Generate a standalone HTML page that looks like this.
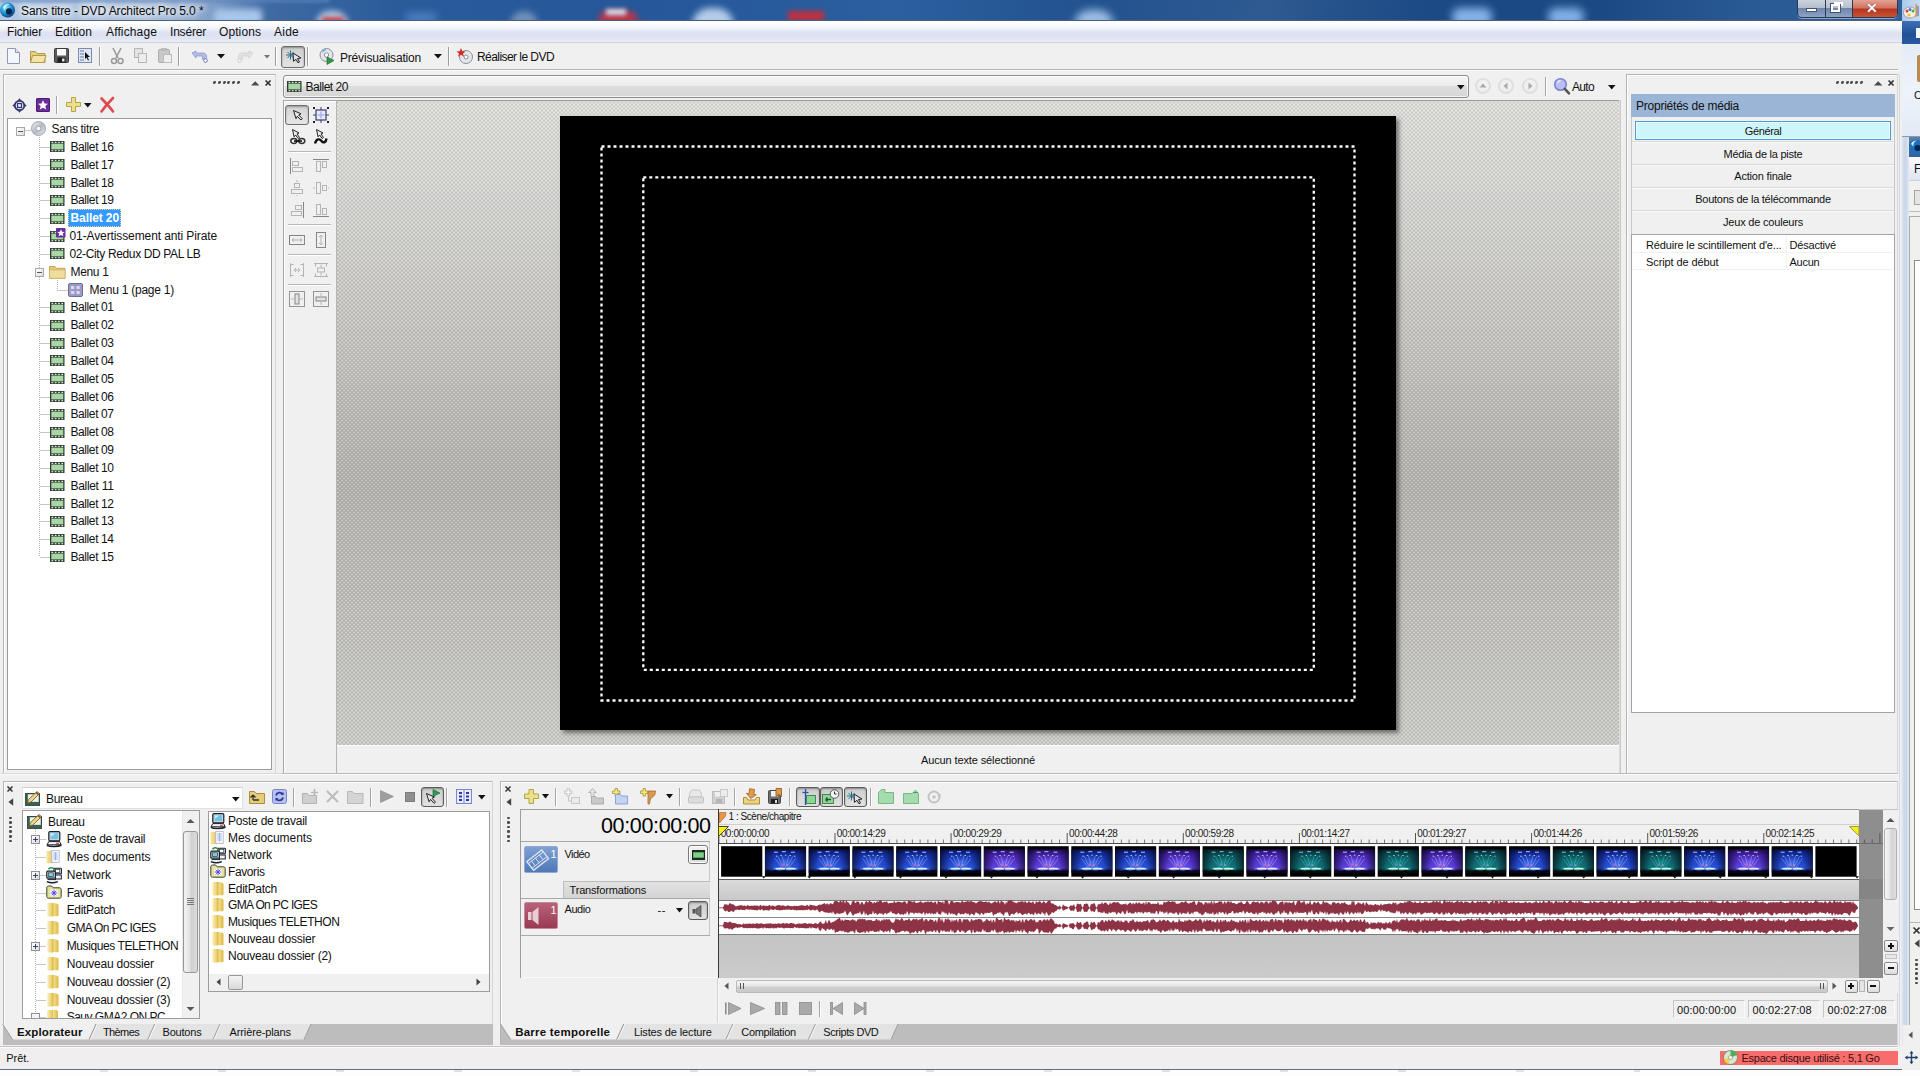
<!DOCTYPE html>
<html><head><meta charset="utf-8"><title>DVD Architect Pro</title>
<style>
html,body{margin:0;padding:0}
body{width:1920px;height:1076px;position:relative;overflow:hidden;background:#f0f0f0;font-family:"Liberation Sans",sans-serif;font-size:12px;color:#000}
div{position:absolute;box-sizing:border-box}
svg{position:absolute;overflow:visible}
.t{white-space:nowrap;line-height:16px;height:16px;color:#111}
.tc{white-space:nowrap;line-height:16px;height:16px;color:#111;text-align:center}
</style></head>
<body>
<!-- title bar -->
<div style="left:0px;top:0px;width:1902px;height:21px;background:linear-gradient(90deg,#b4c8e2 0px,#a9bedb 150px,#86a3ca 205px,#3f6aa3 268px,#2a5b9a 400px,#25579a 640px,#2b5f9e 900px,#245592 1050px,#1c4a86 1300px,#1b4983 1600px,#2a5a94 1750px,#30609a 1900px);overflow:hidden"><div style="left:214px;top:9px;width:48px;height:16px;background:#a9c6ea;filter:blur(3px);border-radius:4px"></div><div style="left:316px;top:11px;width:32px;height:14px;background:#b9cce6;filter:blur(3px);border-radius:14px 14px 0 0"></div><div style="left:322px;top:17px;width:22px;height:6px;background:#c8404c;filter:blur(2px)"></div><div style="left:406px;top:13px;width:30px;height:10px;background:#4f82c4;filter:blur(4px)"></div><div style="left:510px;top:11px;width:28px;height:14px;background:#6f8fb8;filter:blur(3px);border-radius:14px 14px 0 0"></div><div style="left:598px;top:11px;width:40px;height:12px;background:#c23444;filter:blur(3px);border-radius:10px 10px 0 0"></div><div style="left:606px;top:9px;width:20px;height:6px;background:#d9dfea;filter:blur(2px)"></div><div style="left:692px;top:8px;width:42px;height:18px;background:#b4cdea;filter:blur(3.500px);border-radius:18px 18px 0 0"></div><div style="left:788px;top:11px;width:36px;height:10px;background:#c0303f;filter:blur(2.500px)"></div><div style="left:1074px;top:10px;width:40px;height:16px;background:#9fc0e6;filter:blur(4px);border-radius:18px 18px 0 0"></div><div style="left:1452px;top:8px;width:40px;height:18px;background:#86b4e8;filter:blur(4px);border-radius:8px"></div><div style="left:1548px;top:8px;width:36px;height:18px;background:#7fb0e6;filter:blur(4px);border-radius:8px"></div><div style="left:1100px;top:-6px;width:330px;height:34px;background:linear-gradient(100deg,rgba(255,255,255,0),rgba(255,255,255,.08) 50%,rgba(255,255,255,0));"></div><div style="left:0px;top:0px;width:330px;height:2px;background:#5f86bd;filter:blur(1.500px)"></div></div>
<div style="left:0px;top:20px;width:1902px;height:1px;background:#4a5f80"></div>
<div style="left:0px;top:21px;width:1902px;height:1px;background:#fdfdfe"></div>
<svg style="left:0px;top:2px" width="16" height="16" viewBox="0 0 16 16"><defs><radialGradient id="ai" cx="0.4" cy="0.35" r="0.7"><stop offset="0" stop-color="#9fe8ff"/><stop offset="0.45" stop-color="#2aa3e0"/><stop offset="1" stop-color="#083a78"/></radialGradient></defs><circle cx="7.5" cy="8" r="7.5" fill="url(#ai)"/><path d="M3 5 A6 6 0 0 1 10 2.5 A5 5 0 0 0 5 9 Z" fill="#e8fbff" opacity="0.85"/><circle cx="9" cy="9.5" r="3.2" fill="#06264f"/></svg>
<div class="t" style="left:21px;top:2.800px;font-size:12px;letter-spacing:-0.1px;color:#0a0a0a;text-shadow:0 0 6px #fff,0 0 6px #fff,0 0 9px #fff">Sans titre - DVD Architect Pro 5.0 *</div>
<div style="left:1797px;top:0px;width:101px;height:18px;border:1px solid #2a3a55;border-top:none;border-radius:0 0 5px 5px;background:linear-gradient(#cdd3db 0%,#b4bfce 45%,#6f86ab 50%,#8ea3c4 100%);overflow:hidden;box-shadow:0 1px 0 rgba(255,255,255,.45)"><div style="left:27px;top:0;width:1px;height:18px;background:#2a3a55"></div><div style="left:54px;top:0;width:1px;height:18px;background:#2a3a55"></div><div style="left:55px;top:0;width:45px;height:18px;background:linear-gradient(#e3a294 0%,#d0715e 45%,#b9341b 50%,#c8573a 100%)"></div><div style="left:8px;top:8px;width:11px;height:4px;background:#fff;border:1px solid #44556e"></div><div style="left:33px;top:4px;width:9px;height:8px;border:2px solid #fff;outline:1px solid #44556e"></div><div style="left:36px;top:2px;width:9px;height:4px;border-top:2px solid #fff;border-right:2px solid #fff"></div><div class="t" style="left:68px;top:0px;font-size:14px;font-weight:bold;color:#fff;text-shadow:0 0 1px #400">&#10005;</div></div>
<!-- menu bar -->
<div style="left:0px;top:22px;width:1902px;height:21px;background:linear-gradient(#ffffff 0%,#f3f5fb 30%,#dde2f3 50%,#dfe4f3 75%,#ebeef8 100%)"></div>
<div style="left:0px;top:42px;width:1902px;height:1px;background:#cfd2da"></div>
<div class="t" style="left:7px;top:24px;font-size:12px;letter-spacing:-0.143px;">Fichier</div>
<div class="t" style="left:55px;top:24px;font-size:12px;letter-spacing:0.044px;">Edition</div>
<div class="t" style="left:106px;top:24px;font-size:12px;letter-spacing:0.132px;">Affichage</div>
<div class="t" style="left:170px;top:24px;font-size:12px;letter-spacing:-0.192px;">Insérer</div>
<div class="t" style="left:219px;top:24px;font-size:12px;letter-spacing:0.092px;">Options</div>
<div class="t" style="left:274px;top:24px;font-size:12px;letter-spacing:0.246px;">Aide</div>
<!-- toolbar -->
<div style="left:0px;top:43px;width:1900px;height:27px;background:#f0f0f0"></div>
<div style="left:0px;top:69px;width:1900px;height:1px;background:#b4b4b4"></div>
<div style="left:0px;top:70px;width:1900px;height:1px;background:#fbfbfb"></div>
<div style="left:99px;top:47px;width:1px;height:19px;background:#9c9c9c"></div>
<div style="left:100px;top:47px;width:1px;height:19px;background:#fff"></div>
<div style="left:178px;top:47px;width:1px;height:19px;background:#9c9c9c"></div>
<div style="left:179px;top:47px;width:1px;height:19px;background:#fff"></div>
<div style="left:275px;top:47px;width:1px;height:19px;background:#9c9c9c"></div>
<div style="left:276px;top:47px;width:1px;height:19px;background:#fff"></div>
<div style="left:307px;top:47px;width:1px;height:19px;background:#9c9c9c"></div>
<div style="left:308px;top:47px;width:1px;height:19px;background:#fff"></div>
<div style="left:448px;top:47px;width:1px;height:19px;background:#9c9c9c"></div>
<div style="left:449px;top:47px;width:1px;height:19px;background:#fff"></div>
<svg style="left:6px;top:47px" width="16" height="18"><path d="M1.5 1.5h8l4 4v11h-12z" fill="#f4f6fb" stroke="#8f9ab5"/><path d="M9.5 1.5v4h4" fill="#dfe5f3" stroke="#8f9ab5"/></svg>
<svg style="left:29px;top:48px" width="18" height="16"><path d="M1.5 3.5h5l1.5 2h8v9h-14.500z" fill="#e6cf84" stroke="#b39a4a"/><path d="M1.500 14.5l2-7h13.500l-2 7z" fill="#f3e3a4" stroke="#b39a4a"/></svg>
<svg style="left:54px;top:48px" width="16" height="16"><rect x="0.5" y="0.500" width="14" height="14" rx="1" fill="#5c5c5c" stroke="#3c3c3c"/><rect x="3" y="1" width="9" height="6.500" fill="#fafafa"/><rect x="3.500" y="9.500" width="8" height="5" fill="#1c1c1c"/><rect x="8" y="10.500" width="2.500" height="3" fill="#e4e4e4"/></svg>
<svg style="left:78px;top:48px" width="16" height="16"><rect x="0.500" y="0.5" width="13" height="14" fill="#dfe6f4" stroke="#7b8bb0"/><path d="M2 3h4M2 6h4M2 9h4M2 12h4" stroke="#6b7aa6"/><path d="M7 4l5 5h-2.500l1.500 3-1 .5-1.500-3-1.500 1.500z" fill="#111"/></svg>
<svg style="left:110px;top:47px" width="16" height="18"><path d="M3 1l5 10M11 1l-5 10" stroke="#9a9a9a" stroke-width="1.6" fill="none"/><circle cx="4" cy="14" r="2.5" fill="none" stroke="#9a9a9a" stroke-width="1.500"/><circle cx="10.500" cy="14" r="2.500" fill="none" stroke="#9a9a9a" stroke-width="1.5"/></svg>
<svg style="left:133px;top:48px" width="16" height="16"><rect x="1.5" y="0.5" width="8" height="9" fill="#e3e3e3" stroke="#b5b5b5"/><rect x="5.500" y="5.5" width="8" height="9" fill="#ececec" stroke="#b5b5b5"/></svg>
<svg style="left:157px;top:47px" width="16" height="18"><rect x="1.5" y="2.5" width="11" height="13" rx="1" fill="#c9c9c9" stroke="#aaa"/><rect x="4" y="1" width="6" height="3" fill="#bbb"/><rect x="6.500" y="7.5" width="8" height="8" fill="#ededed" stroke="#bbb"/></svg>
<svg style="left:191px;top:50px" width="18" height="14"><path d="M1 3l4-2v2h8a4 4 0 0 1 2 6h-4l1-3h-7v2z" fill="#b3bde6" stroke="#8b97cf" stroke-width="0.8"/><circle cx="14.500" cy="10.5" r="1.8" fill="#fff" stroke="#6b78b8"/></svg>
<svg style="left:217px;top:54px" width="8" height="5"><path d="M0 0h8l-4 4.500z" fill="#111"/></svg>
<svg style="left:236px;top:50px" width="18" height="14"><path d="M17 3l-4-2v2h-8a4 4 0 0 0 -2 6h4l-1-3h7v2z" fill="#e2e2e2" stroke="#cfcfcf" stroke-width="0.8"/><circle cx="3.5" cy="10.5" r="1.800" fill="#f4f4f4" stroke="#cfcfcf"/></svg>
<svg style="left:264px;top:55px" width="6" height="4"><path d="M0 0h6l-3 3.500z" fill="#777"/></svg>
<div style="left:281px;top:46px;width:24px;height:22px;border:1px solid #6d6d6d;border-radius:3px;background:linear-gradient(#cfcfcf,#e4e4e4);box-shadow:inset 0 1px 2px rgba(0,0,0,.35)"></div>
<svg style="left:285px;top:49px" width="18" height="16"><path d="M1 6h9M5.500 1.500v9M2.500 3l6 6M8.500 3l-6 6" stroke="#2b6f86" stroke-width="1"/><path d="M8 4l8 5-3.500.5 2 3.500-1.500.8-2-3.500-2.500 2z" fill="#dfe4ec" stroke="#222" stroke-width="1"/></svg>
<svg style="left:319px;top:48px" width="17" height="17"><circle cx="7.500" cy="7" r="6.500" fill="#e3e6ea" stroke="#8c9198"/><circle cx="7.5" cy="7" r="2.200" fill="#fff" stroke="#8c9198"/><path d="M3 4a6 6 0 0 1 4-2.500" stroke="#7fb7d9" stroke-width="2" fill="none"/><path d="M8 9l7 3.500-7 4z" fill="#2e9a44" stroke="#1e6a30" stroke-width="0.700"/></svg>
<div class="t" style="left:340px;top:49.8px;font-size:12px;letter-spacing:-0.190px;">Prévisualisation</div>
<svg style="left:434px;top:54px" width="8" height="5"><path d="M0 0h8l-4 4.500z" fill="#111"/></svg>
<svg style="left:456px;top:47px" width="18" height="18"><circle cx="10" cy="10" r="6.500" fill="#e3e6ea" stroke="#8c9198"/><circle cx="10" cy="10" r="2" fill="#fff" stroke="#8c9198"/><path d="M5 1l1.300 3.200 3.300.2-2.600 2 1 3.300-3-1.900-3 1.900 1-3.300-2.600-2 3.300-.2z" fill="#d42a2a"/></svg>
<div class="t" style="left:477px;top:48.8px;font-size:12px;letter-spacing:-0.557px;">Réaliser le DVD</div>
<!-- left panel -->
<div style="left:3px;top:74px;width:273px;height:700px;border:1px solid #b4b4b4;border-right-color:#d6d6d6;border-bottom-color:#d6d6d6;background:#f0f0f0"></div>
<div style="left:4px;top:75px;width:271px;height:698px;border-left:1px solid #fff;border-top:1px solid #fff"></div>
<div style="left:213.0px;top:81.4px;width:3.3px;height:2.9px;background:#4a4a4a;border-radius:1.400px;transform:skewX(-15deg)"></div>
<div style="left:217.75px;top:81.4px;width:3.3px;height:2.9px;background:#4a4a4a;border-radius:1.400px;transform:skewX(-15deg)"></div>
<div style="left:222.5px;top:81.4px;width:3.3px;height:2.9px;background:#4a4a4a;border-radius:1.400px;transform:skewX(-15deg)"></div>
<div style="left:227.25px;top:81.4px;width:3.3px;height:2.9px;background:#4a4a4a;border-radius:1.400px;transform:skewX(-15deg)"></div>
<div style="left:232.0px;top:81.4px;width:3.3px;height:2.9px;background:#4a4a4a;border-radius:1.400px;transform:skewX(-15deg)"></div>
<div style="left:236.75px;top:81.4px;width:3.3px;height:2.9px;background:#4a4a4a;border-radius:1.400px;transform:skewX(-15deg)"></div>
<svg style="left:250.60000000000002px;top:80.6px" width="9" height="5"><path d="M0 4.400L4.200 0.200L8.400 4.400z" fill="#4a4a4a"/></svg>
<svg style="left:264.8px;top:80.2px" width="7" height="7"><path d="M0.600 0.500l5 5M5.600 0.500l-5 5" stroke="#333" stroke-width="1.700"/></svg>
<svg style="left:11.500px;top:97.500px" width="15" height="15"><path d="M7.500 0.300l2.600 3.200h-5.200zM7.500 14.700l2.600-3.200h-5.200zM0.300 7.500l3.200-2.600v5.200zM14.700 7.500l-3.200-2.600v5.200z" fill="#34386e"/><circle cx="7.500" cy="7.500" r="4.700" fill="#d4d7f2" stroke="#34386e" stroke-width="1.700"/><rect x="5.600" y="5.600" width="3.800" height="3.800" fill="#fff" stroke="#34386e" stroke-width="1.200"/></svg>
<svg style="left:36px;top:98px" width="14" height="14"><rect x="0" y="0" width="14" height="14" rx="1.500" fill="#6a2c9a"/><rect x="0.500" y="0.500" width="13" height="13" rx="1.500" fill="none" stroke="#4a1a74"/><path d="M7 2.200l1.500 3.300 3.500.3-2.700 2.300.9 3.500L7 9.700 3.800 11.600l.9-3.500L2 5.800l3.500-.3z" fill="#fff"/></svg>
<div style="left:56px;top:96px;width:1px;height:18px;background:#a5a5a5"></div>
<div style="left:57px;top:96px;width:1px;height:18px;background:#fff"></div>
<svg style="left:66px;top:97px" width="16" height="16"><path d="M5.500 0.500h4v5h5v4h-5v5h-4v-5h-5v-4h5z" fill="#ecdf8e" stroke="#b7a545"/></svg>
<svg style="left:84px;top:103px" width="8" height="5"><path d="M0 0h7.500l-3.750 4.500z" fill="#111"/></svg>
<svg style="left:100px;top:97px" width="15" height="16"><path d="M1.500 1.500c4 4 8 8 11.500 13M13 1c-4 4-8 8.500-11.500 13.500" stroke="#dc4a52" stroke-width="2.600" fill="none" stroke-linecap="round"/></svg>
<div style="left:7px;top:118px;width:265px;height:652px;background:#fff;border:1px solid #9c9c9c"></div>
<div style="left:39px;top:137px;width:1px;height:420px;background:repeating-linear-gradient(180deg,#b5b5b5 0,#b5b5b5 1px,transparent 1px,transparent 2px)"></div>
<div style="left:25px;top:130px;width:6px;height:1px;background:#c6c6c6"></div>
<div style="left:16px;top:126.5px;width:9px;height:9px;border:1px solid #a8a8a8;background:linear-gradient(135deg,#fff,#dedede)"></div>
<div style="left:18px;top:130.5px;width:5px;height:1px;background:#555"></div>
<svg style="left:31px;top:121px" width="15" height="15"><defs><linearGradient id="dg" x1="0" y1="0" x2="1" y2="1"><stop offset="0" stop-color="#f2f4f7"/><stop offset="0.500" stop-color="#b5bac4"/><stop offset="1" stop-color="#e6e9ee"/></linearGradient></defs><circle cx="7.500" cy="7.500" r="7" fill="url(#dg)" stroke="#9096a3" stroke-width="0.800"/><circle cx="7.500" cy="7.500" r="2.300" fill="#f7f8fa" stroke="#9aa0ad" stroke-width="0.800"/></svg>
<div class="t" style="left:51.5px;top:120.80000000000001px;font-size:12px;letter-spacing:-0.319px;">Sans titre</div>
<div style="left:40px;top:146.8px;width:10px;height:1px;background:#c6c6c6"></div>
<svg style="left:50px;top:141.3px" width="15" height="12"><rect x="0" y="0" width="14.500" height="11" fill="#2f3b2f"/><rect x="1.300" y="2.600" width="12" height="5.800" fill="#a9d6a5"/><rect x="1.5" y="0.800" width="1.700" height="1.200" fill="#dfeede"/><rect x="1.5" y="9.100" width="1.700" height="1.200" fill="#dfeede"/><rect x="4.8" y="0.800" width="1.700" height="1.200" fill="#dfeede"/><rect x="4.8" y="9.100" width="1.700" height="1.200" fill="#dfeede"/><rect x="8.1" y="0.800" width="1.700" height="1.200" fill="#dfeede"/><rect x="8.1" y="9.100" width="1.700" height="1.200" fill="#dfeede"/><rect x="11.399999999999999" y="0.800" width="1.700" height="1.200" fill="#dfeede"/><rect x="11.399999999999999" y="9.100" width="1.700" height="1.200" fill="#dfeede"/></svg>
<div class="t" style="left:70.5px;top:138.8px;font-size:12px;letter-spacing:-0.411px;">Ballet 16</div>
<div style="left:40px;top:164.8px;width:10px;height:1px;background:#c6c6c6"></div>
<svg style="left:50px;top:159.3px" width="15" height="12"><rect x="0" y="0" width="14.500" height="11" fill="#2f3b2f"/><rect x="1.300" y="2.600" width="12" height="5.800" fill="#a9d6a5"/><rect x="1.5" y="0.800" width="1.700" height="1.200" fill="#dfeede"/><rect x="1.5" y="9.100" width="1.700" height="1.200" fill="#dfeede"/><rect x="4.8" y="0.800" width="1.700" height="1.200" fill="#dfeede"/><rect x="4.8" y="9.100" width="1.700" height="1.200" fill="#dfeede"/><rect x="8.1" y="0.800" width="1.700" height="1.200" fill="#dfeede"/><rect x="8.1" y="9.100" width="1.700" height="1.200" fill="#dfeede"/><rect x="11.399999999999999" y="0.800" width="1.700" height="1.200" fill="#dfeede"/><rect x="11.399999999999999" y="9.100" width="1.700" height="1.200" fill="#dfeede"/></svg>
<div class="t" style="left:70.5px;top:156.8px;font-size:12px;letter-spacing:-0.411px;">Ballet 17</div>
<div style="left:40px;top:182.8px;width:10px;height:1px;background:#c6c6c6"></div>
<svg style="left:50px;top:177.3px" width="15" height="12"><rect x="0" y="0" width="14.500" height="11" fill="#2f3b2f"/><rect x="1.300" y="2.600" width="12" height="5.800" fill="#a9d6a5"/><rect x="1.5" y="0.800" width="1.700" height="1.200" fill="#dfeede"/><rect x="1.5" y="9.100" width="1.700" height="1.200" fill="#dfeede"/><rect x="4.8" y="0.800" width="1.700" height="1.200" fill="#dfeede"/><rect x="4.8" y="9.100" width="1.700" height="1.200" fill="#dfeede"/><rect x="8.1" y="0.800" width="1.700" height="1.200" fill="#dfeede"/><rect x="8.1" y="9.100" width="1.700" height="1.200" fill="#dfeede"/><rect x="11.399999999999999" y="0.800" width="1.700" height="1.200" fill="#dfeede"/><rect x="11.399999999999999" y="9.100" width="1.700" height="1.200" fill="#dfeede"/></svg>
<div class="t" style="left:70.5px;top:174.8px;font-size:12px;letter-spacing:-0.411px;">Ballet 18</div>
<div style="left:40px;top:200.3px;width:10px;height:1px;background:#c6c6c6"></div>
<svg style="left:50px;top:194.8px" width="15" height="12"><rect x="0" y="0" width="14.500" height="11" fill="#2f3b2f"/><rect x="1.300" y="2.600" width="12" height="5.800" fill="#a9d6a5"/><rect x="1.5" y="0.800" width="1.700" height="1.200" fill="#dfeede"/><rect x="1.5" y="9.100" width="1.700" height="1.200" fill="#dfeede"/><rect x="4.8" y="0.800" width="1.700" height="1.200" fill="#dfeede"/><rect x="4.8" y="9.100" width="1.700" height="1.200" fill="#dfeede"/><rect x="8.1" y="0.800" width="1.700" height="1.200" fill="#dfeede"/><rect x="8.1" y="9.100" width="1.700" height="1.200" fill="#dfeede"/><rect x="11.399999999999999" y="0.800" width="1.700" height="1.200" fill="#dfeede"/><rect x="11.399999999999999" y="9.100" width="1.700" height="1.200" fill="#dfeede"/></svg>
<div class="t" style="left:70.5px;top:192.3px;font-size:12px;letter-spacing:-0.411px;">Ballet 19</div>
<div style="left:40px;top:218.3px;width:10px;height:1px;background:#c6c6c6"></div>
<svg style="left:50px;top:212.8px" width="15" height="12"><rect x="0" y="0" width="14.500" height="11" fill="#2f3b2f"/><rect x="1.300" y="2.600" width="12" height="5.800" fill="#a9d6a5"/><rect x="1.5" y="0.800" width="1.700" height="1.200" fill="#dfeede"/><rect x="1.5" y="9.100" width="1.700" height="1.200" fill="#dfeede"/><rect x="4.8" y="0.800" width="1.700" height="1.200" fill="#dfeede"/><rect x="4.8" y="9.100" width="1.700" height="1.200" fill="#dfeede"/><rect x="8.1" y="0.800" width="1.700" height="1.200" fill="#dfeede"/><rect x="8.1" y="9.100" width="1.700" height="1.200" fill="#dfeede"/><rect x="11.399999999999999" y="0.800" width="1.700" height="1.200" fill="#dfeede"/><rect x="11.399999999999999" y="9.100" width="1.700" height="1.200" fill="#dfeede"/></svg>
<div style="left:68px;top:209.3px;width:53px;height:18px;background:#3399ff;border:1px dotted #f0d0a0"></div>
<div class="t" style="left:70.5px;top:210.3px;font-size:12px;letter-spacing:-0.095px;font-weight:bold;color:#fff;">Ballet 20</div>
<div style="left:40px;top:236.10000000000002px;width:10px;height:1px;background:#c6c6c6"></div>
<svg style="left:50px;top:230.60000000000002px" width="15" height="12"><rect x="0" y="0" width="14.500" height="11" fill="#2f3b2f"/><rect x="1.300" y="2.600" width="12" height="5.800" fill="#a9d6a5"/><rect x="1.5" y="0.800" width="1.700" height="1.200" fill="#dfeede"/><rect x="1.5" y="9.100" width="1.700" height="1.200" fill="#dfeede"/><rect x="4.8" y="0.800" width="1.700" height="1.200" fill="#dfeede"/><rect x="4.8" y="9.100" width="1.700" height="1.200" fill="#dfeede"/><rect x="8.1" y="0.800" width="1.700" height="1.200" fill="#dfeede"/><rect x="8.1" y="9.100" width="1.700" height="1.200" fill="#dfeede"/><rect x="11.399999999999999" y="0.800" width="1.700" height="1.200" fill="#dfeede"/><rect x="11.399999999999999" y="9.100" width="1.700" height="1.200" fill="#dfeede"/></svg>
<svg style="left:55.8px;top:227.60000000000002px" width="10" height="10"><rect width="9.500" height="9.500" rx="1" fill="#6a2c9a"/><path d="M5 1.300l1.100 2.400 2.600.2-2 1.700.7 2.600L5 6.900 2.600 8.200l.7-2.600-2-1.700 2.600-.2z" fill="#fff"/></svg>
<div class="t" style="left:69.5px;top:228.10000000000002px;font-size:12px;letter-spacing:-0.107px;">01-Avertissement anti Pirate</div>
<div style="left:40px;top:253.8px;width:10px;height:1px;background:#c6c6c6"></div>
<svg style="left:50px;top:248.3px" width="15" height="12"><rect x="0" y="0" width="14.500" height="11" fill="#2f3b2f"/><rect x="1.300" y="2.600" width="12" height="5.800" fill="#a9d6a5"/><rect x="1.5" y="0.800" width="1.700" height="1.200" fill="#dfeede"/><rect x="1.5" y="9.100" width="1.700" height="1.200" fill="#dfeede"/><rect x="4.8" y="0.800" width="1.700" height="1.200" fill="#dfeede"/><rect x="4.8" y="9.100" width="1.700" height="1.200" fill="#dfeede"/><rect x="8.1" y="0.800" width="1.700" height="1.200" fill="#dfeede"/><rect x="8.1" y="9.100" width="1.700" height="1.200" fill="#dfeede"/><rect x="11.399999999999999" y="0.800" width="1.700" height="1.200" fill="#dfeede"/><rect x="11.399999999999999" y="9.100" width="1.700" height="1.200" fill="#dfeede"/></svg>
<div class="t" style="left:69.5px;top:245.8px;font-size:12px;letter-spacing:-0.365px;">02-City Redux DD PAL LB</div>
<div style="left:40px;top:271.8px;width:2px;height:1px;background:#c6c6c6"></div>
<div style="left:35px;top:267.8px;width:9px;height:9px;border:1px solid #a8a8a8;background:linear-gradient(135deg,#fff,#dedede)"></div>
<div style="left:37px;top:271.8px;width:5px;height:1px;background:#555"></div>
<svg style="left:49px;top:263.8px" width="17" height="15"><path d="M0.500 2.500h5.500l1.500 1.800h8.500v10h-15.500z" fill="#e3c878" stroke="#c2a656"/><path d="M0.500 6h15.500v8.300h-15.500z" fill="#f0dc9c" stroke="#c9ae62" stroke-width="0.600"/></svg>
<div class="t" style="left:70.5px;top:263.8px;font-size:12px;letter-spacing:-0.337px;">Menu 1</div>
<div style="left:57px;top:279.6px;width:1px;height:10.0px;background:repeating-linear-gradient(180deg,#b5b5b5 0,#b5b5b5 1px,transparent 1px,transparent 2px)"></div>
<div style="left:57px;top:289.6px;width:11px;height:1px;background:#c6c6c6"></div>
<svg style="left:68px;top:282.6px" width="15" height="14"><rect x="0.500" y="0.500" width="14" height="13" rx="1.500" fill="#9b9bc6" stroke="#6f6f9c"/><rect x="3" y="3" width="3.200" height="3" fill="#d9daf0"/><rect x="8.500" y="3" width="3.200" height="3" fill="#d9daf0"/><rect x="3" y="8" width="3.200" height="3" fill="#d9daf0"/><rect x="8.500" y="8" width="3.200" height="3" fill="#d9daf0"/></svg>
<div class="t" style="left:89.5px;top:281.6px;font-size:12px;letter-spacing:-0.236px;">Menu 1 (page 1)</div>
<div style="left:40px;top:307.3px;width:10px;height:1px;background:#c6c6c6"></div>
<svg style="left:50px;top:301.8px" width="15" height="12"><rect x="0" y="0" width="14.500" height="11" fill="#2f3b2f"/><rect x="1.300" y="2.600" width="12" height="5.800" fill="#a9d6a5"/><rect x="1.5" y="0.800" width="1.700" height="1.200" fill="#dfeede"/><rect x="1.5" y="9.100" width="1.700" height="1.200" fill="#dfeede"/><rect x="4.8" y="0.800" width="1.700" height="1.200" fill="#dfeede"/><rect x="4.8" y="9.100" width="1.700" height="1.200" fill="#dfeede"/><rect x="8.1" y="0.800" width="1.700" height="1.200" fill="#dfeede"/><rect x="8.1" y="9.100" width="1.700" height="1.200" fill="#dfeede"/><rect x="11.399999999999999" y="0.800" width="1.700" height="1.200" fill="#dfeede"/><rect x="11.399999999999999" y="9.100" width="1.700" height="1.200" fill="#dfeede"/></svg>
<div class="t" style="left:70.5px;top:299.3px;font-size:12px;letter-spacing:-0.411px;">Ballet 01</div>
<div style="left:40px;top:325.1px;width:10px;height:1px;background:#c6c6c6"></div>
<svg style="left:50px;top:319.6px" width="15" height="12"><rect x="0" y="0" width="14.500" height="11" fill="#2f3b2f"/><rect x="1.300" y="2.600" width="12" height="5.800" fill="#a9d6a5"/><rect x="1.5" y="0.800" width="1.700" height="1.200" fill="#dfeede"/><rect x="1.5" y="9.100" width="1.700" height="1.200" fill="#dfeede"/><rect x="4.8" y="0.800" width="1.700" height="1.200" fill="#dfeede"/><rect x="4.8" y="9.100" width="1.700" height="1.200" fill="#dfeede"/><rect x="8.1" y="0.800" width="1.700" height="1.200" fill="#dfeede"/><rect x="8.1" y="9.100" width="1.700" height="1.200" fill="#dfeede"/><rect x="11.399999999999999" y="0.800" width="1.700" height="1.200" fill="#dfeede"/><rect x="11.399999999999999" y="9.100" width="1.700" height="1.200" fill="#dfeede"/></svg>
<div class="t" style="left:70.5px;top:317.1px;font-size:12px;letter-spacing:-0.411px;">Ballet 02</div>
<div style="left:40px;top:343.0px;width:10px;height:1px;background:#c6c6c6"></div>
<svg style="left:50px;top:337.5px" width="15" height="12"><rect x="0" y="0" width="14.500" height="11" fill="#2f3b2f"/><rect x="1.300" y="2.600" width="12" height="5.800" fill="#a9d6a5"/><rect x="1.5" y="0.800" width="1.700" height="1.200" fill="#dfeede"/><rect x="1.5" y="9.100" width="1.700" height="1.200" fill="#dfeede"/><rect x="4.8" y="0.800" width="1.700" height="1.200" fill="#dfeede"/><rect x="4.8" y="9.100" width="1.700" height="1.200" fill="#dfeede"/><rect x="8.1" y="0.800" width="1.700" height="1.200" fill="#dfeede"/><rect x="8.1" y="9.100" width="1.700" height="1.200" fill="#dfeede"/><rect x="11.399999999999999" y="0.800" width="1.700" height="1.200" fill="#dfeede"/><rect x="11.399999999999999" y="9.100" width="1.700" height="1.200" fill="#dfeede"/></svg>
<div class="t" style="left:70.5px;top:335.0px;font-size:12px;letter-spacing:-0.411px;">Ballet 03</div>
<div style="left:40px;top:360.8px;width:10px;height:1px;background:#c6c6c6"></div>
<svg style="left:50px;top:355.3px" width="15" height="12"><rect x="0" y="0" width="14.500" height="11" fill="#2f3b2f"/><rect x="1.300" y="2.600" width="12" height="5.800" fill="#a9d6a5"/><rect x="1.5" y="0.800" width="1.700" height="1.200" fill="#dfeede"/><rect x="1.5" y="9.100" width="1.700" height="1.200" fill="#dfeede"/><rect x="4.8" y="0.800" width="1.700" height="1.200" fill="#dfeede"/><rect x="4.8" y="9.100" width="1.700" height="1.200" fill="#dfeede"/><rect x="8.1" y="0.800" width="1.700" height="1.200" fill="#dfeede"/><rect x="8.1" y="9.100" width="1.700" height="1.200" fill="#dfeede"/><rect x="11.399999999999999" y="0.800" width="1.700" height="1.200" fill="#dfeede"/><rect x="11.399999999999999" y="9.100" width="1.700" height="1.200" fill="#dfeede"/></svg>
<div class="t" style="left:70.5px;top:352.8px;font-size:12px;letter-spacing:-0.411px;">Ballet 04</div>
<div style="left:40px;top:378.8px;width:10px;height:1px;background:#c6c6c6"></div>
<svg style="left:50px;top:373.3px" width="15" height="12"><rect x="0" y="0" width="14.500" height="11" fill="#2f3b2f"/><rect x="1.300" y="2.600" width="12" height="5.800" fill="#a9d6a5"/><rect x="1.5" y="0.800" width="1.700" height="1.200" fill="#dfeede"/><rect x="1.5" y="9.100" width="1.700" height="1.200" fill="#dfeede"/><rect x="4.8" y="0.800" width="1.700" height="1.200" fill="#dfeede"/><rect x="4.8" y="9.100" width="1.700" height="1.200" fill="#dfeede"/><rect x="8.1" y="0.800" width="1.700" height="1.200" fill="#dfeede"/><rect x="8.1" y="9.100" width="1.700" height="1.200" fill="#dfeede"/><rect x="11.399999999999999" y="0.800" width="1.700" height="1.200" fill="#dfeede"/><rect x="11.399999999999999" y="9.100" width="1.700" height="1.200" fill="#dfeede"/></svg>
<div class="t" style="left:70.5px;top:370.8px;font-size:12px;letter-spacing:-0.411px;">Ballet 05</div>
<div style="left:40px;top:396.5px;width:10px;height:1px;background:#c6c6c6"></div>
<svg style="left:50px;top:391.0px" width="15" height="12"><rect x="0" y="0" width="14.500" height="11" fill="#2f3b2f"/><rect x="1.300" y="2.600" width="12" height="5.800" fill="#a9d6a5"/><rect x="1.5" y="0.800" width="1.700" height="1.200" fill="#dfeede"/><rect x="1.5" y="9.100" width="1.700" height="1.200" fill="#dfeede"/><rect x="4.8" y="0.800" width="1.700" height="1.200" fill="#dfeede"/><rect x="4.8" y="9.100" width="1.700" height="1.200" fill="#dfeede"/><rect x="8.1" y="0.800" width="1.700" height="1.200" fill="#dfeede"/><rect x="8.1" y="9.100" width="1.700" height="1.200" fill="#dfeede"/><rect x="11.399999999999999" y="0.800" width="1.700" height="1.200" fill="#dfeede"/><rect x="11.399999999999999" y="9.100" width="1.700" height="1.200" fill="#dfeede"/></svg>
<div class="t" style="left:70.5px;top:388.5px;font-size:12px;letter-spacing:-0.411px;">Ballet 06</div>
<div style="left:40px;top:414.3px;width:10px;height:1px;background:#c6c6c6"></div>
<svg style="left:50px;top:408.8px" width="15" height="12"><rect x="0" y="0" width="14.500" height="11" fill="#2f3b2f"/><rect x="1.300" y="2.600" width="12" height="5.800" fill="#a9d6a5"/><rect x="1.5" y="0.800" width="1.700" height="1.200" fill="#dfeede"/><rect x="1.5" y="9.100" width="1.700" height="1.200" fill="#dfeede"/><rect x="4.8" y="0.800" width="1.700" height="1.200" fill="#dfeede"/><rect x="4.8" y="9.100" width="1.700" height="1.200" fill="#dfeede"/><rect x="8.1" y="0.800" width="1.700" height="1.200" fill="#dfeede"/><rect x="8.1" y="9.100" width="1.700" height="1.200" fill="#dfeede"/><rect x="11.399999999999999" y="0.800" width="1.700" height="1.200" fill="#dfeede"/><rect x="11.399999999999999" y="9.100" width="1.700" height="1.200" fill="#dfeede"/></svg>
<div class="t" style="left:70.5px;top:406.3px;font-size:12px;letter-spacing:-0.411px;">Ballet 07</div>
<div style="left:40px;top:432.1px;width:10px;height:1px;background:#c6c6c6"></div>
<svg style="left:50px;top:426.6px" width="15" height="12"><rect x="0" y="0" width="14.500" height="11" fill="#2f3b2f"/><rect x="1.300" y="2.600" width="12" height="5.800" fill="#a9d6a5"/><rect x="1.5" y="0.800" width="1.700" height="1.200" fill="#dfeede"/><rect x="1.5" y="9.100" width="1.700" height="1.200" fill="#dfeede"/><rect x="4.8" y="0.800" width="1.700" height="1.200" fill="#dfeede"/><rect x="4.8" y="9.100" width="1.700" height="1.200" fill="#dfeede"/><rect x="8.1" y="0.800" width="1.700" height="1.200" fill="#dfeede"/><rect x="8.1" y="9.100" width="1.700" height="1.200" fill="#dfeede"/><rect x="11.399999999999999" y="0.800" width="1.700" height="1.200" fill="#dfeede"/><rect x="11.399999999999999" y="9.100" width="1.700" height="1.200" fill="#dfeede"/></svg>
<div class="t" style="left:70.5px;top:424.1px;font-size:12px;letter-spacing:-0.411px;">Ballet 08</div>
<div style="left:40px;top:450.0px;width:10px;height:1px;background:#c6c6c6"></div>
<svg style="left:50px;top:444.5px" width="15" height="12"><rect x="0" y="0" width="14.500" height="11" fill="#2f3b2f"/><rect x="1.300" y="2.600" width="12" height="5.800" fill="#a9d6a5"/><rect x="1.5" y="0.800" width="1.700" height="1.200" fill="#dfeede"/><rect x="1.5" y="9.100" width="1.700" height="1.200" fill="#dfeede"/><rect x="4.8" y="0.800" width="1.700" height="1.200" fill="#dfeede"/><rect x="4.8" y="9.100" width="1.700" height="1.200" fill="#dfeede"/><rect x="8.1" y="0.800" width="1.700" height="1.200" fill="#dfeede"/><rect x="8.1" y="9.100" width="1.700" height="1.200" fill="#dfeede"/><rect x="11.399999999999999" y="0.800" width="1.700" height="1.200" fill="#dfeede"/><rect x="11.399999999999999" y="9.100" width="1.700" height="1.200" fill="#dfeede"/></svg>
<div class="t" style="left:70.5px;top:442.0px;font-size:12px;letter-spacing:-0.411px;">Ballet 09</div>
<div style="left:40px;top:467.8px;width:10px;height:1px;background:#c6c6c6"></div>
<svg style="left:50px;top:462.3px" width="15" height="12"><rect x="0" y="0" width="14.500" height="11" fill="#2f3b2f"/><rect x="1.300" y="2.600" width="12" height="5.800" fill="#a9d6a5"/><rect x="1.5" y="0.800" width="1.700" height="1.200" fill="#dfeede"/><rect x="1.5" y="9.100" width="1.700" height="1.200" fill="#dfeede"/><rect x="4.8" y="0.800" width="1.700" height="1.200" fill="#dfeede"/><rect x="4.8" y="9.100" width="1.700" height="1.200" fill="#dfeede"/><rect x="8.1" y="0.800" width="1.700" height="1.200" fill="#dfeede"/><rect x="8.1" y="9.100" width="1.700" height="1.200" fill="#dfeede"/><rect x="11.399999999999999" y="0.800" width="1.700" height="1.200" fill="#dfeede"/><rect x="11.399999999999999" y="9.100" width="1.700" height="1.200" fill="#dfeede"/></svg>
<div class="t" style="left:70.5px;top:459.8px;font-size:12px;letter-spacing:-0.411px;">Ballet 10</div>
<div style="left:40px;top:485.8px;width:10px;height:1px;background:#c6c6c6"></div>
<svg style="left:50px;top:480.3px" width="15" height="12"><rect x="0" y="0" width="14.500" height="11" fill="#2f3b2f"/><rect x="1.300" y="2.600" width="12" height="5.800" fill="#a9d6a5"/><rect x="1.5" y="0.800" width="1.700" height="1.200" fill="#dfeede"/><rect x="1.5" y="9.100" width="1.700" height="1.200" fill="#dfeede"/><rect x="4.8" y="0.800" width="1.700" height="1.200" fill="#dfeede"/><rect x="4.8" y="9.100" width="1.700" height="1.200" fill="#dfeede"/><rect x="8.1" y="0.800" width="1.700" height="1.200" fill="#dfeede"/><rect x="8.1" y="9.100" width="1.700" height="1.200" fill="#dfeede"/><rect x="11.399999999999999" y="0.800" width="1.700" height="1.200" fill="#dfeede"/><rect x="11.399999999999999" y="9.100" width="1.700" height="1.200" fill="#dfeede"/></svg>
<div class="t" style="left:70.5px;top:477.8px;font-size:12px;letter-spacing:-0.312px;">Ballet 11</div>
<div style="left:40px;top:503.5px;width:10px;height:1px;background:#c6c6c6"></div>
<svg style="left:50px;top:498.0px" width="15" height="12"><rect x="0" y="0" width="14.500" height="11" fill="#2f3b2f"/><rect x="1.300" y="2.600" width="12" height="5.800" fill="#a9d6a5"/><rect x="1.5" y="0.800" width="1.700" height="1.200" fill="#dfeede"/><rect x="1.5" y="9.100" width="1.700" height="1.200" fill="#dfeede"/><rect x="4.8" y="0.800" width="1.700" height="1.200" fill="#dfeede"/><rect x="4.8" y="9.100" width="1.700" height="1.200" fill="#dfeede"/><rect x="8.1" y="0.800" width="1.700" height="1.200" fill="#dfeede"/><rect x="8.1" y="9.100" width="1.700" height="1.200" fill="#dfeede"/><rect x="11.399999999999999" y="0.800" width="1.700" height="1.200" fill="#dfeede"/><rect x="11.399999999999999" y="9.100" width="1.700" height="1.200" fill="#dfeede"/></svg>
<div class="t" style="left:70.5px;top:495.5px;font-size:12px;letter-spacing:-0.411px;">Ballet 12</div>
<div style="left:40px;top:521.3px;width:10px;height:1px;background:#c6c6c6"></div>
<svg style="left:50px;top:515.8px" width="15" height="12"><rect x="0" y="0" width="14.500" height="11" fill="#2f3b2f"/><rect x="1.300" y="2.600" width="12" height="5.800" fill="#a9d6a5"/><rect x="1.5" y="0.800" width="1.700" height="1.200" fill="#dfeede"/><rect x="1.5" y="9.100" width="1.700" height="1.200" fill="#dfeede"/><rect x="4.8" y="0.800" width="1.700" height="1.200" fill="#dfeede"/><rect x="4.8" y="9.100" width="1.700" height="1.200" fill="#dfeede"/><rect x="8.1" y="0.800" width="1.700" height="1.200" fill="#dfeede"/><rect x="8.1" y="9.100" width="1.700" height="1.200" fill="#dfeede"/><rect x="11.399999999999999" y="0.800" width="1.700" height="1.200" fill="#dfeede"/><rect x="11.399999999999999" y="9.100" width="1.700" height="1.200" fill="#dfeede"/></svg>
<div class="t" style="left:70.5px;top:513.3px;font-size:12px;letter-spacing:-0.411px;">Ballet 13</div>
<div style="left:40px;top:539.0999999999999px;width:10px;height:1px;background:#c6c6c6"></div>
<svg style="left:50px;top:533.5999999999999px" width="15" height="12"><rect x="0" y="0" width="14.500" height="11" fill="#2f3b2f"/><rect x="1.300" y="2.600" width="12" height="5.800" fill="#a9d6a5"/><rect x="1.5" y="0.800" width="1.700" height="1.200" fill="#dfeede"/><rect x="1.5" y="9.100" width="1.700" height="1.200" fill="#dfeede"/><rect x="4.8" y="0.800" width="1.700" height="1.200" fill="#dfeede"/><rect x="4.8" y="9.100" width="1.700" height="1.200" fill="#dfeede"/><rect x="8.1" y="0.800" width="1.700" height="1.200" fill="#dfeede"/><rect x="8.1" y="9.100" width="1.700" height="1.200" fill="#dfeede"/><rect x="11.399999999999999" y="0.800" width="1.700" height="1.200" fill="#dfeede"/><rect x="11.399999999999999" y="9.100" width="1.700" height="1.200" fill="#dfeede"/></svg>
<div class="t" style="left:70.5px;top:531.0999999999999px;font-size:12px;letter-spacing:-0.411px;">Ballet 14</div>
<div style="left:40px;top:556.8px;width:10px;height:1px;background:#c6c6c6"></div>
<svg style="left:50px;top:551.3px" width="15" height="12"><rect x="0" y="0" width="14.500" height="11" fill="#2f3b2f"/><rect x="1.300" y="2.600" width="12" height="5.800" fill="#a9d6a5"/><rect x="1.5" y="0.800" width="1.700" height="1.200" fill="#dfeede"/><rect x="1.5" y="9.100" width="1.700" height="1.200" fill="#dfeede"/><rect x="4.8" y="0.800" width="1.700" height="1.200" fill="#dfeede"/><rect x="4.8" y="9.100" width="1.700" height="1.200" fill="#dfeede"/><rect x="8.1" y="0.800" width="1.700" height="1.200" fill="#dfeede"/><rect x="8.1" y="9.100" width="1.700" height="1.200" fill="#dfeede"/><rect x="11.399999999999999" y="0.800" width="1.700" height="1.200" fill="#dfeede"/><rect x="11.399999999999999" y="9.100" width="1.700" height="1.200" fill="#dfeede"/></svg>
<div class="t" style="left:70.5px;top:548.8px;font-size:12px;letter-spacing:-0.411px;">Ballet 15</div>
<!-- center panel -->
<div style="left:282px;top:100px;width:1339px;height:674px;border:1px solid #c9c9c9;border-top:none;border-left:none;background:#f0f0f0"></div>
<div style="left:283px;top:75px;width:1186px;height:23px;border:1px solid #8e8e8e;border-radius:3px;background:linear-gradient(#f6f6f6 0%,#ececec 45%,#dddddd 50%,#d6d6d6 100%);box-shadow:inset 0 0 0 1px rgba(255,255,255,.7)"></div>
<svg style="left:286.5px;top:81px" width="15" height="12"><rect x="0" y="0" width="14.500" height="11" fill="#2f3b2f"/><rect x="1.300" y="2.600" width="12" height="5.800" fill="#a9d6a5"/><rect x="1.5" y="0.800" width="1.700" height="1.200" fill="#dfeede"/><rect x="1.5" y="9.100" width="1.700" height="1.200" fill="#dfeede"/><rect x="4.8" y="0.800" width="1.700" height="1.200" fill="#dfeede"/><rect x="4.8" y="9.100" width="1.700" height="1.200" fill="#dfeede"/><rect x="8.1" y="0.800" width="1.700" height="1.200" fill="#dfeede"/><rect x="8.1" y="9.100" width="1.700" height="1.200" fill="#dfeede"/><rect x="11.399999999999999" y="0.800" width="1.700" height="1.200" fill="#dfeede"/><rect x="11.399999999999999" y="9.100" width="1.700" height="1.200" fill="#dfeede"/></svg>
<div class="t" style="left:305.5px;top:78.5px;font-size:12px;letter-spacing:-0.466px;">Ballet 20</div>
<svg style="left:1457px;top:85px" width="8" height="5"><path d="M0 0h7.500l-3.750 4.500z" fill="#111"/></svg>
<svg style="left:1474.5px;top:78px" width="16" height="16"><circle cx="8" cy="8" r="7.300" fill="#e6e6e6" stroke="#d6d6d6"/><circle cx="8" cy="7.500" r="5.800" fill="#f0f0f0"/><path d="M4.500 9.500l3.500-4 3.500 4z" fill="#a9a9a9"/></svg>
<svg style="left:1498px;top:78px" width="16" height="16"><circle cx="8" cy="8" r="7.300" fill="#e6e6e6" stroke="#d6d6d6"/><circle cx="8" cy="7.500" r="5.800" fill="#f0f0f0"/><path d="M9.500 4.500l-4 3.500 4 3.500z" fill="#a9a9a9"/></svg>
<svg style="left:1522px;top:78px" width="16" height="16"><circle cx="8" cy="8" r="7.300" fill="#e6e6e6" stroke="#d6d6d6"/><circle cx="8" cy="7.500" r="5.800" fill="#f0f0f0"/><path d="M6.500 4.500l4 3.500-4 3.500z" fill="#a9a9a9"/></svg>
<div style="left:1545px;top:77px;width:1px;height:19px;background:#a5a5a5"></div>
<div style="left:1546px;top:77px;width:1px;height:19px;background:#fff"></div>
<svg style="left:1553px;top:77px" width="18" height="18"><circle cx="7.500" cy="7.500" r="5.800" fill="#b9bef6" stroke="#7a84d4" stroke-width="1.600"/><path d="M11.800 11.800l4.200 4.500" stroke="#555" stroke-width="2.600" stroke-linecap="round"/><path d="M4.500 6a3.500 3.500 0 0 1 3-2.500" stroke="#fff" stroke-width="1.200" fill="none"/></svg>
<div class="t" style="left:1572px;top:78.5px;font-size:12px;letter-spacing:-0.671px;">Auto</div>
<svg style="left:1608px;top:85px" width="8" height="5"><path d="M0 0h7.500l-3.750 4.500z" fill="#111"/></svg>
<div style="left:283px;top:100px;width:54px;height:673px;border-left:1px solid #a5a5a5;border-top:1px solid #a5a5a5;background:#f0f0f0"></div>
<div style="left:284px;top:101px;width:52px;height:672px;border-left:1px solid #fff;border-top:1px solid #fff"></div>
<div style="left:336px;top:100px;width:1px;height:673px;background:#b5b5b5"></div>
<div style="left:285px;top:105px;width:24px;height:20px;border:1px solid #6f6f6f;border-radius:3px;background:linear-gradient(#d3d3d3,#e6e6e6);box-shadow:inset 0 1px 2px rgba(0,0,0,.3)"></div>
<svg style="left:292px;top:109px" width="12" height="12"><path d="M1.500 1.500l7.500 3.300-2.300 1.200 3.500 3.700-1.300 1.300-3.600-3.700-1.300 2.400z" fill="#e9e9e9" stroke="#222" stroke-width="1"/></svg>
<svg style="left:313px;top:107px" width="16" height="16"><path d="M8 0v16M0 8h16" stroke="#3a3f66" stroke-width="1"/><rect x="3" y="3" width="10" height="10" fill="#e9ebfc" stroke="#3a3f66" stroke-width="1.200"/><path d="M8 4.500v7M4.500 8h7" stroke="#aab0ee" stroke-width="1.400"/><rect x="0" y="0" width="2" height="2" fill="#222"/><rect x="14" y="0" width="2" height="2" fill="#222"/><rect x="0" y="14" width="2" height="2" fill="#222"/><rect x="14" y="14" width="2" height="2" fill="#222"/></svg>
<svg style="left:290px;top:129px" width="16" height="16"><path d="M2.500 0.500l6.500 3.500-2 1 2.500 3.500-1.300 1-2.600-3.500-1.500 1.800z" fill="#eee" stroke="#222" stroke-width="1"/><ellipse cx="3.800" cy="12" rx="3" ry="2.400" fill="none" stroke="#333" stroke-width="1.500"/><ellipse cx="11.800" cy="12" rx="3" ry="2.400" fill="none" stroke="#333" stroke-width="1.500"/><path d="M4 12h8" stroke="#111" stroke-width="1.600"/></svg>
<svg style="left:314px;top:129px" width="16" height="16"><path d="M2.500 0.500l6.500 3.500-2 1 2.500 3.500-1.300 1-2.600-3.500-1.500 1.800z" fill="#eee" stroke="#222" stroke-width="1"/><path d="M1 14.500c1.500-5 4.500-5 6.500-2.500s4.500 1.500 5-2.500" fill="none" stroke="#111" stroke-width="2.400"/></svg>
<div style="left:288px;top:151px;width:43px;height:1px;background:#b9b9b9"></div>
<div style="left:288px;top:152px;width:43px;height:1px;background:#fff"></div>
<div style="left:288px;top:224px;width:43px;height:1px;background:#b9b9b9"></div>
<div style="left:288px;top:225px;width:43px;height:1px;background:#fff"></div>
<div style="left:288px;top:253.5px;width:43px;height:1px;background:#b9b9b9"></div>
<div style="left:288px;top:254.5px;width:43px;height:1px;background:#fff"></div>
<div style="left:288px;top:283.5px;width:43px;height:1px;background:#b9b9b9"></div>
<div style="left:288px;top:284.5px;width:43px;height:1px;background:#fff"></div>
<svg style="left:289px;top:158px" width="16" height="16" fill="none" stroke="#b4b4b4" stroke-width="1"><path d="M1.500 0v16" stroke="#858585"/><rect x="3.500" y="3.500" width="6" height="4"/><rect x="3.500" y="9.500" width="10" height="4"/></svg>
<svg style="left:313px;top:158px" width="16" height="16" fill="none" stroke="#b4b4b4" stroke-width="1"><path d="M0 1.500h16" stroke="#858585"/><rect x="3.500" y="3.500" width="4" height="10"/><rect x="9.500" y="3.500" width="4" height="6"/></svg>
<svg style="left:289px;top:180px" width="16" height="16" fill="none" stroke="#b4b4b4" stroke-width="1"><path d="M8 0v16" stroke-dasharray="2 1"/><rect x="5.500" y="3.500" width="5" height="4" fill="#f0f0f0"/><rect x="2.500" y="9.500" width="11" height="4" fill="#f0f0f0"/></svg>
<svg style="left:313px;top:180px" width="16" height="16" fill="none" stroke="#b4b4b4" stroke-width="1"><path d="M0 8h16" stroke-dasharray="2 1"/><rect x="3.500" y="2.500" width="4" height="11" fill="#f0f0f0"/><rect x="9.500" y="5.500" width="4" height="5" fill="#f0f0f0"/></svg>
<svg style="left:289px;top:202px" width="16" height="16" fill="none" stroke="#b4b4b4" stroke-width="1"><path d="M14.500 0v16" stroke="#858585"/><rect x="6.500" y="3.500" width="6" height="4"/><rect x="2.500" y="9.500" width="10" height="4"/></svg>
<svg style="left:313px;top:202px" width="16" height="16" fill="none" stroke="#b4b4b4" stroke-width="1"><path d="M0 14.500h16" stroke="#858585"/><rect x="3.500" y="2.500" width="4" height="10"/><rect x="9.500" y="6.500" width="4" height="6"/></svg>
<svg style="left:289px;top:231.5px" width="16" height="16" fill="none" stroke="#b4b4b4" stroke-width="1"><rect x="0.500" y="3.500" width="15" height="9" stroke="#858585"/><path d="M3 8h10M3 8l2-2M3 8l2 2M13 8l-2-2M13 8l-2 2"/></svg>
<svg style="left:313px;top:231.5px" width="16" height="16" fill="none" stroke="#b4b4b4" stroke-width="1"><rect x="3.500" y="0.500" width="9" height="15" stroke="#858585"/><path d="M8 3v10M8 3l-2 2M8 3l2 2M8 13l-2-2M8 13l2-2"/></svg>
<svg style="left:289px;top:262px" width="16" height="16" fill="none" stroke="#b4b4b4" stroke-width="1"><path d="M1.500 1v14M1.500 2.500h3M1.500 13.500h3M14.500 1v14M14.500 2.500h-3M14.500 13.500h-3M5 8h6M5 8l2-2M5 8l2 2M11 8l-2-2M11 8l-2 2"/></svg>
<svg style="left:313px;top:262px" width="16" height="16" fill="none" stroke="#b4b4b4" stroke-width="1"><path d="M1 1.500h14M2.500 1.500v3M13.500 1.500v3M1 14.500h14M2.500 14.500v-3M13.500 14.500v-3"/><rect x="4.500" y="6" width="7" height="4"/><path d="M8 2.500v3M8 10.500v3"/></svg>
<svg style="left:289px;top:291px" width="16" height="16" fill="none" stroke="#b4b4b4" stroke-width="1"><rect x="0.500" y="0.500" width="15" height="15" stroke="#959595"/><rect x="6" y="3" width="4" height="10" fill="#e2e2e2" stroke="#858585"/><path d="M2 8h3M11 8h3"/></svg>
<svg style="left:313px;top:291px" width="16" height="16" fill="none" stroke="#b4b4b4" stroke-width="1"><rect x="0.500" y="0.500" width="15" height="15" stroke="#959595"/><rect x="3" y="6" width="10" height="4" fill="#e2e2e2" stroke="#858585"/><path d="M8 2v3M8 11v3"/></svg>
<div style="left:337px;top:100px;width:1282px;height:645px;background:linear-gradient(180deg,#d9d9d6 0%,#d2d2cf 12%,#c3c2be 33%,#b4b3ae 50%,#afaeaa 60%,#b8b7b3 75%,#c7c7c3 100%);overflow:hidden"><svg width="1282" height="645" style="left:0;top:0"><defs><pattern id="tex" width="4" height="4" patternUnits="userSpaceOnUse"><rect x="0" y="0" width="2" height="1" fill="#fff" opacity=".35"/><rect x="2" y="2" width="2" height="1" fill="#fff" opacity=".35"/><rect x="2" y="0" width="2" height="1" fill="#000" opacity=".07"/><rect x="0" y="2" width="2" height="1" fill="#000" opacity=".07"/></pattern></defs><rect width="1282" height="645" fill="url(#tex)"/></svg></div>
<div style="left:337px;top:100px;width:1282px;height:1px;background:#9c9c9c"></div>
<div style="left:337px;top:745px;width:1282px;height:1px;background:#fcfcfc"></div>
<div style="left:1619px;top:100px;width:1px;height:673px;background:#dcdcdc"></div>
<div style="left:560px;top:116px;width:836px;height:614px;background:#000;box-shadow:3px 3px 4px rgba(40,40,40,.55)"></div>
<svg style="left:560px;top:116px" width="836" height="614"><rect x="41.500" y="30.500" width="753" height="554" fill="none" stroke="#fff" stroke-width="2.300" stroke-dasharray="3 3"/><rect x="83.300" y="61.300" width="670.500" height="492.500" fill="none" stroke="#fff" stroke-width="2.300" stroke-dasharray="3 3"/></svg>
<div class="t" style="left:921px;top:752px;font-size:11px;letter-spacing:-0.121px;">Aucun texte sélectionné</div>
<!-- right panel -->
<div style="left:1626px;top:74px;width:272px;height:700px;border:1px solid #b4b4b4;border-right-color:#d6d6d6;border-bottom-color:#d6d6d6;background:#f0f0f0"></div>
<div style="left:1627px;top:75px;width:270px;height:698px;border-left:1px solid #fff;border-top:1px solid #fff"></div>
<div style="left:1836.0px;top:81.4px;width:3.3px;height:2.9px;background:#4a4a4a;border-radius:1.400px;transform:skewX(-15deg)"></div>
<div style="left:1840.75px;top:81.4px;width:3.3px;height:2.9px;background:#4a4a4a;border-radius:1.400px;transform:skewX(-15deg)"></div>
<div style="left:1845.5px;top:81.4px;width:3.3px;height:2.9px;background:#4a4a4a;border-radius:1.400px;transform:skewX(-15deg)"></div>
<div style="left:1850.25px;top:81.4px;width:3.3px;height:2.9px;background:#4a4a4a;border-radius:1.400px;transform:skewX(-15deg)"></div>
<div style="left:1855.0px;top:81.4px;width:3.3px;height:2.9px;background:#4a4a4a;border-radius:1.400px;transform:skewX(-15deg)"></div>
<div style="left:1859.75px;top:81.4px;width:3.3px;height:2.9px;background:#4a4a4a;border-radius:1.400px;transform:skewX(-15deg)"></div>
<svg style="left:1873.6px;top:80.6px" width="9" height="5"><path d="M0 4.400L4.200 0.200L8.400 4.400z" fill="#4a4a4a"/></svg>
<svg style="left:1887.8px;top:80.2px" width="7" height="7"><path d="M0.600 0.500l5 5M5.600 0.500l-5 5" stroke="#333" stroke-width="1.700"/></svg>
<div style="left:1631px;top:94px;width:264px;height:23px;background:#9ab5d5"></div>
<div class="t" style="left:1636px;top:98px;font-size:12px;letter-spacing:-0.231px;">Propriétés de média</div>
<div style="left:1631px;top:117px;width:264px;height:118px;background:#f0f0f0;border-left:1px solid #c8c8c8;border-right:1px solid #c8c8c8"></div>
<div style="left:1632px;top:141px;width:262px;height:1px;background:#d9d9d9"></div>
<div style="left:1632px;top:142px;width:262px;height:1px;background:#fafafa"></div>
<div style="left:1632px;top:164px;width:262px;height:1px;background:#d9d9d9"></div>
<div style="left:1632px;top:165px;width:262px;height:1px;background:#fafafa"></div>
<div style="left:1632px;top:187px;width:262px;height:1px;background:#d9d9d9"></div>
<div style="left:1632px;top:188px;width:262px;height:1px;background:#fafafa"></div>
<div style="left:1632px;top:210px;width:262px;height:1px;background:#d9d9d9"></div>
<div style="left:1632px;top:211px;width:262px;height:1px;background:#fafafa"></div>
<div style="left:1635px;top:121px;width:256px;height:19px;background:#cdf6fb;border:1px solid #4f9bd8;box-shadow:inset 0 0 0 1px #e8fcff"></div>
<div class="tc" style="left:1631px;top:122.5px;width:264px;font-size:11px;letter-spacing:-0.376px">Général</div>
<div class="tc" style="left:1631px;top:145.8px;width:264px;font-size:11px;letter-spacing:-0.244px">Média de la piste</div>
<div class="tc" style="left:1631px;top:168.2px;width:264px;font-size:11px;letter-spacing:-0.186px">Action finale</div>
<div class="tc" style="left:1631px;top:191.3px;width:264px;font-size:11px;letter-spacing:-0.268px">Boutons de la télécommande</div>
<div class="tc" style="left:1631px;top:214.2px;width:264px;font-size:11px;letter-spacing:-0.197px">Jeux de couleurs</div>
<div style="left:1631px;top:234px;width:264px;height:479px;background:#fff;border:1px solid #a3a3a3"></div>
<div style="left:1633px;top:252px;width:260px;height:1px;background:#f1f1f1"></div>
<div style="left:1633px;top:269px;width:260px;height:1px;background:#f1f1f1"></div>
<div style="left:1786px;top:236px;width:1px;height:34px;background:#f1f1f1"></div>
<div class="t" style="left:1646px;top:237px;font-size:11px;letter-spacing:-0.154px;">Réduire le scintillement d'e...</div>
<div class="t" style="left:1789.5px;top:237px;font-size:11px;letter-spacing:-0.199px;">Désactivé</div>
<div class="t" style="left:1646px;top:253.7px;font-size:11px;letter-spacing:-0.099px;">Script de début</div>
<div class="t" style="left:1789.5px;top:253.7px;font-size:11px;letter-spacing:-0.238px;">Aucun</div>
<!-- explorer panel -->
<div style="left:0px;top:773px;width:282px;height:1px;background:#d9d9d9"></div>
<div style="left:282px;top:773px;width:1616px;height:1px;background:#b9b9b9"></div>
<div style="left:0px;top:774px;width:1898px;height:1px;background:#fbfbfb"></div>
<div style="left:3px;top:781px;width:490px;height:264px;border:1px solid #b4b4b4;border-right-color:#d6d6d6;border-bottom-color:#d6d6d6;background:#f0f0f0"></div>
<div style="left:4px;top:782px;width:488px;height:262px;border-left:1px solid #fff;border-top:1px solid #fff"></div>
<svg style="left:7.3px;top:785.8px" width="7" height="7"><path d="M0.500 0.500l5 5M5.500 0.500l-5 5" stroke="#333" stroke-width="1.500"/></svg>
<svg style="left:7.8px;top:798.2px" width="6" height="9"><path d="M5.200 0.300v7.400l-4.800-3.700z" fill="#444"/></svg>
<div style="left:8.5px;top:816.5px;width:3px;height:2.8px;background:#4a4a4a;border-radius:1.300px"></div>
<div style="left:8.5px;top:821.1px;width:3px;height:2.8px;background:#4a4a4a;border-radius:1.300px"></div>
<div style="left:8.5px;top:825.7px;width:3px;height:2.8px;background:#4a4a4a;border-radius:1.300px"></div>
<div style="left:8.5px;top:830.3px;width:3px;height:2.8px;background:#4a4a4a;border-radius:1.300px"></div>
<div style="left:8.5px;top:834.9px;width:3px;height:2.8px;background:#4a4a4a;border-radius:1.300px"></div>
<div style="left:8.5px;top:839.5px;width:3px;height:2.8px;background:#4a4a4a;border-radius:1.300px"></div>
<div style="left:22px;top:787px;width:221px;height:22px;background:#fff;border:1px solid #e2e2e2;border-top-color:#cfcfcf"></div>
<svg style="left:25px;top:790px" width="16" height="16"><rect x="0.500" y="3.500" width="14" height="12" fill="#c4cabb" stroke="#2c4a40"/><rect x="3" y="5" width="10" height="6.500" fill="#eef1e7"/><rect x="0.500" y="12" width="14" height="3.500" fill="#3c5f50"/><rect x="0.500" y="3.500" width="2.300" height="12" fill="#3c5f50"/><path d="M3.500 9.500l8.500-8 2.500 2-8.500 8.500-3.500 1z" fill="#e9d48a" stroke="#6b5a2a" stroke-width="0.800"/><path d="M11 2.500l2.500 2" stroke="#8a2d2d" stroke-width="1.500"/></svg>
<div class="t" style="left:46px;top:791px;font-size:12px;letter-spacing:-0.365px;">Bureau</div>
<svg style="left:232px;top:797px" width="8" height="5"><path d="M0 0h7.500l-3.750 4.500z" fill="#111"/></svg>
<svg style="left:249px;top:789px" width="16" height="15"><path d="M0.500 2.500h5l1.500 2h8.500v10h-15z" fill="#e6cc78" stroke="#a88f3f"/><path d="M4 11h6M4 11l0-5M4 6l-2.500 2.500M4 6l2.500 2.500" stroke="#333" stroke-width="1.300" fill="none"/></svg>
<svg style="left:272px;top:789px" width="15" height="15"><rect x="0.500" y="0.500" width="14" height="14" rx="2" fill="#b7c0f0" stroke="#7b86cf"/><path d="M4 6.500a3.800 3.800 0 0 1 7-1M11 8.500a3.800 3.800 0 0 1-7 1" stroke="#2c3a9a" stroke-width="1.700" fill="none"/><path d="M11.500 3v3h-3zM3.500 12v-3h3z" fill="#2c3a9a"/></svg>
<div style="left:293px;top:788px;width:1px;height:19px;background:#a5a5a5"></div>
<div style="left:294px;top:788px;width:1px;height:19px;background:#fff"></div>
<svg style="left:302px;top:789px" width="16" height="15"><path d="M0.500 4.500h5l1.500 2h7.500v8h-14z" fill="#cfcfcf" stroke="#b3b3b3"/><path d="M12.500 0v7M9 3.500h7" stroke="#b9b9b9" stroke-width="1.600"/></svg>
<svg style="left:326px;top:790px" width="13" height="13"><path d="M1 1l11 11M12 1l-11 11" stroke="#bdbdbd" stroke-width="2.200"/></svg>
<svg style="left:347px;top:790px" width="17" height="14"><path d="M0.500 1.500h5l1.500 2h9v10h-15.500z" fill="#d4d4d4" stroke="#b9b9b9"/></svg>
<div style="left:370px;top:788px;width:1px;height:19px;background:#a5a5a5"></div>
<div style="left:371px;top:788px;width:1px;height:19px;background:#fff"></div>
<svg style="left:380px;top:790px" width="14" height="13"><path d="M0.500 0.500v12l13-6z" fill="#9d9d9d" stroke="#8a8a8a" stroke-width="0.600"/></svg>
<div style="left:405px;top:792px;width:10px;height:10px;background:#8f8f8f;border:1px solid #7d7d7d"></div>
<div style="left:421px;top:787px;width:23px;height:20px;border:1px solid #5c5c5c;border-radius:3px;background:linear-gradient(#cdcdcd,#e2e2e2);box-shadow:inset 0 1px 2px rgba(0,0,0,.35)"></div>
<svg style="left:424px;top:788px" width="18" height="18"><path d="M9 1.500v7l7-3.500z" fill="#2a9a4f" stroke="#1a6a34" stroke-width="0.600"/><path d="M2.500 5.500l8 3.500-2.500 1.200 3.500 4-1.400 1.200-3.500-4-1.500 2.400z" fill="#e6e6e6" stroke="#222" stroke-width="1"/></svg>
<div style="left:446px;top:788px;width:1px;height:19px;background:#a5a5a5"></div>
<div style="left:447px;top:788px;width:1px;height:19px;background:#fff"></div>
<svg style="left:456px;top:789px" width="16" height="15"><rect x="0.500" y="0.500" width="15" height="14" fill="#e9ecfb" stroke="#7b86cf"/><path d="M3 4h3M3 7.500h3M3 11h3M10 4h3M10 7.500h3M10 11h3" stroke="#2c3a9a" stroke-width="2"/><path d="M8 1v13" stroke="#7b86cf"/></svg>
<svg style="left:478px;top:795px" width="8" height="5"><path d="M0 0h7.500l-3.750 4.500z" fill="#111"/></svg>
<div style="left:22px;top:810px;width:178px;height:209px;background:#fff;border:1px solid #9c9c9c;overflow:hidden"></div>
<div style="left:35px;top:829px;width:1px;height:190px;background:repeating-linear-gradient(180deg,#b5b5b5 0,#b5b5b5 1px,transparent 1px,transparent 2px)"></div>
<svg style="left:27px;top:813px" width="16" height="16"><rect x="0.500" y="3.500" width="14" height="12" fill="#c4cabb" stroke="#2c4a40"/><rect x="3" y="5" width="10" height="6.500" fill="#eef1e7"/><rect x="0.500" y="12" width="14" height="3.500" fill="#3c5f50"/><rect x="0.500" y="3.500" width="2.300" height="12" fill="#3c5f50"/><path d="M3.500 9.500l8.500-8 2.500 2-8.500 8.500-3.500 1z" fill="#e9d48a" stroke="#6b5a2a" stroke-width="0.800"/><path d="M11 2.500l2.500 2" stroke="#8a2d2d" stroke-width="1.500"/></svg>
<div class="t" style="left:48px;top:813.5px;font-size:12px;letter-spacing:-0.365px;">Bureau</div>
<div style="left:36px;top:839px;width:10px;height:1px;background:#c6c6c6"></div>
<div style="left:31px;top:835px;width:9px;height:9px;border:1px solid #919191;background:linear-gradient(135deg,#fff,#dcdcdc)"></div>
<div style="left:33px;top:839px;width:5px;height:1px;background:#33446f"></div>
<div style="left:35px;top:837px;width:1px;height:5px;background:#33446f"></div>
<svg style="left:45.5px;top:831px" width="16" height="16"><rect x="2.800" y="0.600" width="11" height="9.300" rx="1.200" fill="#cdd2dc" stroke="#1c1f28" stroke-width="1.200"/><rect x="4.600" y="2.200" width="7.400" height="5.800" fill="#6cc6ec"/><path d="M5 2.600h4l-4 3z" fill="#d8f2fc"/><path d="M1 13.800l1.800-3.200h10.800l1.600 3.200z" fill="#f4f4f4" stroke="#1c1f28" stroke-width="1"/><path d="M0.800 14.300c3 1.600 11 1.600 14.600 0" fill="none" stroke="#1c1f28" stroke-width="1.500"/><path d="M10 12.300h3" stroke="#c0392b" stroke-width="1"/></svg>
<div class="t" style="left:66.7px;top:831px;font-size:12px;letter-spacing:-0.263px;">Poste de travail</div>
<div style="left:36px;top:856.8px;width:10px;height:1px;background:#c6c6c6"></div>
<svg style="left:45.5px;top:848.8px" width="14" height="15"><defs><linearGradient id="dg2" x1="0" x2="1"><stop offset="0" stop-color="#f7e9a8"/><stop offset="1" stop-color="#e6c04e"/></linearGradient></defs><path d="M0.500 1.800h7v12.400h-7z" fill="url(#dg2)"/><rect x="5.800" y="1.500" width="7.400" height="12" fill="#f9fbff" stroke="#a9b2d0" stroke-width="0.800"/><path d="M7.200 4h4.600M7.200 6h4.600M7.200 8h4.600M7.200 10h4.600M9.500 3v8.500" stroke="#8fa8de" stroke-width="0.800"/></svg>
<div class="t" style="left:66.7px;top:848.8px;font-size:12px;letter-spacing:-0.077px;">Mes documents</div>
<div style="left:36px;top:874.6px;width:10px;height:1px;background:#c6c6c6"></div>
<div style="left:31px;top:870.6px;width:9px;height:9px;border:1px solid #919191;background:linear-gradient(135deg,#fff,#dcdcdc)"></div>
<div style="left:33px;top:874.6px;width:5px;height:1px;background:#33446f"></div>
<div style="left:35px;top:872.6px;width:1px;height:5px;background:#33446f"></div>
<svg style="left:45.5px;top:866.6px" width="16" height="16"><rect x="8" y="1.200" width="7.400" height="5.600" rx="0.800" fill="#e9e9e9" stroke="#16202c" stroke-width="1.100"/><rect x="9.600" y="2.600" width="4.200" height="2.800" fill="#fff" stroke="#16202c" stroke-width="0.600"/><rect x="9.300" y="8" width="6" height="4" fill="#f2f2f2" stroke="#16202c" stroke-width="1"/><rect x="0.800" y="4.200" width="8.600" height="7" rx="1" fill="#dbe4e4" stroke="#16202c" stroke-width="1.200"/><rect x="2.600" y="5.800" width="5" height="3.800" fill="#7fd0d8" stroke="#16202c" stroke-width="0.600"/><path d="M2.500 2.200c1.500-2 4.500-1.800 5.500.3" fill="none" stroke="#2a8a4c" stroke-width="1.500"/><path d="M0.800 14.600c3 1.300 8 1.300 11 0" fill="none" stroke="#16202c" stroke-width="1.500"/><path d="M1.500 12.600h8.500" stroke="#16202c" stroke-width="1"/></svg>
<div class="t" style="left:66.7px;top:866.6px;font-size:12px;letter-spacing:0.070px;">Network</div>
<div style="left:36px;top:892.6px;width:10px;height:1px;background:#c6c6c6"></div>
<svg style="left:45.5px;top:884.6px" width="16" height="14"><path d="M0.800 2.800c0-1 .7-1.800 1.700-1.800h3.200l1.600 1.800h6.200c1 0 1.700.7 1.700 1.700v7c0 1-.7 1.700-1.700 1.700h-11c-1 0-1.700-.7-1.700-1.700z" fill="#e1e2a2" stroke="#3c4024" stroke-width="1"/><rect x="4.300" y="4.600" width="7.400" height="6.800" fill="#fbfbf2"/><path d="M8 4.800v6.400M4.800 8h6.400M5.700 5.700l4.600 4.600M10.300 5.700l-4.600 4.600" stroke="#5238e0" stroke-width="0.900"/></svg>
<div class="t" style="left:66.7px;top:884.6px;font-size:12px;letter-spacing:-0.448px;">Favoris</div>
<div style="left:36px;top:910.4px;width:10px;height:1px;background:#c6c6c6"></div>
<svg style="left:46px;top:902.4px" width="14" height="15"><defs><linearGradient id="fgl" x1="0" x2="1"><stop offset="0" stop-color="#f9f0bc"/><stop offset="1" stop-color="#e6c658"/></linearGradient><linearGradient id="fgr" x1="0" x2="1"><stop offset="0" stop-color="#f6e598"/><stop offset="1" stop-color="#ddb640"/></linearGradient></defs><path d="M1.300 2.300c0-.8.500-1.300 1.300-1.300h4.400v13.500h-4.400c-.8 0-1.300-.5-1.300-1.300z" fill="url(#fgl)"/><path d="M7 0.800l4 1c.9.200 1.500.8 1.500 1.700v9.500c0 .8-.6 1.400-1.400 1.300l-4.100-.3z" fill="url(#fgr)"/><path d="M7 1v13.300" stroke="#cfa838" stroke-width="0.700"/></svg>
<div class="t" style="left:66.7px;top:902.4px;font-size:12px;letter-spacing:-0.318px;">EditPatch</div>
<div style="left:36px;top:928.3px;width:10px;height:1px;background:#c6c6c6"></div>
<svg style="left:46px;top:920.3px" width="14" height="15"><defs><linearGradient id="fgl" x1="0" x2="1"><stop offset="0" stop-color="#f9f0bc"/><stop offset="1" stop-color="#e6c658"/></linearGradient><linearGradient id="fgr" x1="0" x2="1"><stop offset="0" stop-color="#f6e598"/><stop offset="1" stop-color="#ddb640"/></linearGradient></defs><path d="M1.300 2.300c0-.8.500-1.300 1.300-1.300h4.400v13.500h-4.400c-.8 0-1.300-.5-1.300-1.300z" fill="url(#fgl)"/><path d="M7 0.800l4 1c.9.200 1.500.8 1.500 1.700v9.500c0 .8-.6 1.400-1.400 1.300l-4.100-.3z" fill="url(#fgr)"/><path d="M7 1v13.300" stroke="#cfa838" stroke-width="0.700"/></svg>
<div class="t" style="left:66.7px;top:920.3px;font-size:12px;letter-spacing:-0.645px;">GMA On PC IGES</div>
<div style="left:36px;top:945.8px;width:10px;height:1px;background:#c6c6c6"></div>
<div style="left:31px;top:941.8px;width:9px;height:9px;border:1px solid #919191;background:linear-gradient(135deg,#fff,#dcdcdc)"></div>
<div style="left:33px;top:945.8px;width:5px;height:1px;background:#33446f"></div>
<div style="left:35px;top:943.8px;width:1px;height:5px;background:#33446f"></div>
<svg style="left:46px;top:937.8px" width="14" height="15"><defs><linearGradient id="fgl" x1="0" x2="1"><stop offset="0" stop-color="#f9f0bc"/><stop offset="1" stop-color="#e6c658"/></linearGradient><linearGradient id="fgr" x1="0" x2="1"><stop offset="0" stop-color="#f6e598"/><stop offset="1" stop-color="#ddb640"/></linearGradient></defs><path d="M1.300 2.300c0-.8.500-1.300 1.300-1.300h4.400v13.500h-4.400c-.8 0-1.300-.5-1.300-1.300z" fill="url(#fgl)"/><path d="M7 0.800l4 1c.9.200 1.500.8 1.500 1.700v9.500c0 .8-.6 1.400-1.400 1.300l-4.100-.3z" fill="url(#fgr)"/><path d="M7 1v13.300" stroke="#cfa838" stroke-width="0.700"/></svg>
<div class="t" style="left:66.7px;top:937.8px;font-size:12px;letter-spacing:-0.410px;">Musiques TELETHON</div>
<div style="left:36px;top:963.9px;width:10px;height:1px;background:#c6c6c6"></div>
<svg style="left:46px;top:955.9px" width="14" height="15"><defs><linearGradient id="fgl" x1="0" x2="1"><stop offset="0" stop-color="#f9f0bc"/><stop offset="1" stop-color="#e6c658"/></linearGradient><linearGradient id="fgr" x1="0" x2="1"><stop offset="0" stop-color="#f6e598"/><stop offset="1" stop-color="#ddb640"/></linearGradient></defs><path d="M1.300 2.300c0-.8.500-1.300 1.300-1.300h4.400v13.500h-4.400c-.8 0-1.300-.5-1.300-1.300z" fill="url(#fgl)"/><path d="M7 0.800l4 1c.9.200 1.500.8 1.500 1.700v9.500c0 .8-.6 1.400-1.400 1.300l-4.100-.3z" fill="url(#fgr)"/><path d="M7 1v13.300" stroke="#cfa838" stroke-width="0.700"/></svg>
<div class="t" style="left:66.7px;top:955.9px;font-size:12px;letter-spacing:-0.190px;">Nouveau dossier</div>
<div style="left:36px;top:982px;width:10px;height:1px;background:#c6c6c6"></div>
<svg style="left:46px;top:974px" width="14" height="15"><defs><linearGradient id="fgl" x1="0" x2="1"><stop offset="0" stop-color="#f9f0bc"/><stop offset="1" stop-color="#e6c658"/></linearGradient><linearGradient id="fgr" x1="0" x2="1"><stop offset="0" stop-color="#f6e598"/><stop offset="1" stop-color="#ddb640"/></linearGradient></defs><path d="M1.300 2.300c0-.8.500-1.300 1.300-1.300h4.400v13.500h-4.400c-.8 0-1.300-.5-1.300-1.300z" fill="url(#fgl)"/><path d="M7 0.800l4 1c.9.200 1.500.8 1.500 1.700v9.500c0 .8-.6 1.400-1.400 1.300l-4.100-.3z" fill="url(#fgr)"/><path d="M7 1v13.300" stroke="#cfa838" stroke-width="0.700"/></svg>
<div class="t" style="left:66.7px;top:974px;font-size:12px;letter-spacing:-0.239px;">Nouveau dossier (2)</div>
<div style="left:36px;top:999.8px;width:10px;height:1px;background:#c6c6c6"></div>
<svg style="left:46px;top:991.8px" width="14" height="15"><defs><linearGradient id="fgl" x1="0" x2="1"><stop offset="0" stop-color="#f9f0bc"/><stop offset="1" stop-color="#e6c658"/></linearGradient><linearGradient id="fgr" x1="0" x2="1"><stop offset="0" stop-color="#f6e598"/><stop offset="1" stop-color="#ddb640"/></linearGradient></defs><path d="M1.300 2.300c0-.8.500-1.300 1.300-1.300h4.400v13.500h-4.400c-.8 0-1.300-.5-1.300-1.300z" fill="url(#fgl)"/><path d="M7 0.800l4 1c.9.200 1.500.8 1.500 1.700v9.500c0 .8-.6 1.400-1.400 1.300l-4.100-.3z" fill="url(#fgr)"/><path d="M7 1v13.300" stroke="#cfa838" stroke-width="0.700"/></svg>
<div class="t" style="left:66.7px;top:991.8px;font-size:12px;letter-spacing:-0.239px;">Nouveau dossier (3)</div>
<div style="left:36px;top:1017.3px;width:10px;height:1px;background:#c6c6c6"></div>
<div style="left:23px;top:1008px;width:30px;height:10px;overflow:hidden"><div style="left:8px;top:5.2999999999999545px;width:9px;height:9px;border:1px solid #919191;background:#f4f4f4"></div></div>
<div style="left:23px;top:1008px;width:160px;height:10px;overflow:hidden"><div class="t" style="left:43.7px;top:1.2999999999999545px;font-size:12px;letter-spacing:-0.502px">Sauv GMA2 ON PC</div><div style="left:24.299999999999997px;top:2.2999999999999545px;width:11px;height:15px;border-radius:2px;background:linear-gradient(90deg,#f9f0bc,#e6c658 50%,#f6e598 52%,#ddb640)"></div></div>
<div style="left:182px;top:811px;width:17px;height:207px;background:#f0f0f0;border-left:1px solid #e8e8e8"></div>
<svg style="left:186px;top:818px" width="9" height="6"><path d="M0.500 5l4-4 4 4z" fill="#555"/></svg>
<svg style="left:186px;top:1006px" width="9" height="6"><path d="M0.500 1l4 4 4-4z" fill="#555"/></svg>
<div style="left:183px;top:831px;width:15px;height:142px;border:1px solid #979797;border-radius:3px;background:linear-gradient(90deg,#f3f3f3 0%,#e3e3e3 45%,#cfcfcf 55%,#dcdcdc 100%)"></div>
<div style="left:187px;top:898px;width:7px;height:1px;background:#777"></div>
<div style="left:187px;top:900px;width:7px;height:1px;background:#777"></div>
<div style="left:187px;top:902px;width:7px;height:1px;background:#777"></div>
<div style="left:187px;top:904px;width:7px;height:1px;background:#777"></div>
<div style="left:208px;top:811px;width:282px;height:181px;background:#fff;border:1px solid #9c9c9c"></div>
<svg style="left:210px;top:813.2px" width="16" height="16"><rect x="2.800" y="0.600" width="11" height="9.300" rx="1.200" fill="#cdd2dc" stroke="#1c1f28" stroke-width="1.200"/><rect x="4.600" y="2.200" width="7.400" height="5.800" fill="#6cc6ec"/><path d="M5 2.600h4l-4 3z" fill="#d8f2fc"/><path d="M1 13.800l1.800-3.200h10.800l1.600 3.200z" fill="#f4f4f4" stroke="#1c1f28" stroke-width="1"/><path d="M0.800 14.300c3 1.600 11 1.600 14.600 0" fill="none" stroke="#1c1f28" stroke-width="1.500"/><path d="M10 12.300h3" stroke="#c0392b" stroke-width="1"/></svg>
<div class="t" style="left:228px;top:813.2px;font-size:12px;letter-spacing:-0.232px;">Poste de travail</div>
<svg style="left:210px;top:830px" width="14" height="15"><defs><linearGradient id="dg2" x1="0" x2="1"><stop offset="0" stop-color="#f7e9a8"/><stop offset="1" stop-color="#e6c04e"/></linearGradient></defs><path d="M0.500 1.800h7v12.400h-7z" fill="url(#dg2)"/><rect x="5.800" y="1.500" width="7.400" height="12" fill="#f9fbff" stroke="#a9b2d0" stroke-width="0.800"/><path d="M7.200 4h4.600M7.200 6h4.600M7.200 8h4.600M7.200 10h4.600M9.500 3v8.500" stroke="#8fa8de" stroke-width="0.800"/></svg>
<div class="t" style="left:228px;top:830px;font-size:12px;letter-spacing:-0.054px;">Mes documents</div>
<svg style="left:210px;top:846.8px" width="16" height="16"><rect x="8" y="1.200" width="7.400" height="5.600" rx="0.800" fill="#e9e9e9" stroke="#16202c" stroke-width="1.100"/><rect x="9.600" y="2.600" width="4.200" height="2.800" fill="#fff" stroke="#16202c" stroke-width="0.600"/><rect x="9.300" y="8" width="6" height="4" fill="#f2f2f2" stroke="#16202c" stroke-width="1"/><rect x="0.800" y="4.200" width="8.600" height="7" rx="1" fill="#dbe4e4" stroke="#16202c" stroke-width="1.200"/><rect x="2.600" y="5.800" width="5" height="3.800" fill="#7fd0d8" stroke="#16202c" stroke-width="0.600"/><path d="M2.500 2.200c1.500-2 4.500-1.800 5.500.3" fill="none" stroke="#2a8a4c" stroke-width="1.500"/><path d="M0.800 14.600c3 1.300 8 1.300 11 0" fill="none" stroke="#16202c" stroke-width="1.500"/><path d="M1.500 12.600h8.500" stroke="#16202c" stroke-width="1"/></svg>
<div class="t" style="left:228px;top:846.8px;font-size:12px;letter-spacing:-0.001px;">Network</div>
<svg style="left:210px;top:863.8px" width="16" height="14"><path d="M0.800 2.800c0-1 .7-1.800 1.700-1.800h3.200l1.600 1.800h6.200c1 0 1.700.7 1.700 1.700v7c0 1-.7 1.700-1.700 1.700h-11c-1 0-1.700-.7-1.700-1.700z" fill="#e1e2a2" stroke="#3c4024" stroke-width="1"/><rect x="4.300" y="4.600" width="7.400" height="6.800" fill="#fbfbf2"/><path d="M8 4.800v6.400M4.800 8h6.400M5.700 5.700l4.600 4.600M10.300 5.700l-4.600 4.600" stroke="#5238e0" stroke-width="0.900"/></svg>
<div class="t" style="left:228px;top:863.8px;font-size:12px;letter-spacing:-0.405px;">Favoris</div>
<svg style="left:211px;top:880.6px" width="14" height="15"><defs><linearGradient id="fgl" x1="0" x2="1"><stop offset="0" stop-color="#f9f0bc"/><stop offset="1" stop-color="#e6c658"/></linearGradient><linearGradient id="fgr" x1="0" x2="1"><stop offset="0" stop-color="#f6e598"/><stop offset="1" stop-color="#ddb640"/></linearGradient></defs><path d="M1.300 2.300c0-.8.500-1.300 1.300-1.300h4.400v13.500h-4.400c-.8 0-1.300-.5-1.300-1.300z" fill="url(#fgl)"/><path d="M7 0.800l4 1c.9.200 1.500.8 1.500 1.700v9.500c0 .8-.6 1.400-1.400 1.300l-4.100-.3z" fill="url(#fgr)"/><path d="M7 1v13.300" stroke="#cfa838" stroke-width="0.700"/></svg>
<div class="t" style="left:228px;top:880.6px;font-size:12px;letter-spacing:-0.262px;">EditPatch</div>
<svg style="left:211px;top:897.4px" width="14" height="15"><defs><linearGradient id="fgl" x1="0" x2="1"><stop offset="0" stop-color="#f9f0bc"/><stop offset="1" stop-color="#e6c658"/></linearGradient><linearGradient id="fgr" x1="0" x2="1"><stop offset="0" stop-color="#f6e598"/><stop offset="1" stop-color="#ddb640"/></linearGradient></defs><path d="M1.300 2.300c0-.8.500-1.300 1.300-1.300h4.400v13.500h-4.400c-.8 0-1.300-.5-1.300-1.300z" fill="url(#fgl)"/><path d="M7 0.800l4 1c.9.200 1.500.8 1.500 1.700v9.500c0 .8-.6 1.400-1.400 1.300l-4.100-.3z" fill="url(#fgr)"/><path d="M7 1v13.300" stroke="#cfa838" stroke-width="0.700"/></svg>
<div class="t" style="left:228px;top:897.4px;font-size:12px;letter-spacing:-0.645px;">GMA On PC IGES</div>
<svg style="left:211px;top:914.2px" width="14" height="15"><defs><linearGradient id="fgl" x1="0" x2="1"><stop offset="0" stop-color="#f9f0bc"/><stop offset="1" stop-color="#e6c658"/></linearGradient><linearGradient id="fgr" x1="0" x2="1"><stop offset="0" stop-color="#f6e598"/><stop offset="1" stop-color="#ddb640"/></linearGradient></defs><path d="M1.300 2.300c0-.8.500-1.300 1.300-1.300h4.400v13.500h-4.400c-.8 0-1.300-.5-1.300-1.300z" fill="url(#fgl)"/><path d="M7 0.800l4 1c.9.200 1.500.8 1.500 1.700v9.500c0 .8-.6 1.400-1.400 1.300l-4.100-.3z" fill="url(#fgr)"/><path d="M7 1v13.300" stroke="#cfa838" stroke-width="0.700"/></svg>
<div class="t" style="left:228px;top:914.2px;font-size:12px;letter-spacing:-0.410px;">Musiques TELETHON</div>
<svg style="left:211px;top:931.2px" width="14" height="15"><defs><linearGradient id="fgl" x1="0" x2="1"><stop offset="0" stop-color="#f9f0bc"/><stop offset="1" stop-color="#e6c658"/></linearGradient><linearGradient id="fgr" x1="0" x2="1"><stop offset="0" stop-color="#f6e598"/><stop offset="1" stop-color="#ddb640"/></linearGradient></defs><path d="M1.300 2.300c0-.8.500-1.300 1.300-1.300h4.400v13.500h-4.400c-.8 0-1.300-.5-1.300-1.300z" fill="url(#fgl)"/><path d="M7 0.800l4 1c.9.200 1.500.8 1.500 1.700v9.500c0 .8-.6 1.400-1.400 1.300l-4.100-.3z" fill="url(#fgr)"/><path d="M7 1v13.300" stroke="#cfa838" stroke-width="0.700"/></svg>
<div class="t" style="left:228px;top:931.2px;font-size:12px;letter-spacing:-0.183px;">Nouveau dossier</div>
<svg style="left:211px;top:948px" width="14" height="15"><defs><linearGradient id="fgl" x1="0" x2="1"><stop offset="0" stop-color="#f9f0bc"/><stop offset="1" stop-color="#e6c658"/></linearGradient><linearGradient id="fgr" x1="0" x2="1"><stop offset="0" stop-color="#f6e598"/><stop offset="1" stop-color="#ddb640"/></linearGradient></defs><path d="M1.300 2.300c0-.8.500-1.300 1.300-1.300h4.400v13.500h-4.400c-.8 0-1.300-.5-1.300-1.300z" fill="url(#fgl)"/><path d="M7 0.800l4 1c.9.200 1.500.8 1.500 1.700v9.500c0 .8-.6 1.400-1.400 1.300l-4.100-.3z" fill="url(#fgr)"/><path d="M7 1v13.300" stroke="#cfa838" stroke-width="0.700"/></svg>
<div class="t" style="left:228px;top:948px;font-size:12px;letter-spacing:-0.234px;">Nouveau dossier (2)</div>
<div style="left:209px;top:974px;width:280px;height:17px;background:#f0f0f0"></div>
<svg style="left:216px;top:978px" width="5" height="8"><path d="M4.500 0.500v7l-4-3.500z" fill="#444"/></svg>
<svg style="left:476px;top:978px" width="5" height="8"><path d="M0.500 0.500v7l4-3.500z" fill="#444"/></svg>
<div style="left:228px;top:975px;width:15px;height:15px;border:1px solid #979797;border-radius:2px;background:linear-gradient(#f5f5f5,#d9d9d9)"></div>
<div style="left:3px;top:1023.5px;width:490px;height:21px;background:#bdbdbd"></div>
<svg style="left:3px;top:1023.5px" width="490" height="21"><path d="M217 0H308L301 15.5H210z" fill="#e3e3e3"/><path d="M308 0L301 15.5" stroke="#9a9a9a" stroke-width="0.900" fill="none"/><path d="M218.2 0L211.2 15.5" stroke="#f8f8f8" stroke-width="1" fill="none"/><path d="M151.7 0H217L210 15.5H144.7z" fill="#e3e3e3"/><path d="M217 0L210 15.5" stroke="#9a9a9a" stroke-width="0.900" fill="none"/><path d="M152.89999999999998 0L145.89999999999998 15.5" stroke="#f8f8f8" stroke-width="1" fill="none"/><path d="M93 0H151.7L144.7 15.5H86z" fill="#e3e3e3"/><path d="M151.7 0L144.7 15.5" stroke="#9a9a9a" stroke-width="0.900" fill="none"/><path d="M94.2 0L87.2 15.5" stroke="#f8f8f8" stroke-width="1" fill="none"/><path d="M0 0H93L86 15.5H10z" fill="#f0f0f0"/><path d="M93 0L86 15.5" stroke="#8a8a8a" stroke-width="0.900" fill="none"/><path d="M-0.5 0L9.5 15.5" stroke="#9a9a9a" stroke-width="0.800" fill="none"/></svg>
<div class="t" style="left:17px;top:1024.2px;font-size:11.5px;letter-spacing:0.145px;font-weight:bold;">Explorateur</div>
<div class="t" style="left:103px;top:1024.2px;font-size:11px;letter-spacing:-0.622px;">Thèmes</div>
<div class="t" style="left:162.5px;top:1024.2px;font-size:11px;letter-spacing:-0.194px;">Boutons</div>
<div class="t" style="left:229.5px;top:1024.2px;font-size:11px;letter-spacing:-0.112px;">Arrière-plans</div>
<!-- timeline panel -->
<div style="left:500px;top:781px;width:1398px;height:264px;border:1px solid #b4b4b4;border-right-color:#d6d6d6;border-bottom-color:#d6d6d6;background:#f0f0f0"></div>
<div style="left:501px;top:782px;width:1396px;height:262px;border-left:1px solid #fff;border-top:1px solid #fff"></div>
<svg style="left:505.3px;top:785.8px" width="7" height="7"><path d="M0.500 0.500l5 5M5.500 0.500l-5 5" stroke="#333" stroke-width="1.500"/></svg>
<svg style="left:505.8px;top:798.2px" width="6" height="9"><path d="M5.200 0.300v7.400l-4.800-3.700z" fill="#444"/></svg>
<div style="left:506.5px;top:816.5px;width:3px;height:2.8px;background:#4a4a4a;border-radius:1.300px"></div>
<div style="left:506.5px;top:821.1px;width:3px;height:2.8px;background:#4a4a4a;border-radius:1.300px"></div>
<div style="left:506.5px;top:825.7px;width:3px;height:2.8px;background:#4a4a4a;border-radius:1.300px"></div>
<div style="left:506.5px;top:830.3px;width:3px;height:2.8px;background:#4a4a4a;border-radius:1.300px"></div>
<div style="left:506.5px;top:834.9px;width:3px;height:2.8px;background:#4a4a4a;border-radius:1.300px"></div>
<div style="left:506.5px;top:839.5px;width:3px;height:2.8px;background:#4a4a4a;border-radius:1.300px"></div>
<svg style="left:524px;top:789px" width="15" height="15"><path d="M5 0.500h4.500v4.500h5v4.500h-5v5h-4.500v-5h-4.500v-4.500h4.500z" fill="#ecdf8e" stroke="#b7a545"/></svg>
<svg style="left:542px;top:794px" width="7" height="5"><path d="M0 0h7l-3.500 4.500z" fill="#111"/></svg>
<div style="left:555px;top:788px;width:1px;height:18px;background:#a5a5a5"></div>
<div style="left:556px;top:788px;width:1px;height:18px;background:#fff"></div>
<svg style="left:564px;top:788px" width="17" height="17"><path d="M3 0.500h2.500v2.500h2.500v2.500h-2.500v2.500h-2.500v-2.500h-2.500v-2.500h2.500z" fill="#f2f2f2" stroke="#bcbcbc" stroke-width="0.800"/><path d="M4.500 8v5h3" stroke="#c4c4c4" fill="none"/><rect x="7.500" y="9.500" width="8" height="6" fill="#ececec" stroke="#c8c8c8"/></svg>
<svg style="left:588px;top:788px" width="17" height="17"><path d="M4.500 0.500l4 4h-2.500v4h-3v-4h-2.500z" fill="#e2e2e2" stroke="#b3b3b3" stroke-width="0.900"/><path d="M3.500 8.500h4l1 1.500h7v6h-12z" fill="#c9c9c9" stroke="#adadad"/></svg>
<svg style="left:612px;top:788px" width="17" height="17"><path d="M3 0.500h2.500v2.500h2.500v2.500h-2.500v2.500h-2.500v-2.500h-2.500v-2.500h2.500z" fill="#f2e680" stroke="#a8962c" stroke-width="0.800"/><path d="M3.500 6.500h5l1 1.500h6v8h-12z" fill="#c4d3f1" stroke="#8ea3d6"/></svg>
<svg style="left:640px;top:788px" width="17" height="17"><path d="M3 0.500h2.500v2.500h2.500v2.500h-2.500v2.500h-2.500v-2.500h-2.500v-2.500h2.500z" fill="#f2e680" stroke="#a8962c" stroke-width="0.800"/><path d="M8 3h7.500c0 5-3 6-5 7.500l-1 5.500h-1.500z" fill="#dc9a50" stroke="#a86a2c" stroke-width="0.800"/></svg>
<svg style="left:666px;top:794px" width="7" height="5"><path d="M0 0h7l-3.500 4.500z" fill="#111"/></svg>
<div style="left:679px;top:788px;width:1px;height:18px;background:#a5a5a5"></div>
<div style="left:680px;top:788px;width:1px;height:18px;background:#fff"></div>
<svg style="left:688px;top:789px" width="16" height="16"><path d="M3.500 1h8l2 4v3h-12v-3z" fill="#e9e9e9" stroke="#c9c9c9"/><rect x="0.500" y="8" width="15" height="6" rx="1" fill="#dcdcdc" stroke="#c4c4c4"/></svg>
<svg style="left:712px;top:789px" width="16" height="16"><rect x="0.500" y="2.500" width="12" height="12" fill="#d0d0d0" stroke="#bdbdbd"/><rect x="3" y="3" width="7" height="4.500" fill="#f0f0f0"/><rect x="4" y="10" width="6" height="4" fill="#b5b5b5"/><rect x="8.500" y="0.500" width="7" height="7" fill="#ececec" stroke="#c9c9c9"/></svg>
<div style="left:734px;top:788px;width:1px;height:18px;background:#a5a5a5"></div>
<div style="left:735px;top:788px;width:1px;height:18px;background:#fff"></div>
<svg style="left:743px;top:788px" width="17" height="17"><path d="M6 1h5v5h2.500l-5 4.500-5-4.500h2.500z" fill="#e19a4a" stroke="#a4682a" stroke-width="0.800" transform="rotate(8 8 5)"/><path d="M0.500 9.500h3l1.500 2.500h7l1.500-2.500h3v6.500h-16z" fill="#ecd27c" stroke="#a88f3f"/></svg>
<svg style="left:767px;top:788px" width="17" height="17"><rect x="1.500" y="2.500" width="12" height="13" rx="1" fill="#6c6c6c" stroke="#4a4a4a"/><rect x="4" y="3" width="7" height="5.500" fill="#f2f2f2"/><rect x="4" y="11" width="7" height="4.500" fill="#1c1c1c"/><rect x="8" y="12" width="2" height="3" fill="#ddd"/><path d="M9 0.500h5.500v8l-2.700-2-2.800 2z" fill="#e19a4a" stroke="#8a541e" stroke-width="0.800"/></svg>
<div style="left:789px;top:788px;width:1px;height:18px;background:#a5a5a5"></div>
<div style="left:790px;top:788px;width:1px;height:18px;background:#fff"></div>
<div style="left:796px;top:787px;width:23.5px;height:20px;border:1px solid #5c5c5c;border-radius:3px;background:linear-gradient(#cdcdcd,#e2e2e2);box-shadow:inset 0 1px 2px rgba(0,0,0,.35)"></div>
<div style="left:819.5px;top:787px;width:23.5px;height:20px;border:1px solid #5c5c5c;border-radius:3px;background:linear-gradient(#cdcdcd,#e2e2e2);box-shadow:inset 0 1px 2px rgba(0,0,0,.35)"></div>
<div style="left:843.5px;top:787px;width:23.5px;height:20px;border:1px solid #5c5c5c;border-radius:3px;background:linear-gradient(#cdcdcd,#e2e2e2);box-shadow:inset 0 1px 2px rgba(0,0,0,.35)"></div>
<svg style="left:799px;top:789px" width="18" height="17"><path d="M6.500 0v16" stroke="#2b4fa8" stroke-width="1.300"/><path d="M3.500 3.500h6" stroke="#2b4fa8" stroke-width="1.300"/><rect x="7.500" y="6.500" width="9" height="8" fill="#8fd49a" stroke="#3f8a4c"/></svg>
<svg style="left:822px;top:789px" width="18" height="17"><rect x="0.500" y="5.500" width="11" height="9" fill="#8fd49a" stroke="#3f8a4c"/><circle cx="12.500" cy="5" r="4.300" fill="#f4f4f4" stroke="#555"/><path d="M12.500 2.500v2.500h2" stroke="#333" fill="none"/><path d="M9 10.500h-5.500M3.500 10.500l2-2M3.500 10.500l2 2" stroke="#1f5a2b" stroke-width="1.300" fill="none"/></svg>
<svg style="left:846px;top:790px" width="18" height="16"><path d="M1 6h9M5.500 1.500v9M2.500 3l6 6M8.500 3l-6 6" stroke="#2b6f86" stroke-width="1"/><path d="M8 4l8 5-3.500.5 2 3.500-1.500.8-2-3.500-2.500 2z" fill="#dfe4ec" stroke="#222" stroke-width="1"/></svg>
<div style="left:870px;top:788px;width:1px;height:18px;background:#a5a5a5"></div>
<div style="left:871px;top:788px;width:1px;height:18px;background:#fff"></div>
<svg style="left:878px;top:789px" width="16" height="15"><path d="M0.500 3.500l3-3h3.500v3h8.500v11h-15z" fill="#a5dcae" stroke="#79b884"/></svg>
<svg style="left:903px;top:789px" width="16" height="15"><path d="M0.500 4.500h9l3-3.500 3 3.500v10h-15z" fill="#a5dcae" stroke="#79b884"/><path d="M10 3.500h5" stroke="#4a9a5a"/></svg>
<svg style="left:927px;top:790px" width="14" height="14"><circle cx="7" cy="7" r="5.500" fill="none" stroke="#c4c4c4" stroke-width="2"/><circle cx="7" cy="7" r="1.800" fill="#c4c4c4"/><path d="M10 5l4-1-1 4z" fill="#c4c4c4"/></svg>
<div style="left:520px;top:809px;width:199px;height:169px;background:#f0f0f0;border-left:1px solid #9c9c9c;border-top:1px solid #9c9c9c"></div>
<div class="t" style="left:601px;top:812px;width:108px;height:28px;line-height:28px;font-size:21.500px;letter-spacing:-0.350px;color:#000;text-align:right">00:00:00:00</div>
<div style="left:521px;top:841px;width:189px;height:1px;background:#a9a9a9"></div>
<div style="left:709px;top:842px;width:1px;height:94px;background:#c9c9c9"></div>
<div style="left:524px;top:846px;width:34px;height:27px;border-radius:2px;background:linear-gradient(#7fa0d3,#4f78b8);border:1px solid #8fa9d4"></div>
<svg style="left:526px;top:848px" width="30" height="24"><g transform="rotate(-38 11 12)"><rect x="2" y="7" width="19" height="11" fill="none" stroke="#dfe7f5" stroke-width="1.300"/><path d="M2 9.500h19M2 15.500h19" stroke="#dfe7f5" stroke-width="0.900"/><path d="M6 9.500v6M11 9.500v6M16 9.500v6" stroke="#dfe7f5" stroke-width="0.900"/></g></svg>
<div class="t" style="left:550.5px;top:846px;font-size:11px;color:#fff;">1</div>
<div class="t" style="left:564.5px;top:845.5px;font-size:11px;letter-spacing:-0.587px;">Vidéo</div>
<div style="left:688px;top:845px;width:20px;height:19px;border:1px solid #7a7a7a;border-radius:3px;background:linear-gradient(#f4f4f4,#d9d9d9);box-shadow:inset 0 0 0 1px #fff"></div>
<svg style="left:691.500px;top:849.500px" width="13" height="10"><rect width="13" height="10" fill="#1d2b1d"/><rect x="1.200" y="2.300" width="10.600" height="5.400" fill="#7fd08a"/></svg>
<div style="left:563px;top:881px;width:147px;height:17px;background:linear-gradient(#e2e2e2,#d4d4d4);border-top:1px solid #bdbdbd;border-left:1px solid #bdbdbd"></div>
<div class="t" style="left:569.5px;top:882.3px;font-size:11px;letter-spacing:-0.170px;">Transformations</div>
<div style="left:521px;top:898px;width:189px;height:1px;background:#a9a9a9"></div>
<div style="left:524px;top:902px;width:34px;height:27px;border-radius:2px;background:linear-gradient(#b8627a,#9a3a52);border:1px solid #c58a9a"></div>
<svg style="left:527px;top:906px" width="16" height="20"><rect x="1" y="6" width="3.500" height="8" fill="#e8cdd4"/><path d="M5.500 6l6-5v18l-6-5z" fill="#e8cdd4"/></svg>
<div class="t" style="left:550.5px;top:902px;font-size:11px;color:#fff;">1</div>
<div class="t" style="left:564.5px;top:901px;font-size:11px;letter-spacing:-0.427px;">Audio</div>
<div class="t" style="left:657.5px;top:901.5px;font-size:11px;letter-spacing:0.587px;">--</div>
<svg style="left:675.500px;top:907.500px" width="7" height="5"><path d="M0 0h7l-3.500 4.500z" fill="#111"/></svg>
<div style="left:688px;top:901px;width:20px;height:19px;border:1px solid #5c5c5c;border-radius:3px;background:linear-gradient(#cdcdcd,#e2e2e2);box-shadow:inset 0 1px 2px rgba(0,0,0,.35)"></div>
<svg style="left:692px;top:904.500px" width="12" height="12"><rect x="0.500" y="4" width="3" height="4.500" fill="#555"/><path d="M4 4l5-3.500v11.500l-5-3.500z" fill="#777" stroke="#444" stroke-width="0.700"/></svg>
<div style="left:521px;top:935px;width:189px;height:1px;background:#a9a9a9"></div>
<div style="left:718px;top:809px;width:1166px;height:169px;background:#c9c9c9"></div>
<div style="left:718px;top:809px;width:1px;height:169px;background:#3a3a3a"></div>
<div style="left:719px;top:809px;width:1140px;height:34px;background:#f0f0f0;border-top:1px solid #9c9c9c"></div>
<div style="left:719px;top:824px;width:1140px;height:1px;background:#d0d0d0"></div>
<svg style="left:719px;top:812px" width="8" height="12"><path d="M0.500 0.500h6.500c0 3-1 5-3.500 7l-3 3.500z" fill="#e8954a" stroke="#b86a2a" stroke-width="0.700"/></svg>
<div class="t" style="left:728.5px;top:809.3px;font-size:10px;letter-spacing:-0.450px;">1 : Scène/chapitre</div>
<svg style="left:0;top:0" width="1920" height="1076"><g stroke="#555" stroke-width="1"><path d="M718.9 833V843"/><path d="M726.6 839.500V843" stroke="#777"/><path d="M734.4 839.500V843" stroke="#777"/><path d="M742.1 839.500V843" stroke="#777"/><path d="M749.9 839.500V843" stroke="#777"/><path d="M757.6 839.500V843" stroke="#777"/><path d="M765.3 839.500V843" stroke="#777"/><path d="M773.1 839.500V843" stroke="#777"/><path d="M780.8 839.500V843" stroke="#777"/><path d="M788.6 839.500V843" stroke="#777"/><path d="M796.3 839.500V843" stroke="#777"/><path d="M804.0 839.500V843" stroke="#777"/><path d="M811.8 839.500V843" stroke="#777"/><path d="M819.5 839.500V843" stroke="#777"/><path d="M827.3 839.500V843" stroke="#777"/><path d="M835.0 833V843"/><path d="M842.7 839.500V843" stroke="#777"/><path d="M850.5 839.500V843" stroke="#777"/><path d="M858.2 839.500V843" stroke="#777"/><path d="M866.0 839.500V843" stroke="#777"/><path d="M873.7 839.500V843" stroke="#777"/><path d="M881.4 839.500V843" stroke="#777"/><path d="M889.2 839.500V843" stroke="#777"/><path d="M896.9 839.500V843" stroke="#777"/><path d="M904.7 839.500V843" stroke="#777"/><path d="M912.4 839.500V843" stroke="#777"/><path d="M920.1 839.500V843" stroke="#777"/><path d="M927.9 839.500V843" stroke="#777"/><path d="M935.6 839.500V843" stroke="#777"/><path d="M943.4 839.500V843" stroke="#777"/><path d="M951.1 833V843"/><path d="M958.8 839.500V843" stroke="#777"/><path d="M966.6 839.500V843" stroke="#777"/><path d="M974.3 839.500V843" stroke="#777"/><path d="M982.1 839.500V843" stroke="#777"/><path d="M989.8 839.500V843" stroke="#777"/><path d="M997.5 839.500V843" stroke="#777"/><path d="M1005.3 839.500V843" stroke="#777"/><path d="M1013.0 839.500V843" stroke="#777"/><path d="M1020.8 839.500V843" stroke="#777"/><path d="M1028.5 839.500V843" stroke="#777"/><path d="M1036.2 839.500V843" stroke="#777"/><path d="M1044.0 839.500V843" stroke="#777"/><path d="M1051.7 839.500V843" stroke="#777"/><path d="M1059.5 839.500V843" stroke="#777"/><path d="M1067.2 833V843"/><path d="M1074.9 839.500V843" stroke="#777"/><path d="M1082.7 839.500V843" stroke="#777"/><path d="M1090.4 839.500V843" stroke="#777"/><path d="M1098.2 839.500V843" stroke="#777"/><path d="M1105.9 839.500V843" stroke="#777"/><path d="M1113.6 839.500V843" stroke="#777"/><path d="M1121.4 839.500V843" stroke="#777"/><path d="M1129.1 839.500V843" stroke="#777"/><path d="M1136.9 839.500V843" stroke="#777"/><path d="M1144.6 839.500V843" stroke="#777"/><path d="M1152.3 839.500V843" stroke="#777"/><path d="M1160.1 839.500V843" stroke="#777"/><path d="M1167.8 839.500V843" stroke="#777"/><path d="M1175.6 839.500V843" stroke="#777"/><path d="M1183.3 833V843"/><path d="M1191.0 839.500V843" stroke="#777"/><path d="M1198.8 839.500V843" stroke="#777"/><path d="M1206.5 839.500V843" stroke="#777"/><path d="M1214.3 839.500V843" stroke="#777"/><path d="M1222.0 839.500V843" stroke="#777"/><path d="M1229.7 839.500V843" stroke="#777"/><path d="M1237.5 839.500V843" stroke="#777"/><path d="M1245.2 839.500V843" stroke="#777"/><path d="M1253.0 839.500V843" stroke="#777"/><path d="M1260.7 839.500V843" stroke="#777"/><path d="M1268.4 839.500V843" stroke="#777"/><path d="M1276.2 839.500V843" stroke="#777"/><path d="M1283.9 839.500V843" stroke="#777"/><path d="M1291.7 839.500V843" stroke="#777"/><path d="M1299.4 833V843"/><path d="M1307.1 839.500V843" stroke="#777"/><path d="M1314.9 839.500V843" stroke="#777"/><path d="M1322.6 839.500V843" stroke="#777"/><path d="M1330.4 839.500V843" stroke="#777"/><path d="M1338.1 839.500V843" stroke="#777"/><path d="M1345.8 839.500V843" stroke="#777"/><path d="M1353.6 839.500V843" stroke="#777"/><path d="M1361.3 839.500V843" stroke="#777"/><path d="M1369.1 839.500V843" stroke="#777"/><path d="M1376.8 839.500V843" stroke="#777"/><path d="M1384.5 839.500V843" stroke="#777"/><path d="M1392.3 839.500V843" stroke="#777"/><path d="M1400.0 839.500V843" stroke="#777"/><path d="M1407.8 839.500V843" stroke="#777"/><path d="M1415.5 833V843"/><path d="M1423.2 839.500V843" stroke="#777"/><path d="M1431.0 839.500V843" stroke="#777"/><path d="M1438.7 839.500V843" stroke="#777"/><path d="M1446.5 839.500V843" stroke="#777"/><path d="M1454.2 839.500V843" stroke="#777"/><path d="M1461.9 839.500V843" stroke="#777"/><path d="M1469.7 839.500V843" stroke="#777"/><path d="M1477.4 839.500V843" stroke="#777"/><path d="M1485.2 839.500V843" stroke="#777"/><path d="M1492.9 839.500V843" stroke="#777"/><path d="M1500.6 839.500V843" stroke="#777"/><path d="M1508.4 839.500V843" stroke="#777"/><path d="M1516.1 839.500V843" stroke="#777"/><path d="M1523.9 839.500V843" stroke="#777"/><path d="M1531.6 833V843"/><path d="M1539.3 839.500V843" stroke="#777"/><path d="M1547.1 839.500V843" stroke="#777"/><path d="M1554.8 839.500V843" stroke="#777"/><path d="M1562.6 839.500V843" stroke="#777"/><path d="M1570.3 839.500V843" stroke="#777"/><path d="M1578.0 839.500V843" stroke="#777"/><path d="M1585.8 839.500V843" stroke="#777"/><path d="M1593.5 839.500V843" stroke="#777"/><path d="M1601.3 839.500V843" stroke="#777"/><path d="M1609.0 839.500V843" stroke="#777"/><path d="M1616.7 839.500V843" stroke="#777"/><path d="M1624.5 839.500V843" stroke="#777"/><path d="M1632.2 839.500V843" stroke="#777"/><path d="M1640.0 839.500V843" stroke="#777"/><path d="M1647.7 833V843"/><path d="M1655.4 839.500V843" stroke="#777"/><path d="M1663.2 839.500V843" stroke="#777"/><path d="M1670.9 839.500V843" stroke="#777"/><path d="M1678.7 839.500V843" stroke="#777"/><path d="M1686.4 839.500V843" stroke="#777"/><path d="M1694.1 839.500V843" stroke="#777"/><path d="M1701.9 839.500V843" stroke="#777"/><path d="M1709.6 839.500V843" stroke="#777"/><path d="M1717.4 839.500V843" stroke="#777"/><path d="M1725.1 839.500V843" stroke="#777"/><path d="M1732.8 839.500V843" stroke="#777"/><path d="M1740.6 839.500V843" stroke="#777"/><path d="M1748.3 839.500V843" stroke="#777"/><path d="M1756.1 839.500V843" stroke="#777"/><path d="M1763.8 833V843"/><path d="M1771.5 839.500V843" stroke="#777"/><path d="M1779.3 839.500V843" stroke="#777"/><path d="M1787.0 839.500V843" stroke="#777"/><path d="M1794.8 839.500V843" stroke="#777"/><path d="M1802.5 839.500V843" stroke="#777"/><path d="M1810.2 839.500V843" stroke="#777"/><path d="M1818.0 839.500V843" stroke="#777"/><path d="M1825.7 839.500V843" stroke="#777"/><path d="M1833.5 839.500V843" stroke="#777"/><path d="M1841.2 839.500V843" stroke="#777"/><path d="M1848.9 839.500V843" stroke="#777"/><path d="M1856.7 839.500V843" stroke="#777"/><path d="M1864.4 839.500V843" stroke="#777"/><path d="M1872.2 839.500V843" stroke="#777"/><path d="M1879.9 833V843"/></g></svg>
<div class="t" style="left:720.6999999999999px;top:826px;font-size:10px;letter-spacing:-0.393px;color:#222;">00:00:00:00</div>
<div class="t" style="left:836.8px;top:826px;font-size:10px;letter-spacing:-0.393px;color:#222;">00:00:14:29</div>
<div class="t" style="left:952.8999999999999px;top:826px;font-size:10px;letter-spacing:-0.393px;color:#222;">00:00:29:29</div>
<div class="t" style="left:1068.9999999999998px;top:826px;font-size:10px;letter-spacing:-0.393px;color:#222;">00:00:44:28</div>
<div class="t" style="left:1185.1px;top:826px;font-size:10px;letter-spacing:-0.393px;color:#222;">00:00:59:28</div>
<div class="t" style="left:1301.2px;top:826px;font-size:10px;letter-spacing:-0.393px;color:#222;">00:01:14:27</div>
<div class="t" style="left:1417.3px;top:826px;font-size:10px;letter-spacing:-0.393px;color:#222;">00:01:29:27</div>
<div class="t" style="left:1533.3999999999999px;top:826px;font-size:10px;letter-spacing:-0.393px;color:#222;">00:01:44:26</div>
<div class="t" style="left:1649.4999999999998px;top:826px;font-size:10px;letter-spacing:-0.393px;color:#222;">00:01:59:26</div>
<div class="t" style="left:1765.5999999999997px;top:826px;font-size:10px;letter-spacing:-0.393px;color:#222;">00:02:14:25</div>
<svg style="left:718px;top:826px" width="12" height="11"><path d="M0.500 0.500h10l-10 10z" fill="#f4ee1c" stroke="#4a4a10" stroke-width="1"/></svg>
<svg style="left:1849px;top:826px" width="11" height="11"><path d="M0.500 0.500h9.500v9.500z" fill="#f4ee1c" stroke="#8a8a20" stroke-width="0.800"/></svg>
<div style="left:719px;top:842.5px;width:1140px;height:1px;background:#4a4a4a"></div>
<div style="left:719px;top:843.5px;width:1140px;height:35.5px;background:#fff"></div>
<div style="left:719px;top:878.5px;width:1140px;height:1px;background:#5a5a5a"></div>
<div style="left:719px;top:879.5px;width:1140px;height:20px;background:linear-gradient(#dadada,#c9c9c9)"></div>
<div style="left:719px;top:899.5px;width:1140px;height:35px;background:#fff;border-top:1px solid #7d7d7d;border-bottom:1px solid #7d7d7d"></div>
<div style="left:719px;top:916.5px;width:1140px;height:1px;background:#8a8a8a"></div>
<div style="left:719px;top:935px;width:1140px;height:43px;background:linear-gradient(#c4c4c4,#cbcbcb)"></div>
<div style="left:1859px;top:809px;width:24px;height:169px;background:#8e8e8e"></div>
<div style="left:1859px;top:843px;width:24px;height:1px;background:#6a6a6a"></div>
<div style="left:1859px;top:879px;width:24px;height:20px;background:#858585"></div>
<svg style="left:0;top:0" width="1920" height="1076"><g stroke="#5a5a5a" stroke-width="1"><path d="M1864.4 839.5V843"/><path d="M1872.2 839.5V843"/><path d="M1879.9 833V843"/></g></svg>
<svg style="left:0;top:0" width="1920" height="1076"><defs><linearGradient id="tbg" x1="0" y1="0" x2="0" y2="1"><stop offset="0" stop-color="#0a1560"/><stop offset="0.250" stop-color="#1530a6"/><stop offset="0.600" stop-color="#2043c8"/><stop offset="0.800" stop-color="#2a52d6"/><stop offset="0.900" stop-color="#1a2f8a"/><stop offset="1" stop-color="#070c30"/></linearGradient><linearGradient id="tvg" x1="0" y1="0" x2="1" y2="0"><stop offset="0" stop-color="#000" stop-opacity=".55"/><stop offset="0.220" stop-color="#000" stop-opacity="0"/><stop offset="0.780" stop-color="#000" stop-opacity="0"/><stop offset="1" stop-color="#000" stop-opacity=".55"/></linearGradient><radialGradient id="tgl" cx="0.5" cy="0.5" r="0.5"><stop offset="0" stop-color="#5f8cff" stop-opacity=".6"/><stop offset="1" stop-color="#2a50d0" stop-opacity="0"/></radialGradient><g id="thumb"><rect width="41.200" height="30.500" fill="#000"/><rect x="0.300" y="3.300" width="40.600" height="23" fill="url(#tbg)"/><ellipse cx="20.600" cy="16" rx="14" ry="8" fill="url(#tgl)"/><path d="M13 10l5 11M17 9.500l3.500 11.500M24 9.500l-3 11.500M28 10l-5.500 11M10 12l7 9.500M31 12l-7 9.500" stroke="#a9c8ff" stroke-width="0.800" opacity=".5"/><path d="M11 10h1.500M15.500 9.300h1.500M20 9h1.500M24.500 9.300h1.500M29 10h1.500M9 6h4M17 5.500h4M26 6h4" stroke="#cfe0ff" stroke-width="1" opacity=".85"/><ellipse cx="20.600" cy="22.600" rx="13" ry="2" fill="#5fa0ff" opacity=".55"/><ellipse cx="15.500" cy="22.500" rx="5" ry="0.900" fill="#dff4ff" opacity=".95"/><ellipse cx="26" cy="22.500" rx="5" ry="0.900" fill="#dff4ff" opacity=".95"/><circle cx="18.500" cy="18.500" r="1.400" fill="#c86ad0" opacity=".8"/><circle cx="22.500" cy="19" r="1.100" fill="#e88aa0" opacity=".7"/><rect x="0.300" y="3.300" width="40.600" height="23" fill="url(#tvg)"/><path d="M0.300 26.300v-1.800l3-.6 3 .8 4-.9 4 .7 5-.8 5 .9 4-.8 4 .7 4-.8 4.300.7v2.600z" fill="#04061c"/></g></defs><rect x="721.1" y="846.200" width="41.200" height="30.500" fill="#000"/><use href="#thumb" x="764.9" y="846.200"/><path d="M761.8 876.300h4l-2 2.300z" fill="#111"/><use href="#thumb" x="808.6" y="846.200"/><path d="M807.3 876.300h4l-2 2.300z" fill="#111"/><use href="#thumb" x="852.4" y="846.200"/><path d="M852.9 876.300h4l-2 2.300z" fill="#111"/><use href="#thumb" x="896.2" y="846.200"/><path d="M898.4 876.300h4l-2 2.300z" fill="#111"/><use href="#thumb" x="940.0" y="846.200"/><path d="M944.0 876.300h4l-2 2.300z" fill="#111"/><use href="#thumb" x="983.7" y="846.200" style="filter:hue-rotate(22deg)"/><path d="M989.5 876.300h4l-2 2.300z" fill="#111"/><use href="#thumb" x="1027.5" y="846.200" style="filter:hue-rotate(22deg)"/><path d="M1035.0 876.300h4l-2 2.300z" fill="#111"/><use href="#thumb" x="1071.3" y="846.200"/><path d="M1080.6 876.300h4l-2 2.300z" fill="#111"/><use href="#thumb" x="1115.0" y="846.200"/><path d="M1126.2 876.300h4l-2 2.300z" fill="#111"/><use href="#thumb" x="1158.8" y="846.200" style="filter:hue-rotate(22deg)"/><path d="M1171.7 876.300h4l-2 2.300z" fill="#111"/><use href="#thumb" x="1202.6" y="846.200" style="filter:hue-rotate(-55deg) saturate(.8)"/><path d="M1217.2 876.300h4l-2 2.300z" fill="#111"/><use href="#thumb" x="1246.4" y="846.200" style="filter:hue-rotate(22deg)"/><path d="M1262.8 876.300h4l-2 2.300z" fill="#111"/><use href="#thumb" x="1290.1" y="846.200" style="filter:hue-rotate(-55deg) saturate(.8)"/><path d="M1308.3 876.300h4l-2 2.300z" fill="#111"/><use href="#thumb" x="1333.9" y="846.200" style="filter:hue-rotate(22deg)"/><path d="M1353.9 876.300h4l-2 2.300z" fill="#111"/><use href="#thumb" x="1377.7" y="846.200" style="filter:hue-rotate(-55deg) saturate(.8)"/><path d="M1399.5 876.300h4l-2 2.300z" fill="#111"/><use href="#thumb" x="1421.5" y="846.200" style="filter:hue-rotate(22deg)"/><path d="M1445.0 876.300h4l-2 2.300z" fill="#111"/><use href="#thumb" x="1465.2" y="846.200" style="filter:hue-rotate(-55deg) saturate(.8)"/><path d="M1490.5 876.300h4l-2 2.300z" fill="#111"/><use href="#thumb" x="1509.0" y="846.200"/><path d="M1536.1 876.300h4l-2 2.300z" fill="#111"/><use href="#thumb" x="1552.8" y="846.200" style="filter:hue-rotate(-55deg) saturate(.8)"/><path d="M1581.7 876.300h4l-2 2.300z" fill="#111"/><use href="#thumb" x="1596.5" y="846.200"/><path d="M1627.2 876.300h4l-2 2.300z" fill="#111"/><use href="#thumb" x="1640.3" y="846.200" style="filter:hue-rotate(-55deg) saturate(.8)"/><path d="M1672.8 876.300h4l-2 2.300z" fill="#111"/><use href="#thumb" x="1684.1" y="846.200"/><path d="M1718.3 876.300h4l-2 2.300z" fill="#111"/><use href="#thumb" x="1727.9" y="846.200" style="filter:hue-rotate(22deg)"/><path d="M1763.8 876.300h4l-2 2.300z" fill="#111"/><use href="#thumb" x="1771.6" y="846.200"/><path d="M1809.4 876.300h4l-2 2.300z" fill="#111"/><rect x="1815.4" y="846.200" width="41.200" height="30.500" fill="#000"/><path d="M1855.0 876.300h4l-2 2.300z" fill="#111"/></svg>
<svg style="left:0;top:0" width="1920" height="1076"><path d="M723 907.4 L724 905.3 L725 903.6 L726 905.1 L727 904.1 L728 905.4 L729 904.0 L730 903.1 L731 903.7 L732 904.6 L733 904.1 L734 905.0 L735 905.7 L736 906.4 L737 906.0 L738 905.7 L739 905.5 L740 905.6 L741 905.1 L742 905.4 L743 905.7 L744 905.8 L745 905.3 L746 906.5 L747 905.6 L748 904.9 L749 906.0 L750 905.9 L751 905.4 L752 906.0 L753 905.4 L754 905.7 L755 905.2 L756 906.0 L757 905.3 L758 905.8 L759 906.5 L760 905.1 L761 905.1 L762 906.4 L763 905.5 L764 905.3 L765 906.2 L766 905.5 L767 905.9 L768 906.0 L769 905.1 L770 905.2 L771 906.5 L772 905.3 L773 906.1 L774 905.5 L775 906.8 L776 906.0 L777 905.3 L778 905.4 L779 904.8 L780 905.3 L781 905.9 L782 905.3 L783 905.4 L784 905.5 L785 906.3 L786 906.3 L787 905.4 L788 905.2 L789 906.0 L790 905.8 L791 906.2 L792 906.1 L793 906.5 L794 905.4 L795 906.0 L796 905.9 L797 905.7 L798 906.2 L799 905.8 L800 905.5 L801 905.6 L802 905.1 L803 905.4 L804 905.8 L805 905.8 L806 906.1 L807 904.6 L808 905.5 L809 906.4 L810 904.6 L811 905.1 L812 905.1 L813 905.4 L814 905.2 L815 905.8 L816 905.9 L817 906.2 L818 905.1 L819 904.9 L820 904.2 L821 905.2 L822 904.1 L823 904.3 L824 903.0 L825 903.4 L826 904.7 L827 903.3 L828 903.9 L829 904.8 L830 903.5 L831 903.1 L832 904.3 L833 904.0 L834 901.8 L835 901.0 L836 900.9 L837 900.9 L838 901.9 L839 902.4 L840 901.0 L841 900.0 L842 902.9 L843 900.1 L844 899.9 L845 904.0 L846 899.9 L847 901.6 L848 902.5 L849 902.6 L850 904.9 L851 905.1 L852 901.5 L853 901.2 L854 899.9 L855 903.0 L856 902.8 L857 900.9 L858 902.0 L859 901.4 L860 905.1 L861 902.6 L862 902.0 L863 903.1 L864 904.9 L865 902.8 L866 900.8 L867 901.6 L868 903.1 L869 900.6 L870 901.1 L871 902.3 L872 901.7 L873 903.9 L874 901.8 L875 902.6 L876 903.1 L877 901.0 L878 902.1 L879 901.2 L880 899.9 L881 899.9 L882 902.1 L883 903.0 L884 901.3 L885 902.2 L886 901.8 L887 901.0 L888 903.4 L889 903.2 L890 903.1 L891 903.1 L892 902.4 L893 903.2 L894 901.1 L895 901.8 L896 903.3 L897 901.5 L898 901.8 L899 901.8 L900 902.0 L901 902.1 L902 903.2 L903 901.4 L904 901.8 L905 900.9 L906 902.5 L907 904.6 L908 900.4 L909 901.1 L910 900.8 L911 901.7 L912 900.9 L913 902.8 L914 899.9 L915 902.2 L916 902.9 L917 903.1 L918 902.5 L919 902.3 L920 901.7 L921 901.1 L922 902.7 L923 902.6 L924 902.9 L925 901.4 L926 902.0 L927 902.2 L928 900.8 L929 902.4 L930 901.5 L931 901.8 L932 901.5 L933 903.1 L934 902.6 L935 901.3 L936 902.2 L937 904.7 L938 900.2 L939 901.7 L940 902.0 L941 901.9 L942 903.0 L943 901.0 L944 904.3 L945 899.8 L946 899.8 L947 900.9 L948 900.9 L949 905.1 L950 902.5 L951 900.7 L952 900.9 L953 901.2 L954 903.1 L955 902.6 L956 902.1 L957 902.1 L958 902.1 L959 902.2 L960 902.5 L961 902.7 L962 899.8 L963 901.8 L964 902.5 L965 901.8 L966 901.6 L967 901.7 L968 899.8 L969 902.3 L970 901.0 L971 901.2 L972 901.3 L973 902.3 L974 902.0 L975 902.6 L976 903.6 L977 902.4 L978 901.8 L979 901.6 L980 901.1 L981 901.2 L982 901.2 L983 902.1 L984 902.0 L985 902.1 L986 901.2 L987 902.1 L988 902.6 L989 901.2 L990 902.7 L991 903.3 L992 903.5 L993 902.3 L994 902.2 L995 901.0 L996 901.9 L997 902.9 L998 900.2 L999 901.6 L1000 903.8 L1001 899.7 L1002 901.5 L1003 902.1 L1004 902.4 L1005 905.1 L1006 901.3 L1007 903.5 L1008 899.7 L1009 901.1 L1010 899.7 L1011 900.7 L1012 899.7 L1013 902.4 L1014 901.2 L1015 903.0 L1016 902.6 L1017 903.6 L1018 901.2 L1019 902.5 L1020 901.2 L1021 901.7 L1022 901.2 L1023 901.2 L1024 902.8 L1025 900.8 L1026 901.9 L1027 903.2 L1028 902.3 L1029 900.7 L1030 902.5 L1031 902.3 L1032 903.0 L1033 900.7 L1034 903.0 L1035 904.6 L1036 900.8 L1037 902.4 L1038 902.1 L1039 901.6 L1040 901.0 L1041 902.6 L1042 903.6 L1043 901.6 L1044 901.2 L1045 902.6 L1046 903.6 L1047 902.0 L1048 901.0 L1049 900.7 L1050 900.1 L1051 903.1 L1052 903.8 L1053 903.3 L1054 904.2 L1055 905.0 L1056 904.9 L1057 906.3 L1058 906.8 L1059 906.3 L1060 905.6 L1061 907.4 L1062 907.4 L1063 904.0 L1064 906.0 L1065 905.8 L1066 906.5 L1067 906.6 L1068 907.4 L1069 907.4 L1070 905.7 L1071 905.3 L1072 905.7 L1073 905.6 L1074 904.0 L1075 907.3 L1076 907.3 L1077 903.6 L1078 903.8 L1079 903.9 L1080 904.6 L1081 903.6 L1082 907.2 L1083 907.2 L1084 904.1 L1085 904.0 L1086 903.4 L1087 903.5 L1088 904.2 L1089 907.2 L1090 907.2 L1091 903.4 L1092 904.4 L1093 903.5 L1094 903.3 L1095 903.7 L1096 907.2 L1097 907.2 L1098 903.8 L1099 904.8 L1100 903.6 L1101 904.3 L1102 901.5 L1103 904.5 L1104 902.9 L1105 902.8 L1106 902.3 L1107 903.8 L1108 904.7 L1109 904.9 L1110 902.1 L1111 904.3 L1112 902.9 L1113 902.6 L1114 901.8 L1115 902.6 L1116 902.6 L1117 902.5 L1118 901.7 L1119 903.3 L1120 903.7 L1121 904.6 L1122 904.5 L1123 904.2 L1124 903.7 L1125 904.6 L1126 903.0 L1127 905.6 L1128 904.1 L1129 903.5 L1130 902.6 L1131 903.0 L1132 904.7 L1133 902.7 L1134 903.6 L1135 904.5 L1136 901.8 L1137 903.2 L1138 903.8 L1139 901.9 L1140 903.1 L1141 904.2 L1142 903.2 L1143 903.7 L1144 901.8 L1145 905.2 L1146 900.6 L1147 904.6 L1148 902.0 L1149 902.2 L1150 902.6 L1151 904.3 L1152 904.1 L1153 903.5 L1154 904.1 L1155 903.5 L1156 904.1 L1157 904.1 L1158 901.6 L1159 904.3 L1160 904.9 L1161 903.7 L1162 905.3 L1163 904.1 L1164 901.3 L1165 902.7 L1166 902.0 L1167 902.1 L1168 901.3 L1169 901.0 L1170 901.9 L1171 902.3 L1172 901.3 L1173 901.2 L1174 902.2 L1175 900.9 L1176 903.9 L1177 903.5 L1178 903.7 L1179 903.4 L1180 903.2 L1181 902.2 L1182 901.5 L1183 902.4 L1184 902.5 L1185 901.4 L1186 900.8 L1187 902.9 L1188 902.8 L1189 904.2 L1190 901.9 L1191 903.3 L1192 902.3 L1193 901.8 L1194 901.1 L1195 901.7 L1196 905.5 L1197 904.2 L1198 901.8 L1199 901.0 L1200 902.8 L1201 902.3 L1202 902.5 L1203 904.3 L1204 904.7 L1205 901.8 L1206 902.7 L1207 902.3 L1208 903.9 L1209 901.7 L1210 904.1 L1211 901.4 L1212 901.2 L1213 904.9 L1214 900.1 L1215 903.6 L1216 903.1 L1217 902.9 L1218 902.6 L1219 901.2 L1220 901.6 L1221 901.5 L1222 901.4 L1223 904.6 L1224 902.1 L1225 901.2 L1226 904.1 L1227 901.8 L1228 901.5 L1229 901.3 L1230 903.1 L1231 900.5 L1232 903.3 L1233 902.9 L1234 903.0 L1235 903.3 L1236 904.3 L1237 903.9 L1238 903.4 L1239 902.1 L1240 903.3 L1241 901.1 L1242 902.6 L1243 903.7 L1244 904.1 L1245 904.1 L1246 902.2 L1247 900.9 L1248 901.4 L1249 903.2 L1250 904.6 L1251 903.9 L1252 902.2 L1253 901.6 L1254 901.6 L1255 902.6 L1256 902.1 L1257 902.6 L1258 901.1 L1259 903.5 L1260 903.2 L1261 901.0 L1262 902.8 L1263 901.9 L1264 904.0 L1265 901.5 L1266 902.1 L1267 901.1 L1268 902.9 L1269 903.7 L1270 901.1 L1271 903.0 L1272 901.1 L1273 900.0 L1274 900.9 L1275 901.1 L1276 901.5 L1277 903.1 L1278 904.8 L1279 903.7 L1280 902.0 L1281 902.3 L1282 901.7 L1283 901.1 L1284 905.1 L1285 901.0 L1286 903.3 L1287 901.3 L1288 903.8 L1289 901.5 L1290 903.1 L1291 902.7 L1292 903.2 L1293 901.7 L1294 901.0 L1295 905.5 L1296 904.5 L1297 901.4 L1298 901.2 L1299 900.0 L1300 901.0 L1301 903.4 L1302 901.8 L1303 902.7 L1304 900.1 L1305 902.8 L1306 905.1 L1307 902.9 L1308 903.6 L1309 903.7 L1310 900.0 L1311 903.4 L1312 905.1 L1313 903.4 L1314 901.7 L1315 902.0 L1316 903.5 L1317 902.9 L1318 901.2 L1319 902.7 L1320 903.9 L1321 904.6 L1322 904.0 L1323 900.8 L1324 901.5 L1325 903.6 L1326 901.5 L1327 903.3 L1328 902.3 L1329 904.4 L1330 903.6 L1331 905.6 L1332 903.3 L1333 901.7 L1334 902.4 L1335 902.2 L1336 904.0 L1337 902.9 L1338 903.0 L1339 902.3 L1340 904.6 L1341 903.5 L1342 902.4 L1343 903.5 L1344 902.6 L1345 902.2 L1346 904.3 L1347 903.7 L1348 905.2 L1349 904.5 L1350 904.4 L1351 904.8 L1352 900.1 L1353 902.8 L1354 900.1 L1355 905.5 L1356 904.2 L1357 904.1 L1358 901.9 L1359 902.8 L1360 903.5 L1361 903.6 L1362 904.4 L1363 902.3 L1364 903.0 L1365 905.9 L1366 901.6 L1367 903.3 L1368 904.0 L1369 905.6 L1370 903.9 L1371 905.0 L1372 904.4 L1373 905.5 L1374 904.9 L1375 904.0 L1376 904.3 L1377 905.0 L1378 904.5 L1379 905.5 L1380 905.5 L1381 903.0 L1382 905.6 L1383 904.8 L1384 904.2 L1385 904.3 L1386 903.9 L1387 904.3 L1388 903.8 L1389 903.4 L1390 903.6 L1391 904.3 L1392 904.3 L1393 902.0 L1394 903.0 L1395 903.6 L1396 902.1 L1397 905.5 L1398 903.3 L1399 904.2 L1400 902.3 L1401 903.1 L1402 903.0 L1403 903.3 L1404 903.1 L1405 900.9 L1406 903.2 L1407 901.2 L1408 901.4 L1409 900.9 L1410 901.0 L1411 901.4 L1412 902.2 L1413 902.4 L1414 902.9 L1415 900.9 L1416 902.8 L1417 903.0 L1418 903.0 L1419 903.0 L1420 900.2 L1421 903.2 L1422 902.9 L1423 903.1 L1424 902.5 L1425 901.2 L1426 902.4 L1427 901.2 L1428 903.2 L1429 902.8 L1430 902.4 L1431 902.5 L1432 902.6 L1433 900.9 L1434 901.0 L1435 903.0 L1436 900.7 L1437 901.5 L1438 901.8 L1439 902.8 L1440 899.7 L1441 903.1 L1442 903.8 L1443 902.8 L1444 899.7 L1445 899.8 L1446 903.0 L1447 900.8 L1448 902.5 L1449 901.4 L1450 901.0 L1451 902.9 L1452 900.8 L1453 902.4 L1454 903.2 L1455 902.0 L1456 902.0 L1457 901.1 L1458 900.4 L1459 902.7 L1460 901.5 L1461 901.7 L1462 901.1 L1463 902.7 L1464 903.1 L1465 900.7 L1466 902.3 L1467 901.4 L1468 902.3 L1469 902.4 L1470 903.2 L1471 902.6 L1472 901.0 L1473 900.9 L1474 902.7 L1475 902.7 L1476 903.1 L1477 901.5 L1478 901.0 L1479 902.6 L1480 901.5 L1481 901.2 L1482 902.9 L1483 901.2 L1484 901.4 L1485 901.7 L1486 901.0 L1487 902.2 L1488 902.6 L1489 903.9 L1490 902.5 L1491 901.7 L1492 901.7 L1493 899.6 L1494 903.9 L1495 901.0 L1496 901.0 L1497 901.3 L1498 900.9 L1499 904.3 L1500 899.6 L1501 902.3 L1502 901.9 L1503 902.4 L1504 899.6 L1505 902.2 L1506 900.9 L1507 901.0 L1508 903.0 L1509 902.8 L1510 903.1 L1511 901.6 L1512 903.1 L1513 902.0 L1514 900.9 L1515 903.1 L1516 902.5 L1517 903.1 L1518 901.9 L1519 902.3 L1520 902.9 L1521 902.9 L1522 902.5 L1523 902.9 L1524 902.8 L1525 901.8 L1526 901.5 L1527 902.9 L1528 902.9 L1529 902.0 L1530 902.6 L1531 902.4 L1532 903.4 L1533 902.7 L1534 902.3 L1535 902.5 L1536 900.5 L1537 902.2 L1538 902.9 L1539 902.9 L1540 900.7 L1541 903.1 L1542 903.1 L1543 901.0 L1544 900.8 L1545 902.7 L1546 902.3 L1547 902.9 L1548 901.2 L1549 900.5 L1550 901.2 L1551 902.7 L1552 901.1 L1553 903.8 L1554 903.0 L1555 901.6 L1556 900.8 L1557 901.5 L1558 903.0 L1559 900.7 L1560 903.1 L1561 901.6 L1562 902.6 L1563 902.6 L1564 900.7 L1565 900.9 L1566 902.6 L1567 903.0 L1568 902.4 L1569 901.2 L1570 900.5 L1571 899.8 L1572 902.4 L1573 901.7 L1574 902.6 L1575 902.9 L1576 900.5 L1577 903.0 L1578 902.4 L1579 899.7 L1580 902.5 L1581 900.7 L1582 902.4 L1583 901.9 L1584 903.0 L1585 902.9 L1586 903.1 L1587 903.1 L1588 902.8 L1589 903.6 L1590 900.9 L1591 901.4 L1592 903.0 L1593 902.9 L1594 900.5 L1595 902.0 L1596 902.5 L1597 902.3 L1598 902.9 L1599 902.6 L1600 901.6 L1601 901.6 L1602 901.9 L1603 901.2 L1604 902.5 L1605 903.0 L1606 902.5 L1607 902.6 L1608 902.6 L1609 900.0 L1610 901.9 L1611 901.7 L1612 900.5 L1613 902.7 L1614 903.0 L1615 902.8 L1616 901.1 L1617 900.7 L1618 903.7 L1619 903.0 L1620 902.6 L1621 901.4 L1622 900.8 L1623 902.5 L1624 903.0 L1625 902.4 L1626 903.0 L1627 902.8 L1628 900.8 L1629 901.4 L1630 902.4 L1631 903.1 L1632 902.7 L1633 903.1 L1634 902.7 L1635 903.0 L1636 902.8 L1637 901.6 L1638 902.9 L1639 901.4 L1640 901.0 L1641 900.7 L1642 902.7 L1643 902.1 L1644 901.9 L1645 900.6 L1646 900.6 L1647 901.3 L1648 903.0 L1649 901.2 L1650 901.3 L1651 899.5 L1652 902.7 L1653 903.1 L1654 902.0 L1655 902.8 L1656 900.6 L1657 902.6 L1658 901.4 L1659 900.7 L1660 903.0 L1661 901.9 L1662 902.8 L1663 903.0 L1664 901.7 L1665 902.7 L1666 901.2 L1667 902.3 L1668 903.0 L1669 902.4 L1670 902.9 L1671 900.6 L1672 901.7 L1673 900.8 L1674 902.5 L1675 902.8 L1676 902.6 L1677 902.0 L1678 902.3 L1679 901.3 L1680 901.5 L1681 902.7 L1682 899.5 L1683 901.5 L1684 902.3 L1685 901.6 L1686 902.3 L1687 901.6 L1688 902.5 L1689 902.0 L1690 903.0 L1691 902.6 L1692 902.4 L1693 901.8 L1694 903.0 L1695 902.3 L1696 902.8 L1697 899.7 L1698 902.2 L1699 902.0 L1700 901.0 L1701 901.7 L1702 902.6 L1703 900.7 L1704 903.1 L1705 902.5 L1706 901.3 L1707 902.9 L1708 902.8 L1709 900.8 L1710 902.1 L1711 901.3 L1712 899.5 L1713 903.0 L1714 900.8 L1715 902.1 L1716 901.2 L1717 902.8 L1718 902.5 L1719 902.8 L1720 903.1 L1721 903.0 L1722 902.3 L1723 899.5 L1724 903.0 L1725 902.8 L1726 902.0 L1727 900.7 L1728 901.3 L1729 902.0 L1730 902.8 L1731 903.0 L1732 900.8 L1733 903.0 L1734 902.6 L1735 903.0 L1736 902.7 L1737 902.4 L1738 901.1 L1739 902.7 L1740 900.4 L1741 902.1 L1742 902.4 L1743 900.8 L1744 901.2 L1745 901.4 L1746 900.1 L1747 903.1 L1748 901.4 L1749 901.7 L1750 902.3 L1751 902.8 L1752 902.8 L1753 902.8 L1754 901.2 L1755 902.6 L1756 902.4 L1757 902.6 L1758 901.9 L1759 902.5 L1760 902.8 L1761 901.8 L1762 902.6 L1763 900.8 L1764 903.1 L1765 902.4 L1766 902.9 L1767 904.0 L1768 902.7 L1769 902.3 L1770 902.7 L1771 901.8 L1772 903.1 L1773 901.6 L1774 902.6 L1775 902.4 L1776 902.3 L1777 902.3 L1778 902.3 L1779 902.4 L1780 901.7 L1781 900.8 L1782 902.4 L1783 902.0 L1784 902.9 L1785 903.0 L1786 903.0 L1787 902.3 L1788 903.1 L1789 902.6 L1790 900.8 L1791 902.1 L1792 901.3 L1793 902.4 L1794 903.0 L1795 901.7 L1796 901.9 L1797 901.2 L1798 901.9 L1799 902.9 L1800 902.1 L1801 901.0 L1802 903.1 L1803 902.8 L1804 902.6 L1805 900.9 L1806 902.2 L1807 900.8 L1808 902.0 L1809 903.1 L1810 903.0 L1811 901.3 L1812 903.1 L1813 902.9 L1814 902.2 L1815 901.2 L1816 899.5 L1817 902.1 L1818 901.0 L1819 903.0 L1820 902.1 L1821 902.5 L1822 901.9 L1823 902.9 L1824 902.5 L1825 900.9 L1826 901.8 L1827 903.4 L1828 902.7 L1829 901.9 L1830 900.4 L1831 902.5 L1832 902.6 L1833 902.7 L1834 899.7 L1835 900.8 L1836 903.1 L1837 900.9 L1838 902.3 L1839 902.6 L1840 901.0 L1841 901.7 L1842 902.8 L1843 902.9 L1844 903.1 L1845 899.9 L1846 903.1 L1847 901.4 L1848 902.5 L1849 901.6 L1850 902.6 L1851 901.3 L1852 904.0 L1853 900.9 L1854 903.6 L1855 903.5 L1856 905.0 L1857 905.4 L1858 907.4 L1858 908.1 L1857 909.4 L1856 910.3 L1855 913.1 L1854 912.8 L1853 912.8 L1852 910.9 L1851 912.7 L1850 914.8 L1849 916.0 L1848 913.8 L1847 913.4 L1846 912.9 L1845 913.0 L1844 912.9 L1843 913.7 L1842 914.9 L1841 914.7 L1840 913.7 L1839 914.5 L1838 914.7 L1837 914.6 L1836 913.5 L1835 916.0 L1834 912.6 L1833 914.3 L1832 916.0 L1831 913.0 L1830 912.9 L1829 914.6 L1828 912.5 L1827 911.9 L1826 914.2 L1825 913.6 L1824 913.0 L1823 913.1 L1822 912.6 L1821 912.9 L1820 911.4 L1819 913.2 L1818 913.3 L1817 914.3 L1816 912.5 L1815 912.9 L1814 912.5 L1813 912.9 L1812 913.8 L1811 912.5 L1810 915.0 L1809 912.6 L1808 914.3 L1807 914.6 L1806 915.0 L1805 914.9 L1804 913.1 L1803 913.0 L1802 915.2 L1801 913.4 L1800 913.8 L1799 913.5 L1798 912.6 L1797 913.5 L1796 913.7 L1795 912.8 L1794 912.8 L1793 912.9 L1792 915.9 L1791 914.0 L1790 912.6 L1789 913.2 L1788 913.4 L1787 913.4 L1786 912.9 L1785 913.9 L1784 913.5 L1783 912.6 L1782 914.8 L1781 912.9 L1780 912.9 L1779 913.4 L1778 913.5 L1777 914.5 L1776 914.5 L1775 913.1 L1774 912.6 L1773 914.9 L1772 915.8 L1771 915.1 L1770 914.4 L1769 913.5 L1768 913.7 L1767 911.7 L1766 913.4 L1765 912.8 L1764 914.3 L1763 914.7 L1762 912.6 L1761 913.8 L1760 914.1 L1759 913.6 L1758 914.9 L1757 914.4 L1756 912.6 L1755 911.8 L1754 913.8 L1753 915.2 L1752 913.2 L1751 914.8 L1750 912.6 L1749 912.6 L1748 912.7 L1747 914.9 L1746 913.6 L1745 912.8 L1744 915.0 L1743 915.1 L1742 913.9 L1741 916.1 L1740 915.2 L1739 913.7 L1738 913.2 L1737 915.4 L1736 913.7 L1735 913.6 L1734 913.0 L1733 915.1 L1732 913.2 L1731 916.1 L1730 913.0 L1729 914.3 L1728 916.1 L1727 914.5 L1726 912.9 L1725 913.0 L1724 915.5 L1723 912.6 L1722 911.4 L1721 912.8 L1720 916.1 L1719 914.7 L1718 916.1 L1717 912.9 L1716 913.4 L1715 914.1 L1714 914.0 L1713 912.9 L1712 913.8 L1711 913.8 L1710 912.7 L1709 913.3 L1708 912.6 L1707 914.0 L1706 913.1 L1705 912.9 L1704 913.1 L1703 913.0 L1702 915.1 L1701 913.5 L1700 914.9 L1699 912.8 L1698 914.0 L1697 915.1 L1696 914.1 L1695 914.9 L1694 912.6 L1693 912.8 L1692 912.6 L1691 914.8 L1690 913.2 L1689 913.2 L1688 914.5 L1687 912.6 L1686 916.1 L1685 912.8 L1684 913.1 L1683 913.9 L1682 912.8 L1681 913.5 L1680 912.9 L1679 913.5 L1678 913.8 L1677 911.9 L1676 913.0 L1675 912.5 L1674 914.0 L1673 914.2 L1672 912.8 L1671 912.6 L1670 912.7 L1669 914.8 L1668 914.6 L1667 913.0 L1666 913.1 L1665 915.4 L1664 913.3 L1663 914.6 L1662 912.6 L1661 913.8 L1660 912.7 L1659 915.0 L1658 914.5 L1657 911.7 L1656 914.6 L1655 913.6 L1654 912.8 L1653 913.6 L1652 912.8 L1651 914.5 L1650 912.9 L1649 914.6 L1648 913.8 L1647 912.7 L1646 912.8 L1645 913.1 L1644 913.6 L1643 915.1 L1642 913.2 L1641 914.5 L1640 912.7 L1639 913.0 L1638 913.1 L1637 915.0 L1636 912.8 L1635 912.7 L1634 914.0 L1633 913.5 L1632 913.0 L1631 913.6 L1630 913.1 L1629 914.6 L1628 913.6 L1627 912.7 L1626 914.2 L1625 912.5 L1624 912.6 L1623 914.9 L1622 913.9 L1621 913.8 L1620 912.1 L1619 913.3 L1618 913.2 L1617 914.3 L1616 913.9 L1615 913.4 L1614 913.1 L1613 913.4 L1612 914.6 L1611 914.8 L1610 915.2 L1609 912.9 L1608 912.7 L1607 913.3 L1606 913.9 L1605 915.7 L1604 914.8 L1603 914.4 L1602 912.9 L1601 913.9 L1600 914.1 L1599 911.9 L1598 915.0 L1597 914.6 L1596 913.2 L1595 912.8 L1594 912.9 L1593 914.6 L1592 914.5 L1591 912.7 L1590 913.1 L1589 913.3 L1588 913.8 L1587 914.8 L1586 914.8 L1585 912.9 L1584 912.5 L1583 913.0 L1582 913.8 L1581 914.1 L1580 913.2 L1579 912.8 L1578 912.7 L1577 916.1 L1576 912.9 L1575 912.6 L1574 914.2 L1573 912.9 L1572 913.9 L1571 912.6 L1570 912.6 L1569 914.6 L1568 912.5 L1567 912.6 L1566 913.0 L1565 912.7 L1564 915.1 L1563 914.6 L1562 913.2 L1561 914.8 L1560 914.1 L1559 915.0 L1558 914.8 L1557 912.6 L1556 914.9 L1555 913.4 L1554 914.8 L1553 913.0 L1552 914.8 L1551 913.9 L1550 916.0 L1549 914.3 L1548 912.7 L1547 914.6 L1546 913.0 L1545 913.1 L1544 916.0 L1543 912.5 L1542 913.9 L1541 912.5 L1540 914.4 L1539 912.8 L1538 912.7 L1537 913.1 L1536 912.5 L1535 914.8 L1534 915.3 L1533 914.4 L1532 911.5 L1531 914.4 L1530 912.9 L1529 912.9 L1528 913.1 L1527 913.6 L1526 913.4 L1525 911.5 L1524 914.8 L1523 912.9 L1522 913.1 L1521 914.6 L1520 914.0 L1519 912.7 L1518 913.3 L1517 914.4 L1516 915.4 L1515 913.3 L1514 913.5 L1513 915.1 L1512 912.7 L1511 912.6 L1510 913.5 L1509 914.3 L1508 913.2 L1507 914.3 L1506 914.7 L1505 914.3 L1504 912.9 L1503 912.9 L1502 914.9 L1501 913.9 L1500 914.1 L1499 911.4 L1498 913.4 L1497 913.2 L1496 914.7 L1495 913.0 L1494 913.6 L1493 915.0 L1492 915.1 L1491 912.6 L1490 912.7 L1489 912.0 L1488 914.8 L1487 914.3 L1486 914.8 L1485 912.6 L1484 913.9 L1483 913.7 L1482 914.8 L1481 912.6 L1480 913.5 L1479 912.5 L1478 915.2 L1477 914.6 L1476 912.5 L1475 914.3 L1474 913.0 L1473 915.2 L1472 912.6 L1471 912.7 L1470 912.4 L1469 913.8 L1468 913.9 L1467 913.1 L1466 914.1 L1465 915.6 L1464 912.7 L1463 914.5 L1462 913.5 L1461 913.5 L1460 914.1 L1459 914.1 L1458 913.1 L1457 912.8 L1456 914.9 L1455 912.5 L1454 912.5 L1453 913.7 L1452 914.6 L1451 915.0 L1450 913.6 L1449 912.5 L1448 912.7 L1447 914.5 L1446 912.0 L1445 914.4 L1444 914.2 L1443 915.0 L1442 912.0 L1441 913.1 L1440 914.6 L1439 914.2 L1438 913.7 L1437 912.4 L1436 912.8 L1435 914.0 L1434 914.6 L1433 912.8 L1432 912.5 L1431 912.5 L1430 912.9 L1429 912.9 L1428 912.4 L1427 913.8 L1426 912.5 L1425 912.5 L1424 913.0 L1423 913.7 L1422 914.0 L1421 915.2 L1420 912.5 L1419 912.6 L1418 912.8 L1417 912.4 L1416 914.8 L1415 913.4 L1414 913.1 L1413 915.1 L1412 912.9 L1411 913.5 L1410 912.3 L1409 912.4 L1408 914.4 L1407 914.1 L1406 912.3 L1405 912.4 L1404 913.8 L1403 913.7 L1402 912.3 L1401 914.8 L1400 912.5 L1399 910.5 L1398 913.1 L1397 910.0 L1396 912.0 L1395 913.6 L1394 912.7 L1393 913.6 L1392 911.9 L1391 912.9 L1390 911.9 L1389 911.3 L1388 910.7 L1387 912.2 L1386 911.6 L1385 910.9 L1384 910.5 L1383 911.4 L1382 909.3 L1381 912.0 L1380 910.4 L1379 909.3 L1378 911.6 L1377 911.8 L1376 911.9 L1375 911.1 L1374 911.9 L1373 911.8 L1372 911.6 L1371 911.8 L1370 912.5 L1369 911.8 L1368 911.0 L1367 912.3 L1366 911.8 L1365 910.1 L1364 912.4 L1363 913.4 L1362 914.6 L1361 913.5 L1360 911.6 L1359 914.0 L1358 911.6 L1357 913.8 L1356 912.9 L1355 911.9 L1354 914.3 L1353 914.0 L1352 912.2 L1351 912.4 L1350 914.2 L1349 914.5 L1348 911.0 L1347 912.8 L1346 914.1 L1345 911.3 L1344 914.5 L1343 914.6 L1342 913.9 L1341 912.3 L1340 912.8 L1339 915.6 L1338 914.1 L1337 913.0 L1336 914.1 L1335 913.8 L1334 913.9 L1333 912.3 L1332 913.9 L1331 912.4 L1330 914.0 L1329 914.5 L1328 914.4 L1327 911.6 L1326 915.6 L1325 911.1 L1324 913.8 L1323 913.0 L1322 911.8 L1321 912.9 L1320 910.6 L1319 914.3 L1318 914.3 L1317 913.1 L1316 911.7 L1315 914.7 L1314 913.9 L1313 914.0 L1312 909.8 L1311 911.9 L1310 913.3 L1309 911.1 L1308 914.1 L1307 915.6 L1306 912.3 L1305 911.9 L1304 913.1 L1303 912.8 L1302 913.0 L1301 912.4 L1300 913.1 L1299 912.8 L1298 912.9 L1297 911.0 L1296 914.2 L1295 911.6 L1294 913.1 L1293 914.7 L1292 913.2 L1291 911.9 L1290 911.1 L1289 913.0 L1288 915.5 L1287 913.2 L1286 912.4 L1285 913.3 L1284 909.9 L1283 913.6 L1282 912.2 L1281 914.2 L1280 914.6 L1279 911.2 L1278 911.1 L1277 913.4 L1276 912.6 L1275 914.0 L1274 914.8 L1273 914.4 L1272 913.3 L1271 911.9 L1270 914.0 L1269 913.2 L1268 912.3 L1267 913.7 L1266 914.2 L1265 912.1 L1264 913.8 L1263 911.4 L1262 912.0 L1261 912.7 L1260 913.3 L1259 912.3 L1258 915.2 L1257 913.8 L1256 911.9 L1255 914.5 L1254 913.8 L1253 914.0 L1252 912.7 L1251 912.3 L1250 912.8 L1249 913.2 L1248 912.6 L1247 911.3 L1246 912.4 L1245 914.4 L1244 911.4 L1243 910.4 L1242 912.9 L1241 912.0 L1240 911.9 L1239 912.3 L1238 913.7 L1237 912.2 L1236 912.9 L1235 913.1 L1234 914.2 L1233 911.1 L1232 911.0 L1231 913.1 L1230 913.0 L1229 913.2 L1228 913.8 L1227 915.5 L1226 911.4 L1225 914.4 L1224 913.7 L1223 911.9 L1222 912.3 L1221 913.3 L1220 912.2 L1219 911.5 L1218 915.5 L1217 911.9 L1216 914.2 L1215 913.8 L1214 915.5 L1213 911.5 L1212 914.3 L1211 913.5 L1210 913.4 L1209 914.2 L1208 912.4 L1207 914.1 L1206 911.7 L1205 912.3 L1204 914.3 L1203 914.4 L1202 915.4 L1201 914.2 L1200 913.1 L1199 914.0 L1198 911.6 L1197 912.1 L1196 911.2 L1195 912.3 L1194 911.6 L1193 914.4 L1192 912.3 L1191 913.4 L1190 914.3 L1189 914.1 L1188 911.1 L1187 913.7 L1186 913.6 L1185 913.4 L1184 913.6 L1183 912.4 L1182 914.1 L1181 914.4 L1180 911.4 L1179 914.4 L1178 914.9 L1177 913.0 L1176 912.0 L1175 913.3 L1174 913.9 L1173 913.3 L1172 913.4 L1171 912.1 L1170 913.0 L1169 912.4 L1168 915.2 L1167 910.9 L1166 913.2 L1165 912.0 L1164 914.3 L1163 911.8 L1162 911.6 L1161 912.4 L1160 910.3 L1159 912.9 L1158 915.1 L1157 910.9 L1156 910.9 L1155 914.1 L1154 912.9 L1153 914.0 L1152 912.2 L1151 914.2 L1150 912.1 L1149 911.7 L1148 912.6 L1147 912.6 L1146 912.4 L1145 911.6 L1144 913.0 L1143 914.0 L1142 911.6 L1141 912.9 L1140 912.2 L1139 912.3 L1138 911.5 L1137 914.0 L1136 911.8 L1135 912.1 L1134 913.9 L1133 913.0 L1132 913.7 L1131 913.4 L1130 912.0 L1129 913.1 L1128 913.2 L1127 909.5 L1126 912.9 L1125 914.7 L1124 913.3 L1123 911.2 L1122 911.6 L1121 913.9 L1120 913.2 L1119 912.7 L1118 912.1 L1117 914.7 L1116 913.7 L1115 911.5 L1114 912.8 L1113 911.5 L1112 912.6 L1111 912.6 L1110 913.4 L1109 911.7 L1108 914.6 L1107 913.4 L1106 913.3 L1105 913.6 L1104 911.1 L1103 913.3 L1102 912.2 L1101 913.3 L1100 911.7 L1099 912.2 L1098 912.2 L1097 908.4 L1096 908.4 L1095 911.7 L1094 912.2 L1093 910.9 L1092 911.3 L1091 911.7 L1090 908.4 L1089 908.4 L1088 910.6 L1087 911.9 L1086 912.0 L1085 911.6 L1084 912.2 L1083 908.4 L1082 908.4 L1081 911.8 L1080 911.4 L1079 911.4 L1078 912.1 L1077 911.9 L1076 908.3 L1075 908.3 L1074 911.2 L1073 910.3 L1072 910.8 L1071 910.8 L1070 910.2 L1069 908.1 L1068 908.1 L1067 909.5 L1066 908.9 L1065 909.7 L1064 910.2 L1063 910.8 L1062 908.2 L1061 908.2 L1060 909.4 L1059 909.4 L1058 908.7 L1057 910.2 L1056 910.9 L1055 911.5 L1054 912.7 L1053 913.1 L1052 911.7 L1051 913.9 L1050 914.3 L1049 916.0 L1048 915.1 L1047 912.8 L1046 912.0 L1045 916.0 L1044 913.0 L1043 913.9 L1042 911.3 L1041 914.7 L1040 913.7 L1039 913.7 L1038 913.0 L1037 915.0 L1036 913.6 L1035 912.1 L1034 914.9 L1033 914.9 L1032 913.2 L1031 914.7 L1030 914.0 L1029 913.1 L1028 912.7 L1027 914.9 L1026 913.4 L1025 913.7 L1024 914.1 L1023 915.0 L1022 914.9 L1021 913.7 L1020 912.7 L1019 913.1 L1018 914.5 L1017 911.5 L1016 912.7 L1015 913.2 L1014 914.9 L1013 913.8 L1012 914.1 L1011 913.7 L1010 915.9 L1009 915.9 L1008 913.0 L1007 911.6 L1006 913.3 L1005 911.7 L1004 915.9 L1003 915.0 L1002 913.7 L1001 913.8 L1000 911.5 L999 913.2 L998 912.4 L997 913.3 L996 914.5 L995 913.7 L994 914.9 L993 915.9 L992 911.6 L991 912.6 L990 912.8 L989 912.9 L988 912.9 L987 912.5 L986 913.8 L985 912.5 L984 914.5 L983 914.7 L982 912.9 L981 913.1 L980 915.8 L979 913.8 L978 913.6 L977 913.3 L976 911.9 L975 913.8 L974 915.8 L973 914.3 L972 914.0 L971 913.4 L970 915.8 L969 914.7 L968 913.0 L967 914.7 L966 912.7 L965 912.9 L964 914.6 L963 914.0 L962 913.7 L961 914.4 L960 914.3 L959 912.7 L958 912.9 L957 915.8 L956 915.2 L955 914.6 L954 913.6 L953 914.7 L952 912.8 L951 914.2 L950 913.7 L949 912.0 L948 915.1 L947 914.6 L946 912.5 L945 914.2 L944 911.6 L943 912.9 L942 910.7 L941 914.7 L940 914.2 L939 914.3 L938 913.2 L937 911.2 L936 914.1 L935 913.4 L934 913.9 L933 914.6 L932 912.5 L931 914.6 L930 913.2 L929 912.7 L928 914.6 L927 913.3 L926 912.8 L925 915.8 L924 912.3 L923 912.5 L922 914.8 L921 913.0 L920 913.7 L919 912.3 L918 913.4 L917 912.9 L916 912.8 L915 912.7 L914 914.6 L913 912.5 L912 912.9 L911 912.4 L910 912.5 L909 915.7 L908 912.9 L907 910.8 L906 914.8 L905 912.9 L904 914.7 L903 914.7 L902 913.9 L901 914.6 L900 914.8 L899 913.5 L898 912.8 L897 914.7 L896 914.1 L895 914.5 L894 913.1 L893 913.6 L892 913.1 L891 911.1 L890 912.0 L889 912.9 L888 912.7 L887 914.4 L886 913.4 L885 912.8 L884 914.2 L883 915.3 L882 913.3 L881 914.0 L880 912.9 L879 913.5 L878 914.7 L877 914.8 L876 913.0 L875 913.3 L874 914.3 L873 910.6 L872 914.4 L871 914.0 L870 914.0 L869 914.6 L868 915.7 L867 914.4 L866 913.0 L865 915.7 L864 910.6 L863 913.4 L862 914.6 L861 914.5 L860 911.3 L859 913.4 L858 913.1 L857 913.3 L856 914.3 L855 913.4 L854 914.7 L853 915.7 L852 914.6 L851 911.9 L850 911.6 L849 913.1 L848 914.4 L847 915.4 L846 912.9 L845 910.6 L844 912.4 L843 912.8 L842 913.6 L841 912.9 L840 914.2 L839 913.6 L838 914.1 L837 912.4 L836 914.5 L835 914.2 L834 913.3 L833 911.1 L832 913.9 L831 912.1 L830 913.1 L829 912.7 L828 912.9 L827 912.3 L826 912.8 L825 912.2 L824 912.3 L823 911.3 L822 911.1 L821 910.7 L820 912.6 L819 912.1 L818 910.5 L817 909.2 L816 910.0 L815 910.6 L814 910.3 L813 909.6 L812 909.9 L811 910.4 L810 910.6 L809 908.9 L808 909.7 L807 910.3 L806 909.5 L805 910.5 L804 909.7 L803 910.5 L802 910.0 L801 910.3 L800 910.0 L799 910.3 L798 910.0 L797 910.4 L796 910.2 L795 909.7 L794 910.4 L793 909.2 L792 910.1 L791 909.9 L790 909.8 L789 909.5 L788 909.4 L787 909.9 L786 909.3 L785 910.3 L784 909.4 L783 910.0 L782 910.3 L781 909.9 L780 910.4 L779 910.2 L778 909.9 L777 910.1 L776 909.8 L775 909.1 L774 910.1 L773 910.0 L772 909.5 L771 909.6 L770 909.4 L769 910.9 L768 910.1 L767 910.4 L766 909.9 L765 910.3 L764 910.5 L763 910.6 L762 909.0 L761 909.7 L760 910.5 L759 909.1 L758 910.4 L757 910.2 L756 910.3 L755 909.9 L754 910.3 L753 909.5 L752 910.2 L751 909.3 L750 909.8 L749 909.8 L748 909.3 L747 909.8 L746 908.7 L745 910.6 L744 909.7 L743 909.9 L742 910.1 L741 909.4 L740 909.8 L739 910.2 L738 909.8 L737 909.3 L736 910.4 L735 909.4 L734 911.8 L733 911.9 L732 910.9 L731 911.1 L730 911.8 L729 911.9 L728 911.8 L727 910.3 L726 911.4 L725 911.1 L724 910.2 L723 908.1z" fill="#8e3246"/><path d="M723 925.4 L724 921.7 L725 921.8 L726 922.3 L727 922.0 L728 923.1 L729 921.6 L730 922.1 L731 921.8 L732 923.3 L733 922.7 L734 923.0 L735 923.2 L736 923.2 L737 924.2 L738 924.0 L739 924.2 L740 924.0 L741 924.6 L742 924.9 L743 923.4 L744 923.5 L745 924.4 L746 923.3 L747 924.2 L748 923.4 L749 923.7 L750 923.2 L751 924.2 L752 923.4 L753 923.8 L754 923.4 L755 924.3 L756 923.3 L757 923.3 L758 923.4 L759 924.0 L760 923.3 L761 923.4 L762 923.3 L763 923.9 L764 923.9 L765 923.9 L766 923.5 L767 923.8 L768 923.4 L769 923.5 L770 923.4 L771 923.1 L772 924.3 L773 923.5 L774 923.9 L775 923.5 L776 923.8 L777 924.1 L778 923.3 L779 923.3 L780 923.9 L781 923.4 L782 923.8 L783 922.8 L784 923.2 L785 923.8 L786 923.3 L787 923.1 L788 923.8 L789 923.7 L790 922.9 L791 922.9 L792 922.9 L793 923.5 L794 923.2 L795 924.4 L796 924.2 L797 923.7 L798 923.8 L799 923.6 L800 923.5 L801 923.9 L802 923.4 L803 923.4 L804 923.2 L805 923.0 L806 923.3 L807 923.8 L808 924.0 L809 923.1 L810 924.0 L811 923.0 L812 924.1 L813 923.9 L814 923.9 L815 922.9 L816 922.9 L817 923.9 L818 924.1 L819 922.7 L820 922.1 L821 921.2 L822 924.0 L823 923.2 L824 923.9 L825 922.1 L826 920.1 L827 923.7 L828 921.9 L829 919.7 L830 921.3 L831 923.4 L832 921.8 L833 922.3 L834 921.6 L835 920.7 L836 920.4 L837 919.3 L838 918.9 L839 918.1 L840 918.0 L841 921.3 L842 918.9 L843 920.4 L844 921.0 L845 918.9 L846 920.0 L847 919.8 L848 920.1 L849 920.0 L850 920.7 L851 920.3 L852 919.6 L853 919.1 L854 920.7 L855 919.6 L856 922.1 L857 920.4 L858 918.8 L859 919.8 L860 917.9 L861 919.7 L862 918.4 L863 918.9 L864 919.6 L865 918.8 L866 920.8 L867 920.2 L868 920.2 L869 919.6 L870 920.6 L871 919.4 L872 920.4 L873 921.3 L874 920.7 L875 921.1 L876 919.1 L877 919.1 L878 921.0 L879 919.3 L880 921.6 L881 921.1 L882 919.3 L883 920.9 L884 917.9 L885 920.4 L886 918.9 L887 919.2 L888 919.8 L889 919.0 L890 919.8 L891 921.8 L892 922.6 L893 922.7 L894 922.6 L895 920.1 L896 917.9 L897 920.1 L898 918.7 L899 920.1 L900 920.5 L901 918.6 L902 917.9 L903 919.6 L904 921.2 L905 920.2 L906 919.4 L907 920.2 L908 919.7 L909 917.9 L910 919.8 L911 921.2 L912 920.0 L913 919.3 L914 918.6 L915 919.8 L916 919.1 L917 918.5 L918 920.8 L919 919.3 L920 919.5 L921 918.9 L922 917.8 L923 919.0 L924 922.1 L925 919.0 L926 919.5 L927 919.0 L928 921.4 L929 920.8 L930 918.9 L931 919.5 L932 920.0 L933 919.8 L934 922.3 L935 920.5 L936 919.5 L937 922.9 L938 918.7 L939 917.9 L940 917.9 L941 921.6 L942 917.9 L943 920.9 L944 922.9 L945 918.7 L946 918.7 L947 920.1 L948 917.8 L949 920.0 L950 919.2 L951 922.8 L952 918.7 L953 922.0 L954 919.6 L955 920.9 L956 919.8 L957 918.9 L958 922.8 L959 918.8 L960 919.0 L961 919.3 L962 923.1 L963 919.7 L964 919.0 L965 919.4 L966 919.6 L967 919.2 L968 919.3 L969 921.1 L970 922.3 L971 919.1 L972 919.3 L973 921.0 L974 920.1 L975 920.3 L976 918.9 L977 920.0 L978 918.9 L979 919.1 L980 919.3 L981 919.3 L982 920.1 L983 922.5 L984 921.3 L985 921.6 L986 919.5 L987 918.8 L988 919.9 L989 921.0 L990 920.9 L991 919.1 L992 922.9 L993 919.7 L994 919.9 L995 922.9 L996 918.0 L997 917.7 L998 919.3 L999 920.3 L1000 919.7 L1001 919.5 L1002 918.9 L1003 922.7 L1004 917.7 L1005 918.2 L1006 920.2 L1007 919.5 L1008 919.4 L1009 918.7 L1010 920.8 L1011 920.6 L1012 919.5 L1013 921.1 L1014 919.5 L1015 922.4 L1016 919.7 L1017 921.5 L1018 920.8 L1019 921.0 L1020 918.9 L1021 922.9 L1022 920.2 L1023 918.8 L1024 923.0 L1025 920.4 L1026 919.1 L1027 919.4 L1028 921.2 L1029 920.5 L1030 919.2 L1031 919.2 L1032 919.2 L1033 920.9 L1034 918.9 L1035 920.2 L1036 922.8 L1037 921.5 L1038 922.5 L1039 920.1 L1040 920.3 L1041 919.7 L1042 922.1 L1043 919.7 L1044 919.4 L1045 919.2 L1046 921.0 L1047 919.1 L1048 919.5 L1049 920.9 L1050 918.8 L1051 918.6 L1052 918.7 L1053 920.5 L1054 920.7 L1055 924.2 L1056 923.3 L1057 923.9 L1058 924.7 L1059 924.5 L1060 923.5 L1061 925.4 L1062 925.4 L1063 923.3 L1064 923.4 L1065 924.0 L1066 924.5 L1067 924.7 L1068 925.4 L1069 925.4 L1070 923.1 L1071 923.7 L1072 923.2 L1073 923.2 L1074 923.4 L1075 925.3 L1076 925.3 L1077 921.6 L1078 922.2 L1079 923.2 L1080 922.3 L1081 922.0 L1082 925.2 L1083 925.2 L1084 922.8 L1085 923.1 L1086 921.8 L1087 921.4 L1088 921.7 L1089 925.2 L1090 925.2 L1091 921.2 L1092 922.8 L1093 922.8 L1094 921.6 L1095 922.5 L1096 925.2 L1097 925.2 L1098 921.7 L1099 922.7 L1100 922.3 L1101 920.5 L1102 920.3 L1103 919.8 L1104 922.7 L1105 921.2 L1106 919.8 L1107 921.9 L1108 920.8 L1109 919.0 L1110 921.2 L1111 920.9 L1112 919.1 L1113 920.1 L1114 920.5 L1115 921.2 L1116 922.1 L1117 920.4 L1118 920.8 L1119 919.9 L1120 922.5 L1121 919.7 L1122 921.9 L1123 921.7 L1124 922.6 L1125 920.0 L1126 921.1 L1127 920.2 L1128 922.8 L1129 922.9 L1130 920.4 L1131 921.0 L1132 920.5 L1133 918.7 L1134 920.8 L1135 922.2 L1136 922.3 L1137 920.2 L1138 922.1 L1139 921.9 L1140 921.3 L1141 921.7 L1142 922.5 L1143 921.3 L1144 920.9 L1145 921.4 L1146 920.9 L1147 920.7 L1148 919.5 L1149 922.9 L1150 922.1 L1151 919.3 L1152 920.5 L1153 918.5 L1154 920.3 L1155 920.1 L1156 922.4 L1157 922.1 L1158 921.7 L1159 920.8 L1160 919.3 L1161 921.3 L1162 921.2 L1163 919.5 L1164 919.8 L1165 920.2 L1166 921.5 L1167 920.2 L1168 919.8 L1169 921.3 L1170 921.7 L1171 922.8 L1172 922.0 L1173 920.2 L1174 921.0 L1175 923.1 L1176 921.5 L1177 922.2 L1178 922.4 L1179 918.3 L1180 920.7 L1181 921.8 L1182 921.1 L1183 922.1 L1184 921.8 L1185 919.6 L1186 921.7 L1187 919.8 L1188 921.3 L1189 919.1 L1190 920.3 L1191 919.9 L1192 921.7 L1193 921.0 L1194 921.1 L1195 919.7 L1196 918.9 L1197 920.4 L1198 921.0 L1199 920.1 L1200 918.4 L1201 919.7 L1202 921.1 L1203 923.2 L1204 919.1 L1205 921.6 L1206 921.3 L1207 919.1 L1208 921.1 L1209 920.6 L1210 919.9 L1211 920.0 L1212 922.5 L1213 920.7 L1214 921.4 L1215 922.4 L1216 922.0 L1217 919.5 L1218 919.6 L1219 923.3 L1220 920.3 L1221 919.5 L1222 922.5 L1223 919.8 L1224 921.6 L1225 919.4 L1226 920.2 L1227 922.4 L1228 921.1 L1229 921.7 L1230 921.7 L1231 919.4 L1232 919.8 L1233 921.4 L1234 920.2 L1235 921.7 L1236 922.2 L1237 921.2 L1238 923.0 L1239 921.9 L1240 919.2 L1241 922.2 L1242 920.8 L1243 919.8 L1244 922.2 L1245 919.2 L1246 920.2 L1247 923.7 L1248 919.1 L1249 923.4 L1250 918.5 L1251 919.5 L1252 919.7 L1253 921.3 L1254 920.7 L1255 921.0 L1256 919.5 L1257 920.3 L1258 921.5 L1259 920.3 L1260 919.3 L1261 921.2 L1262 921.7 L1263 920.0 L1264 920.2 L1265 921.9 L1266 919.3 L1267 921.8 L1268 920.2 L1269 922.4 L1270 920.1 L1271 919.2 L1272 919.3 L1273 918.9 L1274 922.4 L1275 919.4 L1276 918.5 L1277 921.7 L1278 919.5 L1279 920.2 L1280 919.7 L1281 921.0 L1282 919.6 L1283 923.5 L1284 920.9 L1285 918.0 L1286 920.6 L1287 919.7 L1288 918.9 L1289 919.2 L1290 921.0 L1291 919.0 L1292 919.6 L1293 921.1 L1294 919.2 L1295 921.9 L1296 920.4 L1297 919.0 L1298 920.2 L1299 921.1 L1300 919.2 L1301 920.0 L1302 921.5 L1303 918.9 L1304 919.2 L1305 921.4 L1306 919.6 L1307 922.4 L1308 920.4 L1309 920.3 L1310 919.3 L1311 918.9 L1312 921.9 L1313 919.0 L1314 918.9 L1315 919.7 L1316 920.1 L1317 920.0 L1318 922.2 L1319 919.3 L1320 918.8 L1321 921.8 L1322 919.6 L1323 918.0 L1324 919.6 L1325 919.0 L1326 920.4 L1327 920.6 L1328 919.3 L1329 922.1 L1330 920.9 L1331 922.9 L1332 919.2 L1333 921.8 L1334 921.2 L1335 921.7 L1336 922.6 L1337 919.4 L1338 922.1 L1339 921.7 L1340 919.9 L1341 919.6 L1342 923.3 L1343 918.9 L1344 919.0 L1345 919.8 L1346 921.3 L1347 922.0 L1348 922.4 L1349 921.9 L1350 920.1 L1351 919.3 L1352 921.1 L1353 921.1 L1354 919.3 L1355 920.6 L1356 920.9 L1357 919.7 L1358 920.1 L1359 922.5 L1360 919.3 L1361 919.8 L1362 921.9 L1363 921.7 L1364 919.3 L1365 919.7 L1366 923.2 L1367 921.7 L1368 922.1 L1369 923.9 L1370 924.4 L1371 921.7 L1372 923.4 L1373 922.4 L1374 922.8 L1375 922.4 L1376 923.4 L1377 923.5 L1378 921.8 L1379 922.4 L1380 923.1 L1381 921.7 L1382 923.6 L1383 923.3 L1384 923.3 L1385 923.4 L1386 921.6 L1387 923.5 L1388 923.3 L1389 922.6 L1390 921.4 L1391 924.2 L1392 921.7 L1393 920.8 L1394 920.5 L1395 920.3 L1396 922.2 L1397 918.9 L1398 923.0 L1399 921.8 L1400 920.8 L1401 919.5 L1402 919.4 L1403 919.5 L1404 919.2 L1405 920.8 L1406 919.0 L1407 918.1 L1408 920.1 L1409 921.1 L1410 920.4 L1411 919.6 L1412 920.0 L1413 921.2 L1414 919.3 L1415 921.2 L1416 921.2 L1417 919.2 L1418 919.8 L1419 918.7 L1420 920.9 L1421 922.3 L1422 919.3 L1423 921.0 L1424 920.1 L1425 918.6 L1426 921.0 L1427 919.4 L1428 921.1 L1429 920.4 L1430 917.7 L1431 921.1 L1432 921.1 L1433 919.0 L1434 921.1 L1435 918.8 L1436 919.2 L1437 917.7 L1438 921.1 L1439 920.3 L1440 920.6 L1441 920.6 L1442 919.8 L1443 921.1 L1444 920.3 L1445 919.8 L1446 920.4 L1447 921.0 L1448 920.9 L1449 921.1 L1450 921.1 L1451 920.3 L1452 921.0 L1453 918.9 L1454 920.9 L1455 920.0 L1456 921.1 L1457 921.0 L1458 921.2 L1459 922.0 L1460 920.0 L1461 918.8 L1462 920.7 L1463 921.0 L1464 919.7 L1465 920.7 L1466 920.1 L1467 919.5 L1468 918.9 L1469 919.0 L1470 920.0 L1471 918.7 L1472 918.4 L1473 921.1 L1474 919.0 L1475 921.0 L1476 919.5 L1477 918.6 L1478 920.6 L1479 918.4 L1480 917.7 L1481 920.3 L1482 920.0 L1483 920.0 L1484 920.9 L1485 918.8 L1486 919.4 L1487 918.8 L1488 919.8 L1489 919.3 L1490 920.4 L1491 919.4 L1492 921.1 L1493 919.5 L1494 921.1 L1495 920.0 L1496 919.5 L1497 919.8 L1498 920.0 L1499 920.8 L1500 918.7 L1501 918.9 L1502 920.6 L1503 920.6 L1504 917.6 L1505 920.3 L1506 917.6 L1507 920.0 L1508 920.8 L1509 920.3 L1510 920.4 L1511 921.0 L1512 919.4 L1513 921.1 L1514 921.1 L1515 920.6 L1516 918.9 L1517 918.8 L1518 921.6 L1519 920.8 L1520 920.7 L1521 918.5 L1522 919.2 L1523 917.6 L1524 917.6 L1525 918.9 L1526 922.0 L1527 921.1 L1528 919.0 L1529 919.9 L1530 920.3 L1531 918.5 L1532 920.7 L1533 918.9 L1534 920.2 L1535 917.8 L1536 917.6 L1537 918.8 L1538 921.1 L1539 921.0 L1540 921.3 L1541 921.1 L1542 920.6 L1543 919.7 L1544 919.6 L1545 920.1 L1546 921.0 L1547 919.3 L1548 919.7 L1549 920.0 L1550 918.7 L1551 920.3 L1552 920.4 L1553 918.8 L1554 920.4 L1555 920.8 L1556 920.0 L1557 919.0 L1558 918.5 L1559 919.0 L1560 920.2 L1561 919.7 L1562 920.8 L1563 921.1 L1564 920.5 L1565 917.6 L1566 919.3 L1567 920.6 L1568 918.8 L1569 920.9 L1570 920.4 L1571 918.5 L1572 918.6 L1573 921.1 L1574 921.0 L1575 920.9 L1576 921.0 L1577 917.8 L1578 920.4 L1579 919.5 L1580 920.8 L1581 918.8 L1582 918.2 L1583 921.0 L1584 919.7 L1585 920.0 L1586 920.3 L1587 920.6 L1588 920.9 L1589 920.9 L1590 919.4 L1591 919.6 L1592 918.8 L1593 920.6 L1594 921.0 L1595 920.6 L1596 920.2 L1597 920.8 L1598 919.7 L1599 920.2 L1600 920.8 L1601 918.6 L1602 917.7 L1603 920.1 L1604 919.4 L1605 918.5 L1606 918.5 L1607 918.2 L1608 920.9 L1609 920.9 L1610 920.3 L1611 919.6 L1612 918.9 L1613 920.5 L1614 920.0 L1615 919.5 L1616 920.7 L1617 918.6 L1618 920.5 L1619 917.5 L1620 919.5 L1621 919.2 L1622 920.8 L1623 918.4 L1624 921.0 L1625 920.6 L1626 920.3 L1627 919.9 L1628 921.0 L1629 920.9 L1630 920.6 L1631 920.3 L1632 919.5 L1633 917.5 L1634 920.9 L1635 918.6 L1636 921.0 L1637 921.1 L1638 920.6 L1639 918.5 L1640 917.5 L1641 920.8 L1642 920.4 L1643 921.0 L1644 921.0 L1645 920.4 L1646 920.9 L1647 921.0 L1648 919.9 L1649 920.6 L1650 920.9 L1651 920.1 L1652 918.9 L1653 921.0 L1654 920.4 L1655 920.6 L1656 918.5 L1657 920.3 L1658 920.1 L1659 919.9 L1660 920.7 L1661 921.0 L1662 919.9 L1663 920.3 L1664 918.9 L1665 921.0 L1666 919.9 L1667 920.0 L1668 919.9 L1669 918.5 L1670 920.4 L1671 919.4 L1672 920.9 L1673 921.0 L1674 919.5 L1675 919.3 L1676 922.2 L1677 919.5 L1678 919.4 L1679 917.5 L1680 917.5 L1681 920.7 L1682 921.0 L1683 919.0 L1684 920.7 L1685 921.0 L1686 921.0 L1687 921.1 L1688 919.0 L1689 918.1 L1690 919.3 L1691 920.6 L1692 918.8 L1693 919.9 L1694 919.2 L1695 920.3 L1696 919.1 L1697 921.0 L1698 919.9 L1699 918.5 L1700 919.7 L1701 918.5 L1702 921.0 L1703 920.0 L1704 920.5 L1705 920.9 L1706 921.0 L1707 918.5 L1708 919.2 L1709 917.5 L1710 918.7 L1711 919.8 L1712 921.1 L1713 920.9 L1714 920.5 L1715 919.1 L1716 920.9 L1717 918.0 L1718 919.8 L1719 919.4 L1720 921.0 L1721 920.9 L1722 919.9 L1723 920.1 L1724 920.1 L1725 920.6 L1726 919.3 L1727 919.4 L1728 921.0 L1729 921.0 L1730 921.0 L1731 920.6 L1732 921.1 L1733 920.4 L1734 917.8 L1735 918.6 L1736 918.9 L1737 920.2 L1738 918.4 L1739 918.7 L1740 918.8 L1741 920.8 L1742 917.5 L1743 919.3 L1744 919.1 L1745 922.2 L1746 920.3 L1747 920.9 L1748 920.6 L1749 919.9 L1750 920.8 L1751 920.5 L1752 921.1 L1753 919.9 L1754 919.4 L1755 919.1 L1756 920.7 L1757 921.9 L1758 918.8 L1759 920.1 L1760 918.5 L1761 919.3 L1762 918.2 L1763 919.9 L1764 919.8 L1765 920.9 L1766 921.0 L1767 920.2 L1768 917.5 L1769 920.6 L1770 920.4 L1771 921.0 L1772 920.7 L1773 921.0 L1774 918.8 L1775 922.2 L1776 919.5 L1777 921.0 L1778 919.0 L1779 919.2 L1780 920.5 L1781 920.4 L1782 920.1 L1783 920.9 L1784 919.1 L1785 921.7 L1786 922.2 L1787 920.9 L1788 921.1 L1789 918.7 L1790 919.4 L1791 919.2 L1792 919.7 L1793 920.2 L1794 918.6 L1795 919.7 L1796 919.8 L1797 918.8 L1798 918.6 L1799 918.6 L1800 921.0 L1801 921.0 L1802 921.0 L1803 920.7 L1804 920.7 L1805 921.0 L1806 918.2 L1807 921.0 L1808 920.4 L1809 921.5 L1810 919.6 L1811 920.5 L1812 921.1 L1813 920.8 L1814 919.8 L1815 920.6 L1816 920.9 L1817 920.0 L1818 919.2 L1819 919.1 L1820 921.1 L1821 919.5 L1822 920.6 L1823 920.7 L1824 920.6 L1825 921.0 L1826 921.0 L1827 918.7 L1828 920.6 L1829 919.8 L1830 919.7 L1831 919.8 L1832 921.0 L1833 918.6 L1834 918.8 L1835 918.2 L1836 919.7 L1837 918.6 L1838 920.1 L1839 920.0 L1840 918.8 L1841 920.1 L1842 919.4 L1843 920.7 L1844 918.9 L1845 919.8 L1846 921.1 L1847 920.6 L1848 921.1 L1849 919.2 L1850 920.1 L1851 920.2 L1852 921.6 L1853 922.6 L1854 922.1 L1855 921.4 L1856 922.1 L1857 923.1 L1858 925.4 L1858 926.1 L1857 927.5 L1856 929.2 L1855 930.0 L1854 931.3 L1853 928.9 L1852 931.1 L1851 931.0 L1850 931.9 L1849 931.3 L1848 930.7 L1847 930.6 L1846 930.6 L1845 930.6 L1844 930.9 L1843 932.5 L1842 930.7 L1841 933.1 L1840 930.6 L1839 931.2 L1838 932.0 L1837 932.3 L1836 932.8 L1835 932.3 L1834 930.9 L1833 930.7 L1832 929.4 L1831 931.1 L1830 930.9 L1829 932.3 L1828 931.4 L1827 933.4 L1826 932.4 L1825 931.4 L1824 932.4 L1823 930.6 L1822 930.6 L1821 931.1 L1820 931.9 L1819 930.6 L1818 930.7 L1817 930.5 L1816 931.7 L1815 933.1 L1814 931.3 L1813 930.9 L1812 930.9 L1811 931.1 L1810 931.4 L1809 930.2 L1808 932.0 L1807 931.1 L1806 930.7 L1805 932.0 L1804 931.1 L1803 930.6 L1802 932.1 L1801 931.5 L1800 931.2 L1799 934.1 L1798 932.0 L1797 932.7 L1796 930.6 L1795 931.6 L1794 930.6 L1793 932.7 L1792 930.8 L1791 932.9 L1790 931.2 L1789 930.7 L1788 932.0 L1787 930.7 L1786 929.5 L1785 930.1 L1784 932.6 L1783 932.6 L1782 931.7 L1781 931.4 L1780 930.7 L1779 932.3 L1778 930.5 L1777 930.8 L1776 932.5 L1775 929.4 L1774 933.1 L1773 933.3 L1772 931.5 L1771 930.6 L1770 930.7 L1769 930.8 L1768 932.3 L1767 933.4 L1766 934.1 L1765 932.5 L1764 933.1 L1763 932.8 L1762 931.7 L1761 932.5 L1760 933.3 L1759 931.8 L1758 933.3 L1757 930.1 L1756 930.6 L1755 930.8 L1754 932.3 L1753 934.1 L1752 931.9 L1751 930.5 L1750 931.2 L1749 932.9 L1748 930.6 L1747 930.6 L1746 932.2 L1745 929.9 L1744 931.0 L1743 931.8 L1742 934.1 L1741 932.2 L1740 931.7 L1739 932.2 L1738 933.2 L1737 932.9 L1736 932.4 L1735 930.7 L1734 931.0 L1733 932.9 L1732 930.6 L1731 930.9 L1730 931.8 L1729 933.0 L1728 931.4 L1727 930.5 L1726 931.0 L1725 931.6 L1724 931.7 L1723 931.8 L1722 932.1 L1721 930.8 L1720 930.7 L1719 930.9 L1718 930.6 L1717 931.3 L1716 931.1 L1715 930.8 L1714 931.6 L1713 930.9 L1712 933.1 L1711 932.3 L1710 933.0 L1709 931.7 L1708 930.9 L1707 932.6 L1706 933.1 L1705 930.6 L1704 930.7 L1703 932.2 L1702 930.6 L1701 934.1 L1700 930.6 L1699 931.3 L1698 931.3 L1697 930.5 L1696 930.8 L1695 931.7 L1694 932.6 L1693 932.1 L1692 932.5 L1691 932.8 L1690 930.5 L1689 931.0 L1688 931.1 L1687 932.1 L1686 932.2 L1685 932.4 L1684 931.7 L1683 932.9 L1682 930.7 L1681 931.7 L1680 932.6 L1679 931.1 L1678 930.5 L1677 932.8 L1676 929.4 L1675 931.8 L1674 931.0 L1673 931.3 L1672 930.5 L1671 931.0 L1670 930.8 L1669 931.4 L1668 931.3 L1667 932.1 L1666 934.1 L1665 930.8 L1664 932.4 L1663 931.3 L1662 930.9 L1661 931.2 L1660 930.4 L1659 930.6 L1658 932.3 L1657 930.6 L1656 930.8 L1655 930.5 L1654 934.1 L1653 932.8 L1652 930.7 L1651 930.6 L1650 930.5 L1649 930.9 L1648 932.8 L1647 931.2 L1646 930.8 L1645 931.7 L1644 931.5 L1643 931.7 L1642 931.3 L1641 933.1 L1640 932.8 L1639 931.8 L1638 933.1 L1637 930.7 L1636 931.8 L1635 932.6 L1634 932.1 L1633 931.7 L1632 930.9 L1631 931.1 L1630 933.3 L1629 931.0 L1628 930.8 L1627 931.5 L1626 930.8 L1625 930.8 L1624 932.3 L1623 932.8 L1622 931.9 L1621 933.1 L1620 930.6 L1619 931.0 L1618 931.2 L1617 930.5 L1616 934.1 L1615 932.5 L1614 932.2 L1613 933.1 L1612 932.7 L1611 930.8 L1610 930.8 L1609 931.6 L1608 930.5 L1607 932.6 L1606 931.6 L1605 930.5 L1604 932.1 L1603 931.9 L1602 931.6 L1601 933.9 L1600 930.8 L1599 931.3 L1598 931.3 L1597 931.4 L1596 931.3 L1595 931.6 L1594 931.8 L1593 931.6 L1592 931.9 L1591 932.1 L1590 930.6 L1589 931.4 L1588 930.5 L1587 932.7 L1586 933.3 L1585 931.5 L1584 932.0 L1583 933.1 L1582 931.1 L1581 931.7 L1580 931.0 L1579 932.1 L1578 932.8 L1577 934.1 L1576 932.7 L1575 930.8 L1574 930.9 L1573 930.8 L1572 930.7 L1571 931.9 L1570 931.0 L1569 930.7 L1568 931.6 L1567 932.1 L1566 930.6 L1565 930.8 L1564 930.7 L1563 931.7 L1562 934.0 L1561 932.7 L1560 930.5 L1559 933.1 L1558 932.0 L1557 932.1 L1556 931.7 L1555 932.8 L1554 933.4 L1553 930.6 L1552 930.9 L1551 932.1 L1550 930.6 L1549 930.5 L1548 933.3 L1547 930.5 L1546 931.6 L1545 931.6 L1544 931.8 L1543 934.0 L1542 932.1 L1541 930.6 L1540 929.5 L1539 934.0 L1538 930.6 L1537 930.6 L1536 930.9 L1535 932.8 L1534 934.0 L1533 933.0 L1532 933.0 L1531 932.1 L1530 931.3 L1529 930.6 L1528 932.7 L1527 931.1 L1526 930.4 L1525 930.5 L1524 930.6 L1523 933.0 L1522 932.2 L1521 932.0 L1520 930.5 L1519 930.5 L1518 930.5 L1517 931.3 L1516 931.3 L1515 932.5 L1514 931.2 L1513 931.2 L1512 931.3 L1511 932.4 L1510 930.5 L1509 930.9 L1508 933.8 L1507 931.0 L1506 931.9 L1505 931.1 L1504 934.0 L1503 930.7 L1502 930.5 L1501 934.0 L1500 931.5 L1499 930.8 L1498 932.2 L1497 931.8 L1496 931.1 L1495 932.2 L1494 932.0 L1493 931.5 L1492 930.7 L1491 931.7 L1490 932.6 L1489 932.5 L1488 932.7 L1487 933.0 L1486 932.5 L1485 932.4 L1484 933.9 L1483 932.0 L1482 932.0 L1481 930.5 L1480 930.8 L1479 932.0 L1478 932.2 L1477 930.5 L1476 932.7 L1475 932.2 L1474 931.2 L1473 930.8 L1472 931.8 L1471 932.4 L1470 931.5 L1469 931.9 L1468 930.5 L1467 933.9 L1466 932.0 L1465 931.8 L1464 930.4 L1463 933.0 L1462 932.2 L1461 932.9 L1460 932.6 L1459 929.4 L1458 931.0 L1457 930.8 L1456 931.8 L1455 930.5 L1454 932.5 L1453 930.5 L1452 932.0 L1451 930.6 L1450 931.3 L1449 932.9 L1448 932.1 L1447 930.9 L1446 931.6 L1445 931.9 L1444 931.8 L1443 931.6 L1442 930.9 L1441 929.3 L1440 931.1 L1439 930.7 L1438 931.4 L1437 930.7 L1436 931.6 L1435 933.2 L1434 930.4 L1433 932.0 L1432 931.1 L1431 931.8 L1430 931.1 L1429 931.0 L1428 932.4 L1427 932.9 L1426 932.6 L1425 930.5 L1424 932.8 L1423 933.0 L1422 932.1 L1421 929.3 L1420 932.8 L1419 930.4 L1418 933.7 L1417 932.8 L1416 932.7 L1415 931.8 L1414 932.5 L1413 930.6 L1412 930.5 L1411 933.7 L1410 930.5 L1409 932.5 L1408 932.8 L1407 930.3 L1406 931.9 L1405 930.8 L1404 931.6 L1403 931.1 L1402 931.8 L1401 930.3 L1400 930.3 L1399 932.1 L1398 928.5 L1397 929.8 L1396 928.9 L1395 932.4 L1394 929.5 L1393 932.6 L1392 929.9 L1391 928.4 L1390 928.7 L1389 927.9 L1388 928.6 L1387 927.2 L1386 930.1 L1385 929.2 L1384 929.9 L1383 928.8 L1382 927.5 L1381 929.4 L1380 930.7 L1379 928.5 L1378 928.6 L1377 928.7 L1376 928.1 L1375 930.0 L1374 928.6 L1373 929.5 L1372 928.7 L1371 929.2 L1370 927.3 L1369 928.3 L1368 928.8 L1367 929.1 L1366 928.3 L1365 931.8 L1364 932.3 L1363 931.6 L1362 932.3 L1361 930.6 L1360 930.7 L1359 930.4 L1358 932.6 L1357 932.2 L1356 931.7 L1355 929.8 L1354 930.0 L1353 931.9 L1352 932.4 L1351 931.9 L1350 931.2 L1349 930.0 L1348 930.8 L1347 929.1 L1346 931.7 L1345 929.9 L1344 932.7 L1343 931.6 L1342 929.9 L1341 930.8 L1340 929.8 L1339 933.6 L1338 930.2 L1337 929.0 L1336 928.0 L1335 930.7 L1334 931.2 L1333 928.2 L1332 931.0 L1331 929.9 L1330 931.5 L1329 930.0 L1328 930.2 L1327 932.3 L1326 929.2 L1325 932.4 L1324 929.5 L1323 932.5 L1322 929.9 L1321 931.2 L1320 929.2 L1319 933.6 L1318 932.5 L1317 930.5 L1316 931.8 L1315 931.8 L1314 930.4 L1313 929.5 L1312 929.9 L1311 931.5 L1310 932.3 L1309 932.9 L1308 931.0 L1307 928.6 L1306 929.2 L1305 929.8 L1304 929.6 L1303 929.2 L1302 932.1 L1301 930.0 L1300 930.0 L1299 928.1 L1298 932.1 L1297 931.8 L1296 932.8 L1295 930.6 L1294 931.4 L1293 933.6 L1292 932.7 L1291 930.5 L1290 931.4 L1289 931.2 L1288 932.8 L1287 932.6 L1286 931.8 L1285 930.4 L1284 933.6 L1283 929.2 L1282 929.3 L1281 930.2 L1280 931.0 L1279 931.1 L1278 931.4 L1277 930.9 L1276 930.2 L1275 929.1 L1274 929.8 L1273 931.9 L1272 930.4 L1271 930.1 L1270 932.3 L1269 932.5 L1268 932.2 L1267 928.5 L1266 931.4 L1265 929.8 L1264 930.0 L1263 931.6 L1262 932.8 L1261 931.4 L1260 932.5 L1259 932.7 L1258 930.8 L1257 930.1 L1256 932.1 L1255 931.5 L1254 929.8 L1253 932.0 L1252 929.4 L1251 932.5 L1250 932.1 L1249 928.6 L1248 933.6 L1247 929.9 L1246 932.5 L1245 931.2 L1244 933.6 L1243 930.8 L1242 932.2 L1241 929.1 L1240 933.6 L1239 932.4 L1238 928.9 L1237 932.3 L1236 928.8 L1235 928.6 L1234 931.0 L1233 930.2 L1232 930.7 L1231 932.2 L1230 930.7 L1229 930.7 L1228 930.1 L1227 931.2 L1226 930.9 L1225 931.0 L1224 932.3 L1223 931.7 L1222 931.5 L1221 933.5 L1220 931.2 L1219 928.4 L1218 929.9 L1217 932.6 L1216 930.9 L1215 928.3 L1214 931.7 L1213 931.7 L1212 930.5 L1211 930.2 L1210 931.1 L1209 930.4 L1208 931.6 L1207 930.4 L1206 931.7 L1205 928.9 L1204 929.2 L1203 928.2 L1202 933.0 L1201 930.3 L1200 931.3 L1199 930.4 L1198 932.5 L1197 931.6 L1196 929.3 L1195 933.2 L1194 931.3 L1193 929.0 L1192 932.4 L1191 931.7 L1190 930.9 L1189 931.4 L1188 933.3 L1187 931.3 L1186 932.1 L1185 930.9 L1184 930.7 L1183 932.3 L1182 931.7 L1181 929.6 L1180 931.7 L1179 931.7 L1178 928.9 L1177 928.9 L1176 930.2 L1175 928.1 L1174 931.5 L1173 930.1 L1172 931.2 L1171 928.0 L1170 932.1 L1169 929.5 L1168 930.5 L1167 931.2 L1166 931.0 L1165 932.3 L1164 931.1 L1163 929.9 L1162 930.7 L1161 933.2 L1160 931.8 L1159 930.5 L1158 931.6 L1157 929.3 L1156 929.5 L1155 930.6 L1154 929.1 L1153 929.5 L1152 932.0 L1151 929.7 L1150 931.5 L1149 928.2 L1148 929.5 L1147 931.0 L1146 930.4 L1145 929.8 L1144 929.7 L1143 930.9 L1142 931.2 L1141 930.2 L1140 930.6 L1139 930.9 L1138 928.6 L1137 929.9 L1136 931.7 L1135 931.4 L1134 929.8 L1133 928.9 L1132 930.6 L1131 931.9 L1130 930.9 L1129 930.5 L1128 929.8 L1127 930.2 L1126 931.7 L1125 931.9 L1124 930.6 L1123 929.7 L1122 930.0 L1121 931.1 L1120 929.9 L1119 929.3 L1118 929.5 L1117 930.1 L1116 931.9 L1115 929.7 L1114 930.1 L1113 928.6 L1112 931.4 L1111 930.5 L1110 928.9 L1109 928.8 L1108 931.7 L1107 931.1 L1106 929.4 L1105 931.2 L1104 931.4 L1103 929.9 L1102 931.2 L1101 931.1 L1100 930.1 L1099 929.3 L1098 929.8 L1097 926.4 L1096 926.4 L1095 928.6 L1094 929.3 L1093 928.8 L1092 930.4 L1091 929.5 L1090 926.4 L1089 926.4 L1088 929.1 L1087 929.6 L1086 928.9 L1085 928.5 L1084 929.2 L1083 926.4 L1082 926.4 L1081 929.0 L1080 928.7 L1079 930.1 L1078 929.2 L1077 928.3 L1076 926.3 L1075 926.3 L1074 928.5 L1073 929.4 L1072 928.8 L1071 927.6 L1070 928.2 L1069 926.1 L1068 926.1 L1067 927.4 L1066 927.0 L1065 927.3 L1064 928.0 L1063 929.6 L1062 926.2 L1061 926.2 L1060 927.5 L1059 927.0 L1058 926.8 L1057 927.3 L1056 928.9 L1055 928.2 L1054 930.1 L1053 931.4 L1052 933.0 L1051 934.0 L1050 930.9 L1049 932.6 L1048 933.1 L1047 932.6 L1046 932.5 L1045 932.4 L1044 932.2 L1043 932.3 L1042 929.9 L1041 930.9 L1040 932.8 L1039 933.9 L1038 928.9 L1037 928.6 L1036 929.4 L1035 931.3 L1034 931.4 L1033 932.5 L1032 930.7 L1031 932.5 L1030 931.1 L1029 931.1 L1028 933.9 L1027 932.7 L1026 932.1 L1025 931.5 L1024 929.1 L1023 932.0 L1022 932.7 L1021 928.9 L1020 932.5 L1019 930.8 L1018 931.0 L1017 929.9 L1016 933.4 L1015 929.6 L1014 931.9 L1013 932.6 L1012 931.7 L1011 931.6 L1010 932.4 L1009 932.9 L1008 930.7 L1007 932.7 L1006 932.3 L1005 932.2 L1004 933.9 L1003 930.6 L1002 931.3 L1001 931.6 L1000 932.7 L999 931.2 L998 933.9 L997 931.7 L996 932.9 L995 929.1 L994 930.6 L993 931.8 L992 929.6 L991 931.3 L990 932.4 L989 931.9 L988 932.6 L987 932.1 L986 932.4 L985 930.0 L984 931.9 L983 928.5 L982 930.7 L981 932.5 L980 931.7 L979 931.6 L978 932.3 L977 930.4 L976 932.3 L975 932.4 L974 932.8 L973 928.9 L972 933.8 L971 932.4 L970 929.8 L969 930.3 L968 930.5 L967 931.5 L966 932.4 L965 933.2 L964 931.1 L963 931.7 L962 929.8 L961 932.1 L960 932.2 L959 931.3 L958 929.6 L957 930.8 L956 932.7 L955 932.4 L954 933.3 L953 929.9 L952 932.9 L951 928.9 L950 931.1 L949 932.8 L948 930.8 L947 932.1 L946 931.6 L945 931.9 L944 929.8 L943 931.8 L942 931.0 L941 929.8 L940 932.6 L939 933.5 L938 931.5 L937 929.6 L936 932.8 L935 931.4 L934 929.8 L933 931.9 L932 931.9 L931 930.9 L930 931.4 L929 931.0 L928 932.4 L927 930.7 L926 933.8 L925 933.8 L924 929.5 L923 930.4 L922 930.3 L921 933.0 L920 931.1 L919 931.1 L918 932.8 L917 933.8 L916 930.8 L915 931.5 L914 932.7 L913 932.8 L912 932.1 L911 933.6 L910 933.7 L909 932.2 L908 931.1 L907 931.7 L906 930.6 L905 932.4 L904 930.9 L903 930.7 L902 930.9 L901 931.6 L900 931.7 L899 932.8 L898 932.3 L897 932.6 L896 933.7 L895 932.4 L894 930.0 L893 930.0 L892 929.3 L891 928.5 L890 933.6 L889 931.1 L888 930.4 L887 931.9 L886 931.4 L885 930.7 L884 932.7 L883 932.0 L882 930.5 L881 930.9 L880 929.5 L879 932.5 L878 930.8 L877 931.7 L876 932.1 L875 931.7 L874 931.9 L873 930.6 L872 931.1 L871 931.5 L870 930.5 L869 932.6 L868 932.6 L867 930.6 L866 932.1 L865 933.7 L864 930.9 L863 932.6 L862 932.2 L861 932.3 L860 933.2 L859 932.4 L858 932.4 L857 931.4 L856 928.8 L855 933.7 L854 932.4 L853 930.8 L852 931.4 L851 931.0 L850 931.8 L849 932.6 L848 932.5 L847 932.7 L846 931.5 L845 932.4 L844 931.8 L843 930.2 L842 931.9 L841 930.4 L840 931.1 L839 930.7 L838 932.2 L837 931.8 L836 932.3 L835 933.2 L834 928.4 L833 930.8 L832 929.2 L831 928.4 L830 929.9 L829 929.5 L828 929.2 L827 928.4 L826 931.3 L825 930.5 L824 928.9 L823 928.9 L822 927.7 L821 930.9 L820 930.5 L819 929.9 L818 927.0 L817 928.4 L816 928.4 L815 928.2 L814 927.9 L813 927.7 L812 927.3 L811 929.0 L810 926.9 L809 928.1 L808 928.5 L807 927.9 L806 928.4 L805 928.3 L804 928.3 L803 927.7 L802 928.3 L801 927.9 L800 927.7 L799 928.4 L798 927.4 L797 927.8 L796 928.1 L795 926.7 L794 927.5 L793 928.4 L792 928.1 L791 928.1 L790 928.2 L789 928.0 L788 927.7 L787 928.3 L786 927.8 L785 928.0 L784 928.8 L783 928.0 L782 927.7 L781 927.5 L780 928.1 L779 927.7 L778 927.3 L777 928.1 L776 928.5 L775 927.7 L774 928.5 L773 928.4 L772 927.5 L771 928.5 L770 927.9 L769 928.5 L768 928.1 L767 927.9 L766 928.5 L765 927.4 L764 927.4 L763 928.9 L762 927.4 L761 928.0 L760 928.3 L759 928.4 L758 928.5 L757 928.4 L756 928.2 L755 928.0 L754 927.7 L753 928.2 L752 928.2 L751 927.7 L750 928.4 L749 927.7 L748 928.3 L747 928.2 L746 928.0 L745 927.8 L744 928.5 L743 927.8 L742 927.1 L741 926.9 L740 927.8 L739 927.2 L738 927.7 L737 927.9 L736 927.1 L735 928.0 L734 928.0 L733 928.9 L732 930.1 L731 928.8 L730 928.6 L729 929.8 L728 928.1 L727 928.5 L726 928.2 L725 928.4 L724 928.2 L723 926.1z" fill="#8e3246"/><path d="M719 907.800h5M719 925.800h5" stroke="#8e3246" stroke-width="0.800"/></svg>
<div style="left:719px;top:979px;width:1180px;height:14px;background:#f0f0f0"></div>
<svg style="left:724px;top:982px" width="5" height="8"><path d="M4.500 0.500v7l-4-3.500z" fill="#555"/></svg>
<div style="left:736px;top:979.5px;width:1092px;height:13px;border:1px solid #b9b9b9;border-radius:2px;background:linear-gradient(#f4f4f4 0%,#e6e6e6 45%,#d0d0d0 55%,#c8c8c8 100%)"></div>
<div style="left:740px;top:983px;width:1px;height:6px;background:#555"></div>
<div style="left:742.5px;top:983px;width:1px;height:6px;background:#555"></div>
<div style="left:1820px;top:983px;width:1px;height:6px;background:#555"></div>
<div style="left:1822.5px;top:983px;width:1px;height:6px;background:#555"></div>
<svg style="left:1832px;top:982px" width="5" height="8"><path d="M0.500 0.500v7l4-3.500z" fill="#555"/></svg>
<div style="left:1845px;top:979.5px;width:12.5px;height:13px;border:1px solid #8a8a8a;border-radius:2px;background:linear-gradient(#fafafa,#dcdcdc)"></div>
<div style="left:1848.25px;top:985.0px;width:6px;height:2px;background:#111"></div>
<div style="left:1850.25px;top:983.0px;width:2px;height:6px;background:#111"></div>
<div style="left:1859px;top:980px;width:6px;height:12px;border:1px solid #b5b5b5;background:#e4e4e4"></div>
<div style="left:1867px;top:979.5px;width:12.5px;height:13px;border:1px solid #8a8a8a;border-radius:2px;background:linear-gradient(#fafafa,#dcdcdc)"></div>
<div style="left:1870.25px;top:985.0px;width:6px;height:2px;background:#111"></div>
<div style="left:1883px;top:809px;width:15px;height:169px;background:#f0f0f0"></div>
<svg style="left:1886px;top:816.500px" width="9" height="6"><path d="M0.500 5l4-4 4 4z" fill="#555"/></svg>
<div style="left:1884px;top:828px;width:13px;height:72px;border:1px solid #b1b1b1;border-radius:3px;background:linear-gradient(90deg,#f5f5f5 0%,#e6e6e6 45%,#d4d4d4 55%,#dfdfdf 100%)"></div>
<svg style="left:1886px;top:926px" width="9" height="6"><path d="M0.500 1l4 4 4-4z" fill="#666"/></svg>
<div style="left:1884px;top:939.5px;width:13.5px;height:12.5px;border:1px solid #8a8a8a;border-radius:2px;background:linear-gradient(#fafafa,#dcdcdc)"></div>
<div style="left:1887.75px;top:944.75px;width:6px;height:2px;background:#111"></div>
<div style="left:1889.75px;top:942.75px;width:2px;height:6px;background:#111"></div>
<div style="left:1885px;top:954px;width:12px;height:5px;border:1px solid #c2c2c2;background:#e8e8e8"></div>
<div style="left:1884px;top:962px;width:13.5px;height:12.5px;border:1px solid #8a8a8a;border-radius:2px;background:linear-gradient(#fafafa,#dcdcdc)"></div>
<div style="left:1887.75px;top:967.25px;width:6px;height:2px;background:#111"></div>
<div style="left:1859px;top:809px;width:40px;height:1px;background:#c4c4c4"></div>
<div style="left:717px;top:978px;width:1px;height:45px;background:#d2d2d2"></div>
<div style="left:718px;top:978px;width:1px;height:45px;background:#fafafa"></div>
<div style="left:521px;top:977px;width:197px;height:1px;background:#fafafa"></div>
<svg style="left:724.5px;top:1002px" width="18" height="14"><path d="M0.800 0.500v12" stroke="#8c8c8c" stroke-width="1.600"/><path d="M3.500 0.500v12l12.500-6z" fill="#a9a9a9" stroke="#8c8c8c" stroke-width="0.800"/></svg>
<svg style="left:749.5px;top:1002px" width="18" height="14"><path d="M0.500 0.500v12l14-6z" fill="#a9a9a9" stroke="#8c8c8c" stroke-width="0.800"/></svg>
<svg style="left:775px;top:1002px" width="18" height="14"><rect x="0.500" y="0.500" width="4.500" height="12" fill="#a9a9a9" stroke="#8c8c8c" stroke-width="0.800"/><rect x="7.500" y="0.500" width="4.500" height="12" fill="#a9a9a9" stroke="#8c8c8c" stroke-width="0.800"/></svg>
<svg style="left:798.5px;top:1002px" width="18" height="14"><rect x="0.500" y="0.500" width="12" height="12" fill="#a9a9a9" stroke="#8c8c8c" stroke-width="0.800"/></svg>
<div style="left:818.5px;top:1001px;width:1px;height:16px;background:#a5a5a5"></div>
<div style="left:819.5px;top:1001px;width:1px;height:16px;background:#fff"></div>
<svg style="left:829.5px;top:1002px" width="18" height="14"><rect x="0.500" y="0.500" width="2" height="12" fill="#a9a9a9" stroke="#8c8c8c" stroke-width="0.800"/><path d="M12.500 0.500v12l-9.500-6z" fill="#a9a9a9" stroke="#8c8c8c" stroke-width="0.800"/></svg>
<svg style="left:854px;top:1002px" width="18" height="14"><rect x="10" y="0.500" width="2" height="12" fill="#a9a9a9" stroke="#8c8c8c" stroke-width="0.800"/><path d="M0.500 0.500v12l9.500-6z" fill="#a9a9a9" stroke="#8c8c8c" stroke-width="0.800"/></svg>
<div style="left:1672.5px;top:1000px;width:72px;height:18px;border:1px solid #c6c6c6;border-right-color:#fafafa;border-bottom-color:#fafafa;background:#f0f0f0"></div>
<div class="t" style="left:1677.0px;top:1001.5px;font-size:11px;letter-spacing:0.109px;">00:00:00:00</div>
<div style="left:1748px;top:1000px;width:72px;height:18px;border:1px solid #c6c6c6;border-right-color:#fafafa;border-bottom-color:#fafafa;background:#f0f0f0"></div>
<div class="t" style="left:1752.5px;top:1001.5px;font-size:11px;letter-spacing:0.109px;">00:02:27:08</div>
<div style="left:1823px;top:1000px;width:72px;height:18px;border:1px solid #c6c6c6;border-right-color:#fafafa;border-bottom-color:#fafafa;background:#f0f0f0"></div>
<div class="t" style="left:1827.5px;top:1001.5px;font-size:11px;letter-spacing:0.109px;">00:02:27:08</div>
<div style="left:501px;top:1023.5px;width:1396px;height:21px;background:#bdbdbd"></div>
<svg style="left:501px;top:1023.5px" width="1396" height="21"><path d="M314.4 0H397L390 15.5H307.4z" fill="#e3e3e3"/><path d="M397 0L390 15.5" stroke="#9a9a9a" stroke-width="0.900" fill="none"/><path d="M315.59999999999997 0L308.59999999999997 15.5" stroke="#f8f8f8" stroke-width="1" fill="none"/><path d="M231.79999999999995 0H314.4L307.4 15.5H224.79999999999995z" fill="#e3e3e3"/><path d="M314.4 0L307.4 15.5" stroke="#9a9a9a" stroke-width="0.900" fill="none"/><path d="M232.99999999999994 0L225.99999999999994 15.5" stroke="#f8f8f8" stroke-width="1" fill="none"/><path d="M122.70000000000005 0H231.79999999999995L224.79999999999995 15.5H115.70000000000005z" fill="#e3e3e3"/><path d="M231.79999999999995 0L224.79999999999995 15.5" stroke="#9a9a9a" stroke-width="0.900" fill="none"/><path d="M123.90000000000005 0L116.90000000000005 15.5" stroke="#f8f8f8" stroke-width="1" fill="none"/><path d="M0 0H122.70000000000005L115.70000000000005 15.5H10z" fill="#f0f0f0"/><path d="M122.70000000000005 0L115.70000000000005 15.5" stroke="#8a8a8a" stroke-width="0.900" fill="none"/><path d="M-0.5 0L9.5 15.5" stroke="#9a9a9a" stroke-width="0.800" fill="none"/></svg>
<div class="t" style="left:515.2px;top:1024.2px;font-size:11.5px;letter-spacing:0.225px;font-weight:bold;">Barre temporelle</div>
<div class="t" style="left:634px;top:1024.2px;font-size:11px;letter-spacing:-0.135px;">Listes de lecture</div>
<div class="t" style="left:741.3px;top:1024.2px;font-size:11px;letter-spacing:-0.325px;">Compilation</div>
<div class="t" style="left:823.3px;top:1024.2px;font-size:11px;letter-spacing:-0.445px;">Scripts DVD</div>
<!-- status bar -->
<div style="left:0px;top:1046px;width:1900px;height:1px;background:#c4c4c4"></div>
<div style="left:0px;top:1047px;width:1900px;height:1px;background:#fbfbfb"></div>
<div style="left:0px;top:1048px;width:1900px;height:21px;background:#f0eeee"></div>
<div class="t" style="left:6.3px;top:1050px;font-size:11px;letter-spacing:-0.046px;">Prêt.</div>
<div style="left:1720px;top:1050.5px;width:179.5px;height:14.5px;background:#f86c6c"></div>
<svg style="left:1723px;top:1050px" width="16" height="15"><circle cx="7.500" cy="7.500" r="7" fill="#d9e6d0" stroke="#6a7a5a" stroke-width="0.800"/><path d="M7.500 0.500a7 7 0 0 1 6.500 4.500l-6.500 2.500z" fill="#4caf50"/><path d="M7.500 7.500l-6.500 2a7 7 0 0 0 4 4.500z" fill="#f4d03f"/><circle cx="7.500" cy="7.500" r="2" fill="#fff" stroke="#777" stroke-width="0.600"/></svg>
<div class="t" style="left:1741.5px;top:1050px;font-size:11px;letter-spacing:-0.251px;color:#3a1010;">Espace disque utilisé : 5,1 Go</div>
<div style="left:0px;top:1069px;width:1902px;height:1px;background:#5f6f86"></div>
<div style="left:0px;top:1070px;width:1920px;height:6px;background:#fdfdfd"></div>
<div style="left:40px;top:1070px;width:1600px;height:2px;background:repeating-linear-gradient(90deg,transparent 0,transparent 60px,#d6d6d6 60px,#d6d6d6 68px,transparent 68px,transparent 118px);opacity:.7"></div>
<!-- right edge -->
<div style="left:1898px;top:43px;width:4px;height:1026px;background:#f0f0f0"></div>
<div style="left:1899px;top:74px;width:1px;height:972px;background:#d9d9d9"></div>
<div style="left:1902px;top:0px;width:18px;height:1070px;background:#f0f0f0"></div>
<div style="left:1902px;top:0px;width:1px;height:1070px;background:#dfe6ef"></div>
<div style="left:1902px;top:0px;width:18px;height:21px;background:linear-gradient(90deg,#a9c6ea,#b9d3f0 40%,#c4daf2)"></div>
<svg style="left:1903px;top:3px" width="17" height="16"><ellipse cx="7" cy="9.500" rx="6.500" ry="5.500" fill="#f4f0e4" stroke="#8a8f9c" stroke-width="0.800"/><circle cx="4" cy="8" r="1.500" fill="#e23a3a"/><circle cx="7" cy="6.500" r="1.500" fill="#3a7ae2"/><circle cx="10" cy="8" r="1.500" fill="#3ab24a"/><circle cx="6" cy="12" r="1.500" fill="#f2c21a"/><path d="M12.500 1l1.500 0 0 13-1.500 0z" fill="#e8902a"/><path d="M15 3v10" stroke="#6a8ad0" stroke-width="1.500"/></svg>
<div style="left:1902px;top:21px;width:18px;height:23px;background:linear-gradient(#3f70b5,#1f4f94 60%,#2a5ba0)"></div>
<div style="left:1916px;top:28px;width:4px;height:10px;background:#f4f6fa"></div>
<div style="left:1902px;top:44px;width:18px;height:92px;background:linear-gradient(#e4ecf7,#eef3fa 50%,#e2eaf5)"></div>
<div style="left:1917px;top:55px;width:3px;height:27px;background:#b98a4a;border-radius:2px 0 0 2px"></div>
<div class="t" style="left:1914px;top:87px;font-size:11px;">C</div>
<div style="left:1902px;top:136px;width:18px;height:1px;background:#8a98ad"></div>
<div style="left:1905px;top:137px;width:15px;height:20px;background:linear-gradient(#5f7fa8,#3c5f8f)"></div>
<svg style="left:1908px;top:139px" width="12" height="16"><circle cx="8" cy="8" r="7.500" fill="#1f6fb8"/><path d="M3 5a6 6 0 0 1 6-3.500a5 5 0 0 0-3.500 6z" fill="#cfeeff"/><circle cx="9.500" cy="9" r="3" fill="#06264f"/></svg>
<div style="left:1905px;top:157px;width:15px;height:23px;background:linear-gradient(#fafbfe,#dfe4f3)"></div>
<div class="t" style="left:1914px;top:160.5px;font-size:12px;">F</div>
<div style="left:1905px;top:180px;width:15px;height:1px;background:#cfcfcf"></div>
<div style="left:1914px;top:190px;width:6px;height:15px;background:#e4e4e4;border:1px solid #a5a5a5;border-right:none"></div>
<div style="left:1905px;top:211px;width:15px;height:1px;background:#bdbdbd"></div>
<div style="left:1901px;top:137px;width:7.5px;height:888px;background:linear-gradient(90deg,#e9eef6,#cbd8ea 40%,#cdd9eb 70%,#e4eaf4)"></div>
<div style="left:1909px;top:216px;width:1px;height:809px;background:#a9a9a9"></div>
<div style="left:1910px;top:216px;width:10px;height:1px;background:#a9a9a9"></div>
<div style="left:1914px;top:260px;width:1px;height:649px;background:#8c8c8c"></div>
<div style="left:1914px;top:260px;width:6px;height:1px;background:#8c8c8c"></div>
<div style="left:1915px;top:261px;width:5px;height:648px;background:#fff"></div>
<div style="left:1914px;top:909px;width:6px;height:1px;background:#8c8c8c"></div>
<div style="left:1910px;top:922px;width:10px;height:1px;background:#b5b5b5"></div>
<svg style="left:1913px;top:927px" width="7" height="7"><path d="M0.500 0.500l6 6M6.500 0.500l-6 6" stroke="#333" stroke-width="1.600"/></svg>
<svg style="left:1914px;top:939px" width="6" height="9"><path d="M5.500 0.500v8l-5-4z" fill="#444"/></svg>
<div style="left:1915px;top:958.5px;width:3px;height:2.8px;background:#4a4a4a;border-radius:1.300px"></div>
<div style="left:1915px;top:963.1px;width:3px;height:2.8px;background:#4a4a4a;border-radius:1.300px"></div>
<div style="left:1915px;top:967.7px;width:3px;height:2.8px;background:#4a4a4a;border-radius:1.300px"></div>
<div style="left:1915px;top:972.3px;width:3px;height:2.8px;background:#4a4a4a;border-radius:1.300px"></div>
<div style="left:1915px;top:976.9px;width:3px;height:2.8px;background:#4a4a4a;border-radius:1.300px"></div>
<div style="left:1915px;top:981.5px;width:3px;height:2.8px;background:#4a4a4a;border-radius:1.300px"></div>
<svg style="left:1908px;top:1031px" width="5" height="8"><path d="M4.500 0.500v7l-4-3.500z" fill="#555"/></svg>
<div style="left:1902px;top:1046px;width:18px;height:24px;background:#f0f0f0"></div>
<svg style="left:1905px;top:1051px" width="13" height="13"><path d="M6.500 0.500v12M0.500 6.500h12" stroke="#1f3f6f" stroke-width="1.400"/><path d="M6.500 0l2 2.500h-4zM6.500 13l2-2.500h-4zM0 6.500l2.500-2v4zM13 6.500l-2.500-2v4z" fill="#1f3f6f"/></svg>
</body></html>
